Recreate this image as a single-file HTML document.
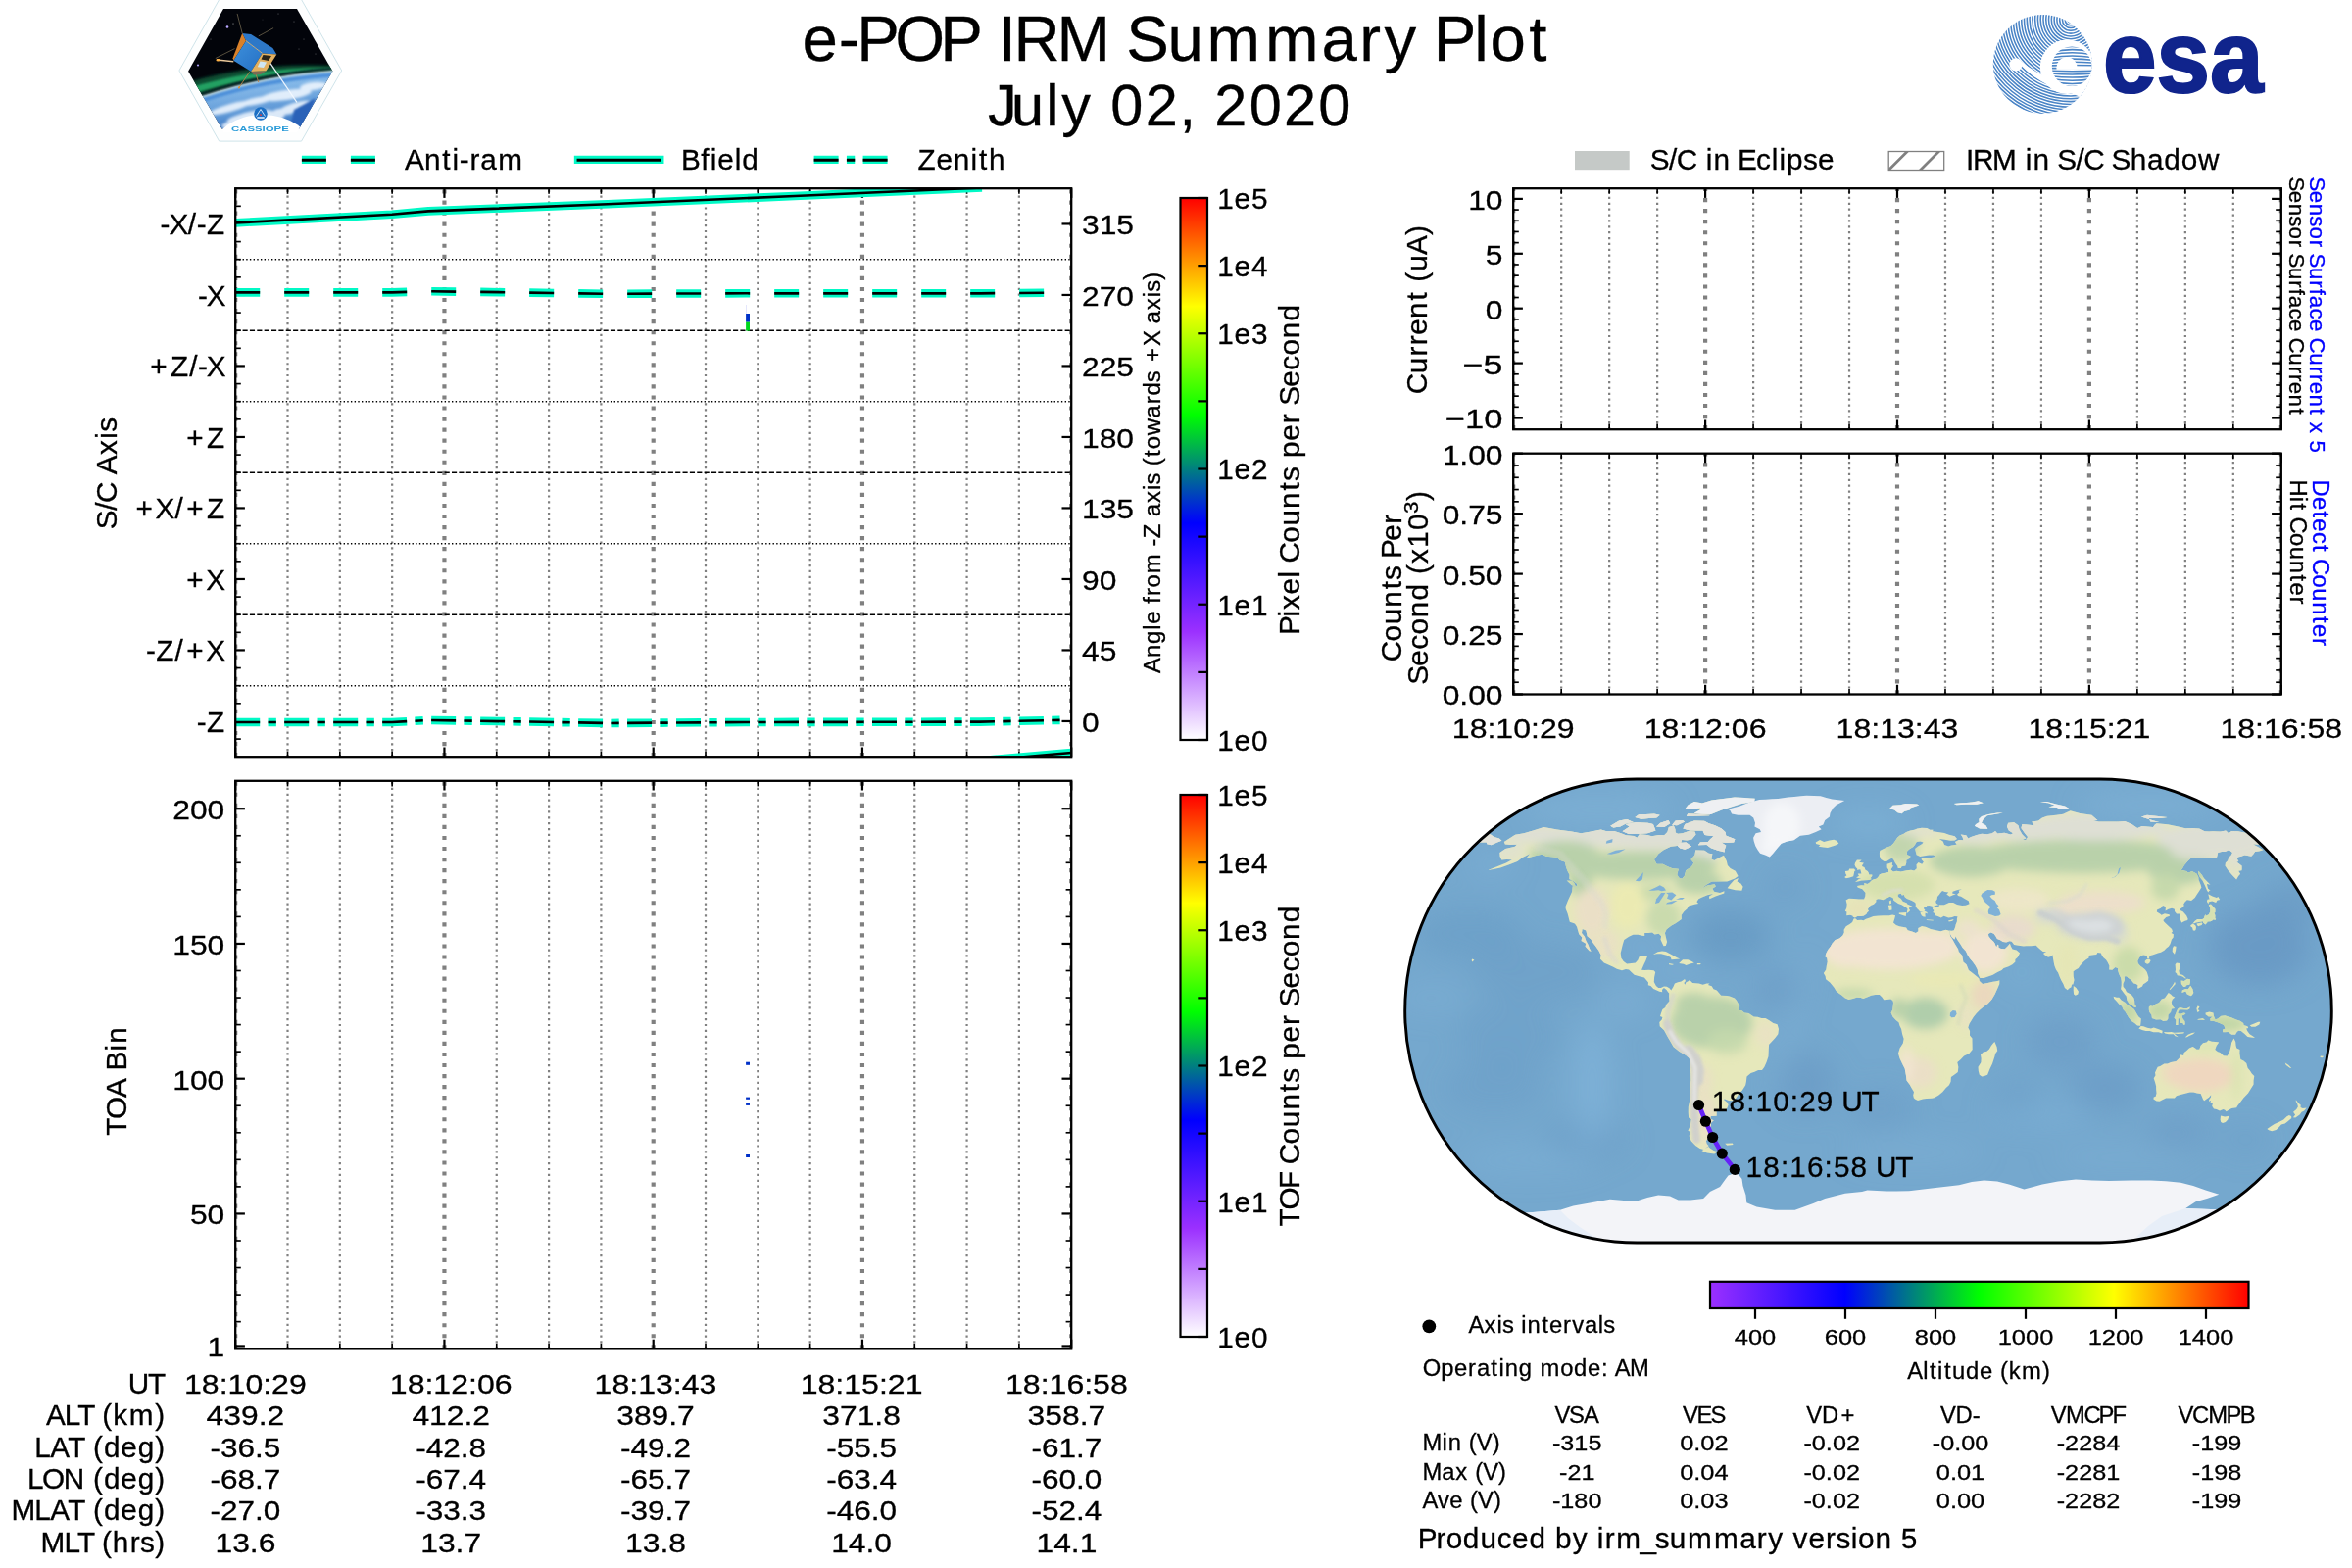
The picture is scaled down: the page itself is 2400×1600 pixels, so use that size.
<!DOCTYPE html><html><head><meta charset="utf-8"><title>e-POP IRM Summary Plot</title>
<style>html,body{margin:0;padding:0;background:#fff;}body{width:2400px;height:1600px;overflow:hidden;}svg{display:block;will-change:transform;}text{font-family:"Liberation Sans",sans-serif;white-space:pre;}</style></head><body>
<svg width="2400" height="1600" viewBox="0 0 2400 1600">
<rect width="2400" height="1600" fill="#fff"/>
<defs>
<linearGradient id="cmapV" x1="0" y1="1" x2="0" y2="0"><stop offset="0" stop-color="#ffffff"/><stop offset="0.2" stop-color="#9b30ff"/><stop offset="0.4" stop-color="#0000ff"/><stop offset="0.6" stop-color="#00ff00"/><stop offset="0.8" stop-color="#ffff00"/><stop offset="1" stop-color="#ff0000"/></linearGradient>
<linearGradient id="cmapH" x1="0" y1="0" x2="1" y2="0"><stop offset="0" stop-color="#9b30ff"/><stop offset="0.25" stop-color="#0000ff"/><stop offset="0.5" stop-color="#00ff00"/><stop offset="0.75" stop-color="#ffff00"/><stop offset="1" stop-color="#ff0000"/></linearGradient>
<clipPath id="clip1"><rect x="240.2" y="192.2" width="853.0" height="580.0"/></clipPath>
</defs>
<text transform="translate(1199.70,62.20) scale(1.0094,1)" x="-377.6 -340.8 -322.4 -283.9 -238.3 -197.8 -179.2 -163.7 -120.1 -66.4 -50.1 -8.2 31.6 90.5 147.5 185.8 210.7 245.4 260.7 301.8 317.9 357.3" y="0" font-size="64.78" fill="#000" stroke="#000" stroke-width="0.3">e-POP IRM Summary Plot</text>
<text transform="translate(1197.10,127.60) scale(1.0094,1)" x="-187.4 -163.5 -128.6 -112.8 -81.2 -63.2 -28.2 6.3 23.8 41.8 76.9 111.9 146.9" y="0" font-size="58.89" fill="#000" stroke="#000" stroke-width="0.3">July 02, 2020</text>
<g id="cassiope">
<defs>
<clipPath id="hexin"><polygon points="192.1,72.7 228,8.9 303,8.9 339.4,72.7 305,131.4 226.5,131.4"/></clipPath>
<linearGradient id="earthg" x1="0" y1="0" x2="0.25" y2="1"><stop offset="0" stop-color="#9fcdf2"/><stop offset="0.35" stop-color="#84b8e8"/><stop offset="0.7" stop-color="#5d97d6"/><stop offset="1" stop-color="#2f6bbd"/></linearGradient>
<linearGradient id="satb" x1="0" y1="0" x2="1" y2="1"><stop offset="0" stop-color="#3d90dc"/><stop offset="1" stop-color="#2570c4"/></linearGradient>
<filter id="blur2" x="-20%" y="-20%" width="140%" height="140%"><feGaussianBlur stdDeviation="1.6"/></filter>
<filter id="blur1" x="-20%" y="-20%" width="140%" height="140%"><feGaussianBlur stdDeviation="0.8"/></filter>
</defs>
<polygon points="182.9,72 223.7,-0.5 307.5,-0.5 348.7,72 307.5,144.1 223.7,144.1" fill="#fdfefe" stroke="#cfe4ea" stroke-width="1"/>
<g clip-path="url(#hexin)">
<rect x="185" y="5" width="160" height="130" fill="#02040a"/>
<path d="M185,105.5 Q262,76.5 345,71.5 L345,140 L185,140 Z" fill="url(#earthg)"/>
<path d="M185,86 Q262,62 345,67.5 L345,72 Q262,77 185,106 Z" fill="#0b4d33" filter="url(#blur2)"/>
<path d="M185,92 Q262,67.5 345,69 L345,71.2 Q262,73.5 185,99.5 Z" fill="#22a062" filter="url(#blur1)"/>
<path d="M185,103.8 Q262,74.8 345,69.8" fill="none" stroke="#06101f" stroke-width="2.6" filter="url(#blur1)" opacity="0.9"/>
<path d="M185,106.6 Q262,77.6 345,72.6" fill="none" stroke="#eaf5ff" stroke-width="2.0" filter="url(#blur1)" opacity="0.95"/>
<path d="M185,110 Q262,81 345,76" fill="none" stroke="#3f86d6" stroke-width="4" filter="url(#blur1)" opacity="0.8"/>
<g filter="url(#blur2)" opacity="0.85">
<ellipse cx="235" cy="110" rx="22" ry="4" transform="rotate(-16 235 110)" fill="#f4f9ff"/>
<ellipse cx="262" cy="103" rx="20" ry="3.5" transform="rotate(-12 262 103)" fill="#f4f9ff"/>
<ellipse cx="292" cy="97" rx="26" ry="5" transform="rotate(-8 292 97)" fill="#f4f9ff"/>
<ellipse cx="320" cy="88" rx="14" ry="4" transform="rotate(-6 320 88)" fill="#f4f9ff"/>
<ellipse cx="255" cy="119" rx="24" ry="5" transform="rotate(-12 255 119)" fill="#f4f9ff"/>
<ellipse cx="300" cy="110" rx="18" ry="5" transform="rotate(-18 300 110)" fill="#f4f9ff"/>
<ellipse cx="240" cy="127" rx="14" ry="4" transform="rotate(-8 240 127)" fill="#f4f9ff"/>
<ellipse cx="282" cy="118" rx="10" ry="6" transform="rotate(-30 282 118)" fill="#f4f9ff"/>
</g>
<path d="M300,112 L322,100 L312,131 L296,131 Z" fill="#2a62b8" filter="url(#blur1)"/>
<line x1="275.3" y1="63.7" x2="303" y2="104.5" stroke="#f4f9ff" stroke-width="1.3" opacity="0.95"/>
<g stroke="#7d7156" stroke-width="0.7">
<line x1="247.2" y1="34" x2="242.1" y2="13.9"/><line x1="263.8" y1="36.9" x2="279.1" y2="28.6"/><line x1="239.5" y1="49.6" x2="219.8" y2="59.5"/>
</g>
<g stroke="#b9824a" stroke-width="0.9"><line x1="254.8" y1="73.2" x2="244" y2="89.2"/><line x1="260.5" y1="74" x2="263.8" y2="84.1"/></g>
<circle cx="244" cy="89.4" r="1.1" fill="#e09a3e"/>
<line x1="221" y1="61.1" x2="238.3" y2="62.7" stroke="#e9c79a" stroke-width="1.5"/>
<ellipse cx="222.6" cy="61.2" rx="2.2" ry="1.2" fill="#ffb347"/>
<polygon points="247.2,34 256.1,35 278.4,49 282.3,55.4 267.6,54.4 251,41.7" fill="#2d78c8"/>
<polygon points="247.2,34 251,41.7 238.3,61.8 237.6,59.2" fill="#d9812a"/>
<polygon points="251,41.7 267.6,54.4 256.1,72.9 238.3,61.8" fill="url(#satb)"/>
<polygon points="267.6,54.4 282.3,55.4 271.4,72.6 256.1,72.9" fill="#e2b060"/>
<polygon points="268.5,56 277,57 274,62 266.5,60.5" fill="#2a2418"/>
<polygon points="265.5,62.5 272,63.5 269,69 262.8,68.3" fill="#cfe6f2"/>
<polygon points="256.1,72.9 271.4,72.6 266,76 259,76.5" fill="#7a6a55"/>
<path d="M251,41.7 L267.6,54.4" stroke="#f0c27a" stroke-width="0.8"/>
</g>
<clipPath id="hexin2"><polygon points="192.1,72.7 228,8.9 303,8.9 339.4,72.7 303,135 228.5,135"/></clipPath>
<ellipse cx="268" cy="152" rx="50" ry="35" fill="#ffffff" clip-path="url(#hexin2)"/>
<circle cx="266" cy="116" r="6.8" fill="#1c6fc4"/>
<path d="M261.5,118.5 L266,111.5 L270.5,118.5" fill="none" stroke="#dfeeff" stroke-width="0.9"/>
<circle cx="266" cy="117.2" r="0.9" fill="#e83a3a"/>
<rect x="262.3" y="119.2" width="7.4" height="1.6" fill="#dfeeff"/>
<text x="236" y="133.6" font-size="6.6" font-weight="bold" fill="#2a9bd8" textLength="58.8" lengthAdjust="spacingAndGlyphs">CASSIOPE</text>
<circle cx="232" cy="27.5" r="1.3" fill="#b9a8ff"/>
<circle cx="202" cy="66.5" r="1.1" fill="#a99cf2"/>
<circle cx="238" cy="24" r="0.5" fill="#ddd"/>
<circle cx="300" cy="22" r="0.4" fill="#ccc"/>
<circle cx="310" cy="40" r="0.4" fill="#bbb"/>
<circle cx="284" cy="14" r="0.4" fill="#ccc"/>
<circle cx="215" cy="40" r="0.4" fill="#bbb"/>
<circle cx="322" cy="55" r="0.4" fill="#bbb"/>
<circle cx="268" cy="20" r="0.35" fill="#aaa"/>
<circle cx="305" cy="50" r="0.4" fill="#bbb"/>
</g>
<g id="esa">
<defs>
<clipPath id="globe"><circle cx="2084.3" cy="65.4" r="50.5"/></clipPath>
<clipPath id="eball"><circle cx="2114.1" cy="67.7" r="20.3"/></clipPath>
</defs>
<g clip-path="url(#globe)">
<circle cx="2113.0" cy="20.0" r="3.00" fill="none" stroke="#4a84c6" stroke-width="1.55"/>
<circle cx="2113.0" cy="20.0" r="5.78" fill="none" stroke="#4a84c6" stroke-width="1.55"/>
<circle cx="2113.0" cy="20.0" r="8.56" fill="none" stroke="#4a84c6" stroke-width="1.55"/>
<circle cx="2113.0" cy="20.0" r="11.34" fill="none" stroke="#4a84c6" stroke-width="1.55"/>
<circle cx="2113.0" cy="20.0" r="14.12" fill="none" stroke="#4a84c6" stroke-width="1.55"/>
<circle cx="2113.0" cy="20.0" r="16.90" fill="none" stroke="#4a84c6" stroke-width="1.55"/>
<circle cx="2113.0" cy="20.0" r="19.68" fill="none" stroke="#4a84c6" stroke-width="1.55"/>
<circle cx="2113.0" cy="20.0" r="22.46" fill="none" stroke="#4a84c6" stroke-width="1.55"/>
<circle cx="2113.0" cy="20.0" r="25.24" fill="none" stroke="#4a84c6" stroke-width="1.55"/>
<circle cx="2113.0" cy="20.0" r="28.02" fill="none" stroke="#4a84c6" stroke-width="1.55"/>
<circle cx="2113.0" cy="20.0" r="30.80" fill="none" stroke="#4a84c6" stroke-width="1.55"/>
<circle cx="2113.0" cy="20.0" r="33.58" fill="none" stroke="#4a84c6" stroke-width="1.55"/>
<circle cx="2113.0" cy="20.0" r="36.36" fill="none" stroke="#4a84c6" stroke-width="1.55"/>
<circle cx="2113.0" cy="20.0" r="39.14" fill="none" stroke="#4a84c6" stroke-width="1.55"/>
<circle cx="2113.0" cy="20.0" r="41.92" fill="none" stroke="#4a84c6" stroke-width="1.55"/>
<circle cx="2113.0" cy="20.0" r="44.70" fill="none" stroke="#4a84c6" stroke-width="1.55"/>
<circle cx="2113.0" cy="20.0" r="47.48" fill="none" stroke="#4a84c6" stroke-width="1.55"/>
<circle cx="2113.0" cy="20.0" r="50.26" fill="none" stroke="#4a84c6" stroke-width="1.55"/>
<circle cx="2113.0" cy="20.0" r="53.04" fill="none" stroke="#4a84c6" stroke-width="1.55"/>
<circle cx="2113.0" cy="20.0" r="55.82" fill="none" stroke="#4a84c6" stroke-width="1.55"/>
<circle cx="2113.0" cy="20.0" r="58.60" fill="none" stroke="#4a84c6" stroke-width="1.55"/>
<circle cx="2113.0" cy="20.0" r="61.38" fill="none" stroke="#4a84c6" stroke-width="1.55"/>
<circle cx="2113.0" cy="20.0" r="64.16" fill="none" stroke="#4a84c6" stroke-width="1.55"/>
<circle cx="2113.0" cy="20.0" r="66.94" fill="none" stroke="#4a84c6" stroke-width="1.55"/>
<circle cx="2113.0" cy="20.0" r="69.72" fill="none" stroke="#4a84c6" stroke-width="1.55"/>
<circle cx="2113.0" cy="20.0" r="72.50" fill="none" stroke="#4a84c6" stroke-width="1.55"/>
<circle cx="2113.0" cy="20.0" r="75.28" fill="none" stroke="#4a84c6" stroke-width="1.55"/>
<circle cx="2113.0" cy="20.0" r="78.06" fill="none" stroke="#4a84c6" stroke-width="1.55"/>
<circle cx="2113.0" cy="20.0" r="80.84" fill="none" stroke="#4a84c6" stroke-width="1.55"/>
<circle cx="2113.0" cy="20.0" r="83.62" fill="none" stroke="#4a84c6" stroke-width="1.55"/>
<circle cx="2113.0" cy="20.0" r="86.40" fill="none" stroke="#4a84c6" stroke-width="1.55"/>
<circle cx="2113.0" cy="20.0" r="89.18" fill="none" stroke="#4a84c6" stroke-width="1.55"/>
<circle cx="2113.0" cy="20.0" r="91.96" fill="none" stroke="#4a84c6" stroke-width="1.55"/>
<circle cx="2113.0" cy="20.0" r="94.74" fill="none" stroke="#4a84c6" stroke-width="1.55"/>
<circle cx="2113.0" cy="20.0" r="97.52" fill="none" stroke="#4a84c6" stroke-width="1.55"/>
<circle cx="2113.0" cy="20.0" r="100.30" fill="none" stroke="#4a84c6" stroke-width="1.55"/>
<circle cx="2113.0" cy="20.0" r="103.08" fill="none" stroke="#4a84c6" stroke-width="1.55"/>
<circle cx="2113.0" cy="20.0" r="105.86" fill="none" stroke="#4a84c6" stroke-width="1.55"/>
<circle cx="2113.0" cy="20.0" r="108.64" fill="none" stroke="#4a84c6" stroke-width="1.55"/>
<circle cx="2113.0" cy="20.0" r="111.42" fill="none" stroke="#4a84c6" stroke-width="1.55"/>
<circle cx="2113.0" cy="20.0" r="114.20" fill="none" stroke="#4a84c6" stroke-width="1.55"/>
<circle cx="2113.0" cy="20.0" r="116.98" fill="none" stroke="#4a84c6" stroke-width="1.55"/>
<circle cx="2113.0" cy="20.0" r="119.76" fill="none" stroke="#4a84c6" stroke-width="1.55"/>
<circle cx="2113.0" cy="20.0" r="122.54" fill="none" stroke="#4a84c6" stroke-width="1.55"/>
<circle cx="2113.0" cy="20.0" r="125.32" fill="none" stroke="#4a84c6" stroke-width="1.55"/>
<circle cx="2113.0" cy="20.0" r="128.10" fill="none" stroke="#4a84c6" stroke-width="1.55"/>
<circle cx="2113.0" cy="20.0" r="130.88" fill="none" stroke="#4a84c6" stroke-width="1.55"/>
<circle cx="2113.0" cy="20.0" r="133.66" fill="none" stroke="#4a84c6" stroke-width="1.55"/>
<circle cx="2113.0" cy="20.0" r="136.44" fill="none" stroke="#4a84c6" stroke-width="1.55"/>
<circle cx="2113.0" cy="20.0" r="139.22" fill="none" stroke="#4a84c6" stroke-width="1.55"/>
<circle cx="2113.0" cy="20.0" r="142.00" fill="none" stroke="#4a84c6" stroke-width="1.55"/>
<circle cx="2113.0" cy="20.0" r="144.78" fill="none" stroke="#4a84c6" stroke-width="1.55"/>
<circle cx="2113.0" cy="20.0" r="147.56" fill="none" stroke="#4a84c6" stroke-width="1.55"/>
<circle cx="2109.6" cy="68.3" r="27.8" fill="#fff"/>
<path d="M2061,64.5 Q2072,78 2092,88 L2096,82 Q2076,74 2063,63 Z" fill="#fff"/>
<path d="M2090,86 L2123,99 L2142,92 L2142,68 L2118,92 Z" fill="#fff"/>
<circle cx="2057" cy="65.8" r="6.6" fill="#fff"/>
</g>
<g clip-path="url(#eball)">
<path d="M2092,45.57 Q2114.3,36.66 2137,45.57" fill="none" stroke="#4a84c6" stroke-width="1.55"/>
<path d="M2092,48.24 Q2114.3,40.32 2137,48.24" fill="none" stroke="#4a84c6" stroke-width="1.55"/>
<path d="M2092,50.91 Q2114.3,43.98 2137,50.91" fill="none" stroke="#4a84c6" stroke-width="1.55"/>
<path d="M2092,53.58 Q2114.3,47.64 2137,53.58" fill="none" stroke="#4a84c6" stroke-width="1.55"/>
<path d="M2092,56.25 Q2114.3,51.30 2137,56.25" fill="none" stroke="#4a84c6" stroke-width="1.55"/>
<path d="M2092,58.92 Q2114.3,54.96 2137,58.92" fill="none" stroke="#4a84c6" stroke-width="1.55"/>
<path d="M2092,61.59 Q2114.3,58.62 2137,61.59" fill="none" stroke="#4a84c6" stroke-width="1.55"/>
<path d="M2092,64.26 Q2114.3,62.28 2137,64.26" fill="none" stroke="#4a84c6" stroke-width="1.55"/>
<path d="M2092,66.93 Q2114.3,65.94 2137,66.93" fill="none" stroke="#4a84c6" stroke-width="1.55"/>
<path d="M2092,69.60 Q2114.3,69.60 2137,69.60" fill="none" stroke="#4a84c6" stroke-width="1.55"/>
<path d="M2092,72.27 Q2114.3,73.26 2137,72.27" fill="none" stroke="#4a84c6" stroke-width="1.55"/>
<path d="M2092,74.94 Q2114.3,76.92 2137,74.94" fill="none" stroke="#4a84c6" stroke-width="1.55"/>
<path d="M2092,77.61 Q2114.3,80.58 2137,77.61" fill="none" stroke="#4a84c6" stroke-width="1.55"/>
<path d="M2092,80.28 Q2114.3,84.24 2137,80.28" fill="none" stroke="#4a84c6" stroke-width="1.55"/>
<path d="M2092,82.95 Q2114.3,87.90 2137,82.95" fill="none" stroke="#4a84c6" stroke-width="1.55"/>
<path d="M2092,85.62 Q2114.3,91.56 2137,85.62" fill="none" stroke="#4a84c6" stroke-width="1.55"/>
<path d="M2092,88.29 Q2114.3,95.22 2137,88.29" fill="none" stroke="#4a84c6" stroke-width="1.55"/>
<path d="M2092,90.96 Q2114.3,98.88 2137,90.96" fill="none" stroke="#4a84c6" stroke-width="1.55"/>
<path d="M2092,93.63 Q2114.3,102.54 2137,93.63" fill="none" stroke="#4a84c6" stroke-width="1.55"/>
<path d="M2098.5,69.2 Q2098.8,58.8 2109,58.4 Q2119.2,58.6 2119.6,69.2 Z" fill="#fff"/>
<rect x="2098.5" y="67.9" width="41" height="3.0" fill="#fff"/>
</g>
<text x="2146" y="93.9" font-size="103.5" font-weight="bold" fill="#10248c" stroke="#10248c" stroke-width="2.2" textLength="163.5" lengthAdjust="spacingAndGlyphs">esa</text>
</g>
<clipPath id="gclip1"><rect x="240.2" y="192.2" width="853.0" height="580.0"/></clipPath>
<g clip-path="url(#gclip1)">
<line x1="240.20" y1="772.20" x2="240.20" y2="192.20" stroke="#808080" stroke-width="4.17" stroke-linecap="butt" stroke-dasharray="4.17 6.88"/>
<line x1="293.51" y1="772.20" x2="293.51" y2="192.20" stroke="#808080" stroke-width="2.22" stroke-linecap="butt" stroke-dasharray="2.22 3.66"/>
<line x1="346.82" y1="772.20" x2="346.82" y2="192.20" stroke="#808080" stroke-width="2.22" stroke-linecap="butt" stroke-dasharray="2.22 3.66"/>
<line x1="400.14" y1="772.20" x2="400.14" y2="192.20" stroke="#808080" stroke-width="2.22" stroke-linecap="butt" stroke-dasharray="2.22 3.66"/>
<line x1="453.45" y1="772.20" x2="453.45" y2="192.20" stroke="#808080" stroke-width="4.17" stroke-linecap="butt" stroke-dasharray="4.17 6.88"/>
<line x1="506.76" y1="772.20" x2="506.76" y2="192.20" stroke="#808080" stroke-width="2.22" stroke-linecap="butt" stroke-dasharray="2.22 3.66"/>
<line x1="560.08" y1="772.20" x2="560.08" y2="192.20" stroke="#808080" stroke-width="2.22" stroke-linecap="butt" stroke-dasharray="2.22 3.66"/>
<line x1="613.39" y1="772.20" x2="613.39" y2="192.20" stroke="#808080" stroke-width="2.22" stroke-linecap="butt" stroke-dasharray="2.22 3.66"/>
<line x1="666.70" y1="772.20" x2="666.70" y2="192.20" stroke="#808080" stroke-width="4.17" stroke-linecap="butt" stroke-dasharray="4.17 6.88"/>
<line x1="720.01" y1="772.20" x2="720.01" y2="192.20" stroke="#808080" stroke-width="2.22" stroke-linecap="butt" stroke-dasharray="2.22 3.66"/>
<line x1="773.33" y1="772.20" x2="773.33" y2="192.20" stroke="#808080" stroke-width="2.22" stroke-linecap="butt" stroke-dasharray="2.22 3.66"/>
<line x1="826.64" y1="772.20" x2="826.64" y2="192.20" stroke="#808080" stroke-width="2.22" stroke-linecap="butt" stroke-dasharray="2.22 3.66"/>
<line x1="879.95" y1="772.20" x2="879.95" y2="192.20" stroke="#808080" stroke-width="4.17" stroke-linecap="butt" stroke-dasharray="4.17 6.88"/>
<line x1="933.26" y1="772.20" x2="933.26" y2="192.20" stroke="#808080" stroke-width="2.22" stroke-linecap="butt" stroke-dasharray="2.22 3.66"/>
<line x1="986.58" y1="772.20" x2="986.58" y2="192.20" stroke="#808080" stroke-width="2.22" stroke-linecap="butt" stroke-dasharray="2.22 3.66"/>
<line x1="1039.89" y1="772.20" x2="1039.89" y2="192.20" stroke="#808080" stroke-width="2.22" stroke-linecap="butt" stroke-dasharray="2.22 3.66"/>
<line x1="1093.20" y1="772.20" x2="1093.20" y2="192.20" stroke="#808080" stroke-width="4.17" stroke-linecap="butt" stroke-dasharray="4.17 6.88"/>
</g>
<line x1="240.20" y1="264.70" x2="1093.20" y2="264.70" stroke="#000" stroke-width="1.39" stroke-linecap="butt" stroke-dasharray="1.39 2.29"/>
<line x1="240.20" y1="337.20" x2="1093.20" y2="337.20" stroke="#000" stroke-width="1.39" stroke-linecap="butt" stroke-dasharray="5.14 2.22"/>
<line x1="240.20" y1="409.70" x2="1093.20" y2="409.70" stroke="#000" stroke-width="1.39" stroke-linecap="butt" stroke-dasharray="1.39 2.29"/>
<line x1="240.20" y1="482.20" x2="1093.20" y2="482.20" stroke="#000" stroke-width="1.39" stroke-linecap="butt" stroke-dasharray="5.14 2.22"/>
<line x1="240.20" y1="554.70" x2="1093.20" y2="554.70" stroke="#000" stroke-width="1.39" stroke-linecap="butt" stroke-dasharray="1.39 2.29"/>
<line x1="240.20" y1="627.20" x2="1093.20" y2="627.20" stroke="#000" stroke-width="1.39" stroke-linecap="butt" stroke-dasharray="5.14 2.22"/>
<line x1="240.20" y1="699.70" x2="1093.20" y2="699.70" stroke="#000" stroke-width="1.39" stroke-linecap="butt" stroke-dasharray="1.39 2.29"/>
<line x1="240.20" y1="772.20" x2="240.20" y2="762.50" stroke="#000" stroke-width="2.22" stroke-linecap="butt"/>
<line x1="240.20" y1="192.20" x2="240.20" y2="201.90" stroke="#000" stroke-width="2.22" stroke-linecap="butt"/>
<line x1="293.51" y1="772.20" x2="293.51" y2="766.60" stroke="#000" stroke-width="1.67" stroke-linecap="butt"/>
<line x1="293.51" y1="192.20" x2="293.51" y2="197.80" stroke="#000" stroke-width="1.67" stroke-linecap="butt"/>
<line x1="346.82" y1="772.20" x2="346.82" y2="766.60" stroke="#000" stroke-width="1.67" stroke-linecap="butt"/>
<line x1="346.82" y1="192.20" x2="346.82" y2="197.80" stroke="#000" stroke-width="1.67" stroke-linecap="butt"/>
<line x1="400.14" y1="772.20" x2="400.14" y2="766.60" stroke="#000" stroke-width="1.67" stroke-linecap="butt"/>
<line x1="400.14" y1="192.20" x2="400.14" y2="197.80" stroke="#000" stroke-width="1.67" stroke-linecap="butt"/>
<line x1="453.45" y1="772.20" x2="453.45" y2="762.50" stroke="#000" stroke-width="2.22" stroke-linecap="butt"/>
<line x1="453.45" y1="192.20" x2="453.45" y2="201.90" stroke="#000" stroke-width="2.22" stroke-linecap="butt"/>
<line x1="506.76" y1="772.20" x2="506.76" y2="766.60" stroke="#000" stroke-width="1.67" stroke-linecap="butt"/>
<line x1="506.76" y1="192.20" x2="506.76" y2="197.80" stroke="#000" stroke-width="1.67" stroke-linecap="butt"/>
<line x1="560.08" y1="772.20" x2="560.08" y2="766.60" stroke="#000" stroke-width="1.67" stroke-linecap="butt"/>
<line x1="560.08" y1="192.20" x2="560.08" y2="197.80" stroke="#000" stroke-width="1.67" stroke-linecap="butt"/>
<line x1="613.39" y1="772.20" x2="613.39" y2="766.60" stroke="#000" stroke-width="1.67" stroke-linecap="butt"/>
<line x1="613.39" y1="192.20" x2="613.39" y2="197.80" stroke="#000" stroke-width="1.67" stroke-linecap="butt"/>
<line x1="666.70" y1="772.20" x2="666.70" y2="762.50" stroke="#000" stroke-width="2.22" stroke-linecap="butt"/>
<line x1="666.70" y1="192.20" x2="666.70" y2="201.90" stroke="#000" stroke-width="2.22" stroke-linecap="butt"/>
<line x1="720.01" y1="772.20" x2="720.01" y2="766.60" stroke="#000" stroke-width="1.67" stroke-linecap="butt"/>
<line x1="720.01" y1="192.20" x2="720.01" y2="197.80" stroke="#000" stroke-width="1.67" stroke-linecap="butt"/>
<line x1="773.33" y1="772.20" x2="773.33" y2="766.60" stroke="#000" stroke-width="1.67" stroke-linecap="butt"/>
<line x1="773.33" y1="192.20" x2="773.33" y2="197.80" stroke="#000" stroke-width="1.67" stroke-linecap="butt"/>
<line x1="826.64" y1="772.20" x2="826.64" y2="766.60" stroke="#000" stroke-width="1.67" stroke-linecap="butt"/>
<line x1="826.64" y1="192.20" x2="826.64" y2="197.80" stroke="#000" stroke-width="1.67" stroke-linecap="butt"/>
<line x1="879.95" y1="772.20" x2="879.95" y2="762.50" stroke="#000" stroke-width="2.22" stroke-linecap="butt"/>
<line x1="879.95" y1="192.20" x2="879.95" y2="201.90" stroke="#000" stroke-width="2.22" stroke-linecap="butt"/>
<line x1="933.26" y1="772.20" x2="933.26" y2="766.60" stroke="#000" stroke-width="1.67" stroke-linecap="butt"/>
<line x1="933.26" y1="192.20" x2="933.26" y2="197.80" stroke="#000" stroke-width="1.67" stroke-linecap="butt"/>
<line x1="986.58" y1="772.20" x2="986.58" y2="766.60" stroke="#000" stroke-width="1.67" stroke-linecap="butt"/>
<line x1="986.58" y1="192.20" x2="986.58" y2="197.80" stroke="#000" stroke-width="1.67" stroke-linecap="butt"/>
<line x1="1039.89" y1="772.20" x2="1039.89" y2="766.60" stroke="#000" stroke-width="1.67" stroke-linecap="butt"/>
<line x1="1039.89" y1="192.20" x2="1039.89" y2="197.80" stroke="#000" stroke-width="1.67" stroke-linecap="butt"/>
<line x1="1093.20" y1="772.20" x2="1093.20" y2="762.50" stroke="#000" stroke-width="2.22" stroke-linecap="butt"/>
<line x1="1093.20" y1="192.20" x2="1093.20" y2="201.90" stroke="#000" stroke-width="2.22" stroke-linecap="butt"/>
<line x1="240.20" y1="735.95" x2="249.90" y2="735.95" stroke="#000" stroke-width="2.22" stroke-linecap="butt"/>
<line x1="240.20" y1="663.45" x2="249.90" y2="663.45" stroke="#000" stroke-width="2.22" stroke-linecap="butt"/>
<line x1="240.20" y1="590.95" x2="249.90" y2="590.95" stroke="#000" stroke-width="2.22" stroke-linecap="butt"/>
<line x1="240.20" y1="518.45" x2="249.90" y2="518.45" stroke="#000" stroke-width="2.22" stroke-linecap="butt"/>
<line x1="240.20" y1="445.95" x2="249.90" y2="445.95" stroke="#000" stroke-width="2.22" stroke-linecap="butt"/>
<line x1="240.20" y1="373.45" x2="249.90" y2="373.45" stroke="#000" stroke-width="2.22" stroke-linecap="butt"/>
<line x1="240.20" y1="300.95" x2="249.90" y2="300.95" stroke="#000" stroke-width="2.22" stroke-linecap="butt"/>
<line x1="240.20" y1="228.45" x2="249.90" y2="228.45" stroke="#000" stroke-width="2.22" stroke-linecap="butt"/>
<line x1="240.20" y1="754.08" x2="245.80" y2="754.08" stroke="#000" stroke-width="1.67" stroke-linecap="butt"/>
<line x1="240.20" y1="717.83" x2="245.80" y2="717.83" stroke="#000" stroke-width="1.67" stroke-linecap="butt"/>
<line x1="240.20" y1="699.70" x2="245.80" y2="699.70" stroke="#000" stroke-width="1.67" stroke-linecap="butt"/>
<line x1="240.20" y1="681.58" x2="245.80" y2="681.58" stroke="#000" stroke-width="1.67" stroke-linecap="butt"/>
<line x1="240.20" y1="645.33" x2="245.80" y2="645.33" stroke="#000" stroke-width="1.67" stroke-linecap="butt"/>
<line x1="240.20" y1="627.20" x2="245.80" y2="627.20" stroke="#000" stroke-width="1.67" stroke-linecap="butt"/>
<line x1="240.20" y1="609.08" x2="245.80" y2="609.08" stroke="#000" stroke-width="1.67" stroke-linecap="butt"/>
<line x1="240.20" y1="572.83" x2="245.80" y2="572.83" stroke="#000" stroke-width="1.67" stroke-linecap="butt"/>
<line x1="240.20" y1="554.70" x2="245.80" y2="554.70" stroke="#000" stroke-width="1.67" stroke-linecap="butt"/>
<line x1="240.20" y1="536.58" x2="245.80" y2="536.58" stroke="#000" stroke-width="1.67" stroke-linecap="butt"/>
<line x1="240.20" y1="500.33" x2="245.80" y2="500.33" stroke="#000" stroke-width="1.67" stroke-linecap="butt"/>
<line x1="240.20" y1="482.20" x2="245.80" y2="482.20" stroke="#000" stroke-width="1.67" stroke-linecap="butt"/>
<line x1="240.20" y1="464.08" x2="245.80" y2="464.08" stroke="#000" stroke-width="1.67" stroke-linecap="butt"/>
<line x1="240.20" y1="427.83" x2="245.80" y2="427.83" stroke="#000" stroke-width="1.67" stroke-linecap="butt"/>
<line x1="240.20" y1="409.70" x2="245.80" y2="409.70" stroke="#000" stroke-width="1.67" stroke-linecap="butt"/>
<line x1="240.20" y1="391.58" x2="245.80" y2="391.58" stroke="#000" stroke-width="1.67" stroke-linecap="butt"/>
<line x1="240.20" y1="355.33" x2="245.80" y2="355.33" stroke="#000" stroke-width="1.67" stroke-linecap="butt"/>
<line x1="240.20" y1="337.20" x2="245.80" y2="337.20" stroke="#000" stroke-width="1.67" stroke-linecap="butt"/>
<line x1="240.20" y1="319.08" x2="245.80" y2="319.08" stroke="#000" stroke-width="1.67" stroke-linecap="butt"/>
<line x1="240.20" y1="282.83" x2="245.80" y2="282.83" stroke="#000" stroke-width="1.67" stroke-linecap="butt"/>
<line x1="240.20" y1="264.70" x2="245.80" y2="264.70" stroke="#000" stroke-width="1.67" stroke-linecap="butt"/>
<line x1="240.20" y1="246.58" x2="245.80" y2="246.58" stroke="#000" stroke-width="1.67" stroke-linecap="butt"/>
<line x1="240.20" y1="210.33" x2="245.80" y2="210.33" stroke="#000" stroke-width="1.67" stroke-linecap="butt"/>
<g clip-path="url(#clip1)">
<polyline points="240.2,227.4 400.0,218.8 437.0,215.4 620.0,208.3 811.0,200.0 1002.0,191.5" fill="none" stroke="#01f9c6" stroke-width="8.6" stroke-linecap="butt"/>
<polyline points="240.2,227.4 400.0,218.8 437.0,215.4 620.0,208.3 811.0,200.0 1002.0,191.5" fill="none" stroke="#000" stroke-width="2.65" stroke-linecap="butt"/>
<polyline points="1003.0,776.0 1093.2,768.0" fill="none" stroke="#01f9c6" stroke-width="8.6" stroke-linecap="butt"/>
<polyline points="1003.0,776.0 1093.2,768.0" fill="none" stroke="#000" stroke-width="2.65" stroke-linecap="butt"/>
<polyline points="240.2,298.4 400.0,298.4 437.0,297.2 540.0,298.6 620.0,299.8 760.0,299.3 1000.0,299.3 1085.0,298.6" fill="none" stroke="#01f9c6" stroke-width="8.6" stroke-linecap="butt" stroke-dasharray="25 25"/>
<polyline points="240.2,298.4 400.0,298.4 437.0,297.2 540.0,298.6 620.0,299.8 760.0,299.3 1000.0,299.3 1085.0,298.6" fill="none" stroke="#000" stroke-width="2.65" stroke-linecap="butt" stroke-dasharray="25 25"/>
<polyline points="240.2,737.0 400.0,737.0 437.0,735.0 540.0,736.5 620.0,738.0 760.0,737.0 1000.0,736.6 1085.0,734.8" fill="none" stroke="#01f9c6" stroke-width="8.6" stroke-linecap="butt" stroke-dasharray="25 8.33 8.33 8.33"/>
<polyline points="240.2,737.0 400.0,737.0 437.0,735.0 540.0,736.5 620.0,738.0 760.0,737.0 1000.0,736.6 1085.0,734.8" fill="none" stroke="#000" stroke-width="2.65" stroke-linecap="butt" stroke-dasharray="25 8.33 8.33 8.33"/>
</g>
<rect x="761.10" y="320.00" width="3.90" height="8.70" fill="#0032c8" stroke="none" stroke-width="0"/>
<rect x="761.10" y="328.70" width="3.90" height="8.90" fill="#00d71e" stroke="none" stroke-width="0"/>
<rect x="761.00" y="311.00" width="1.00" height="9.00" fill="#e4e6fb" stroke="none" stroke-width="0"/>
<line x1="1093.20" y1="735.95" x2="1083.50" y2="735.95" stroke="#000" stroke-width="2.22" stroke-linecap="butt"/>
<line x1="1093.20" y1="663.45" x2="1083.50" y2="663.45" stroke="#000" stroke-width="2.22" stroke-linecap="butt"/>
<line x1="1093.20" y1="590.95" x2="1083.50" y2="590.95" stroke="#000" stroke-width="2.22" stroke-linecap="butt"/>
<line x1="1093.20" y1="518.45" x2="1083.50" y2="518.45" stroke="#000" stroke-width="2.22" stroke-linecap="butt"/>
<line x1="1093.20" y1="445.95" x2="1083.50" y2="445.95" stroke="#000" stroke-width="2.22" stroke-linecap="butt"/>
<line x1="1093.20" y1="373.45" x2="1083.50" y2="373.45" stroke="#000" stroke-width="2.22" stroke-linecap="butt"/>
<line x1="1093.20" y1="300.95" x2="1083.50" y2="300.95" stroke="#000" stroke-width="2.22" stroke-linecap="butt"/>
<line x1="1093.20" y1="228.45" x2="1083.50" y2="228.45" stroke="#000" stroke-width="2.22" stroke-linecap="butt"/>
<rect x="240.20" y="192.20" width="853.00" height="580.00" fill="none" stroke="#000" stroke-width="2.3"/>
<text transform="translate(229.60,239.35) scale(1.0094,1)" x="-65.4 -56.6 -37.5 -28.7 -18.4" y="0" font-size="29.44" fill="#000" stroke="#000" stroke-width="0.3">-X/-Z</text>
<text x="1104.00" y="239.35" font-size="28.33" fill="#000" stroke="#000" stroke-width="0.3" textLength="53.02" lengthAdjust="spacingAndGlyphs">315</text>
<text transform="translate(229.60,311.85) scale(1.0094,1)" x="-27.4 -18.6" y="0" font-size="29.44" fill="#000" stroke="#000" stroke-width="0.3">-X</text>
<text x="1104.00" y="311.85" font-size="28.33" fill="#000" stroke="#000" stroke-width="0.3" textLength="53.02" lengthAdjust="spacingAndGlyphs">270</text>
<text transform="translate(229.60,384.35) scale(1.0094,1)" x="-75.7 -55.1 -36.1 -27.4 -18.6" y="0" font-size="29.44" fill="#000" stroke="#000" stroke-width="0.3">+Z/-X</text>
<text x="1104.00" y="384.35" font-size="28.33" fill="#000" stroke="#000" stroke-width="0.3" textLength="53.02" lengthAdjust="spacingAndGlyphs">225</text>
<text transform="translate(229.60,456.85) scale(1.0094,1)" x="-39.0 -18.4" y="0" font-size="29.44" fill="#000" stroke="#000" stroke-width="0.3">+Z</text>
<text x="1104.00" y="456.85" font-size="28.33" fill="#000" stroke="#000" stroke-width="0.3" textLength="53.02" lengthAdjust="spacingAndGlyphs">180</text>
<text transform="translate(229.60,529.35) scale(1.0094,1)" x="-90.2 -70.4 -50.6 -39.0 -18.4" y="0" font-size="29.44" fill="#000" stroke="#000" stroke-width="0.3">+X/+Z</text>
<text x="1104.00" y="529.35" font-size="28.33" fill="#000" stroke="#000" stroke-width="0.3" textLength="53.02" lengthAdjust="spacingAndGlyphs">135</text>
<text transform="translate(229.60,601.85) scale(1.0094,1)" x="-39.0 -19.2" y="0" font-size="29.44" fill="#000" stroke="#000" stroke-width="0.3">+X</text>
<text x="1104.00" y="601.85" font-size="28.33" fill="#000" stroke="#000" stroke-width="0.3" textLength="35.35" lengthAdjust="spacingAndGlyphs">90</text>
<text transform="translate(229.60,674.35) scale(1.0094,1)" x="-79.9 -69.6 -50.6 -39.0 -19.2" y="0" font-size="29.44" fill="#000" stroke="#000" stroke-width="0.3">-Z/+X</text>
<text x="1104.00" y="674.35" font-size="28.33" fill="#000" stroke="#000" stroke-width="0.3" textLength="35.35" lengthAdjust="spacingAndGlyphs">45</text>
<text transform="translate(229.60,746.85) scale(1.0094,1)" x="-28.7 -18.4" y="0" font-size="29.44" fill="#000" stroke="#000" stroke-width="0.3">-Z</text>
<text x="1104.00" y="746.85" font-size="28.33" fill="#000" stroke="#000" stroke-width="0.3" textLength="17.67" lengthAdjust="spacingAndGlyphs">0</text>
<text transform="translate(118.80,482.60) rotate(-90) scale(1.0094,1)" x="-57.0 -37.9 -30.2 -9.7 -1.6 18.4 34.5 41.4" y="0" font-size="29.44" fill="#000" stroke="#000" stroke-width="0.3">S/C Axis</text>
<text transform="translate(1183.50,482.00) rotate(-90) scale(1.0094,1)" x="-203.1 -187.3 -173.3 -159.3 -153.4 -139.9 -132.5 -124.8 -116.4 -102.4 -81.7 -74.8 -66.6 -51.6 -44.7 -30.7 -17.9 -12.4 -0.5 6.6 15.9 23.6 37.4 55.1 69.0 77.7 90.9 102.8 111.9 127.7 143.3 150.3 164.2 177.0 182.5 194.5" y="0" font-size="23.56" fill="#000" stroke="#000" stroke-width="0.3">Angle from -Z axis (towards +X axis)</text>
<line x1="307.9" y1="162.9" x2="391.2" y2="162.9" stroke="#01f9c6" stroke-width="8.33" stroke-linecap="butt" stroke-dasharray="25 25"/>
<line x1="307.9" y1="163.3" x2="391.2" y2="163.3" stroke="#000" stroke-width="2.9" stroke-linecap="butt" stroke-dasharray="25 25"/>
<line x1="590" y1="162.9" x2="673.3" y2="162.9" stroke="#01f9c6" stroke-width="8.33" stroke-linecap="square"/>
<line x1="590" y1="163.3" x2="673.3" y2="163.3" stroke="#000" stroke-width="2.9" stroke-linecap="square"/>
<line x1="830.6" y1="162.9" x2="913.9" y2="162.9" stroke="#01f9c6" stroke-width="8.33" stroke-linecap="butt" stroke-dasharray="25 8.33 8.33 8.33"/>
<line x1="830.6" y1="163.3" x2="913.9" y2="163.3" stroke="#000" stroke-width="2.9" stroke-linecap="butt" stroke-dasharray="25 8.33 8.33 8.33"/>
<text transform="translate(413.40,173.20) scale(1.0094,1)" x="-0.4 19.4 37.6 47.6 54.8 65.4 76.2 93.9" y="0" font-size="29.44" fill="#000" stroke="#000" stroke-width="0.3">Anti-ram</text>
<text transform="translate(695.50,173.20) scale(1.0094,1)" x="-0.4 19.6 29.1 36.5 53.7 61.3" y="0" font-size="29.44" fill="#000" stroke="#000" stroke-width="0.3">Bfield</text>
<text transform="translate(936.10,173.20) scale(1.0094,1)" x="0.4 19.1 36.3 53.8 62.2 72.2" y="0" font-size="29.44" fill="#000" stroke="#000" stroke-width="0.3">Zenith</text>
<rect x="1204.50" y="202.00" width="27.50" height="553.00" fill="url(#cmapV)" stroke="#000" stroke-width="2.22"/>
<line x1="1232.00" y1="202.00" x2="1222.30" y2="202.00" stroke="#000" stroke-width="2.22" stroke-linecap="butt"/>
<text transform="translate(1241.60,212.80) scale(1.0388,1)" x="0.6 17.3 34.0" y="0" font-size="28.61" fill="#000" stroke="#000" stroke-width="0.3">1e5</text>
<line x1="1232.00" y1="271.12" x2="1222.30" y2="271.12" stroke="#000" stroke-width="2.22" stroke-linecap="butt"/>
<text transform="translate(1241.60,281.93) scale(1.0388,1)" x="0.6 17.3 34.0" y="0" font-size="28.61" fill="#000" stroke="#000" stroke-width="0.3">1e4</text>
<line x1="1232.00" y1="340.25" x2="1222.30" y2="340.25" stroke="#000" stroke-width="2.22" stroke-linecap="butt"/>
<text transform="translate(1241.60,351.05) scale(1.0388,1)" x="0.6 17.3 34.0" y="0" font-size="28.61" fill="#000" stroke="#000" stroke-width="0.3">1e3</text>
<line x1="1232.00" y1="409.38" x2="1222.30" y2="409.38" stroke="#000" stroke-width="2.22" stroke-linecap="butt"/>
<line x1="1232.00" y1="478.50" x2="1222.30" y2="478.50" stroke="#000" stroke-width="2.22" stroke-linecap="butt"/>
<text transform="translate(1241.60,489.30) scale(1.0388,1)" x="0.6 17.3 34.0" y="0" font-size="28.61" fill="#000" stroke="#000" stroke-width="0.3">1e2</text>
<line x1="1232.00" y1="547.62" x2="1222.30" y2="547.62" stroke="#000" stroke-width="2.22" stroke-linecap="butt"/>
<line x1="1232.00" y1="616.75" x2="1222.30" y2="616.75" stroke="#000" stroke-width="2.22" stroke-linecap="butt"/>
<text transform="translate(1241.60,627.55) scale(1.0388,1)" x="0.6 17.3 34.0" y="0" font-size="28.61" fill="#000" stroke="#000" stroke-width="0.3">1e1</text>
<line x1="1232.00" y1="685.88" x2="1222.30" y2="685.88" stroke="#000" stroke-width="2.22" stroke-linecap="butt"/>
<line x1="1232.00" y1="755.00" x2="1222.30" y2="755.00" stroke="#000" stroke-width="2.22" stroke-linecap="butt"/>
<text transform="translate(1241.60,765.80) scale(1.0388,1)" x="0.6 17.3 34.0" y="0" font-size="28.61" fill="#000" stroke="#000" stroke-width="0.3">1e0</text>
<text transform="translate(1326.00,478.50) rotate(-90) scale(1.0094,1)" x="-168.0 -149.6 -142.1 -126.7 -109.9 -102.5 -95.1 -74.6 -57.5 -40.0 -21.8 -12.5 2.3 11.3 28.5 45.9 56.7 64.1 82.9 99.8 115.0 132.1 149.5" y="0" font-size="29.44" fill="#000" stroke="#000" stroke-width="0.3">Pixel Counts per Second</text>
<clipPath id="gclip2"><rect x="240.2" y="796.8" width="853.0" height="579.6000000000001"/></clipPath>
<g clip-path="url(#gclip2)">
<line x1="240.20" y1="1376.40" x2="240.20" y2="796.80" stroke="#808080" stroke-width="4.17" stroke-linecap="butt" stroke-dasharray="4.17 6.88"/>
<line x1="293.51" y1="1376.40" x2="293.51" y2="796.80" stroke="#808080" stroke-width="2.22" stroke-linecap="butt" stroke-dasharray="2.22 3.66"/>
<line x1="346.82" y1="1376.40" x2="346.82" y2="796.80" stroke="#808080" stroke-width="2.22" stroke-linecap="butt" stroke-dasharray="2.22 3.66"/>
<line x1="400.14" y1="1376.40" x2="400.14" y2="796.80" stroke="#808080" stroke-width="2.22" stroke-linecap="butt" stroke-dasharray="2.22 3.66"/>
<line x1="453.45" y1="1376.40" x2="453.45" y2="796.80" stroke="#808080" stroke-width="4.17" stroke-linecap="butt" stroke-dasharray="4.17 6.88"/>
<line x1="506.76" y1="1376.40" x2="506.76" y2="796.80" stroke="#808080" stroke-width="2.22" stroke-linecap="butt" stroke-dasharray="2.22 3.66"/>
<line x1="560.08" y1="1376.40" x2="560.08" y2="796.80" stroke="#808080" stroke-width="2.22" stroke-linecap="butt" stroke-dasharray="2.22 3.66"/>
<line x1="613.39" y1="1376.40" x2="613.39" y2="796.80" stroke="#808080" stroke-width="2.22" stroke-linecap="butt" stroke-dasharray="2.22 3.66"/>
<line x1="666.70" y1="1376.40" x2="666.70" y2="796.80" stroke="#808080" stroke-width="4.17" stroke-linecap="butt" stroke-dasharray="4.17 6.88"/>
<line x1="720.01" y1="1376.40" x2="720.01" y2="796.80" stroke="#808080" stroke-width="2.22" stroke-linecap="butt" stroke-dasharray="2.22 3.66"/>
<line x1="773.33" y1="1376.40" x2="773.33" y2="796.80" stroke="#808080" stroke-width="2.22" stroke-linecap="butt" stroke-dasharray="2.22 3.66"/>
<line x1="826.64" y1="1376.40" x2="826.64" y2="796.80" stroke="#808080" stroke-width="2.22" stroke-linecap="butt" stroke-dasharray="2.22 3.66"/>
<line x1="879.95" y1="1376.40" x2="879.95" y2="796.80" stroke="#808080" stroke-width="4.17" stroke-linecap="butt" stroke-dasharray="4.17 6.88"/>
<line x1="933.26" y1="1376.40" x2="933.26" y2="796.80" stroke="#808080" stroke-width="2.22" stroke-linecap="butt" stroke-dasharray="2.22 3.66"/>
<line x1="986.58" y1="1376.40" x2="986.58" y2="796.80" stroke="#808080" stroke-width="2.22" stroke-linecap="butt" stroke-dasharray="2.22 3.66"/>
<line x1="1039.89" y1="1376.40" x2="1039.89" y2="796.80" stroke="#808080" stroke-width="2.22" stroke-linecap="butt" stroke-dasharray="2.22 3.66"/>
<line x1="1093.20" y1="1376.40" x2="1093.20" y2="796.80" stroke="#808080" stroke-width="4.17" stroke-linecap="butt" stroke-dasharray="4.17 6.88"/>
</g>
<rect x="761.10" y="1083.70" width="3.90" height="3.10" fill="#0030c8" stroke="none" stroke-width="0"/>
<rect x="761.10" y="1119.60" width="3.90" height="2.20" fill="#0030c8" stroke="none" stroke-width="0"/>
<rect x="761.10" y="1125.00" width="3.90" height="2.90" fill="#0030c8" stroke="none" stroke-width="0"/>
<rect x="761.10" y="1178.00" width="3.90" height="3.00" fill="#0030c8" stroke="none" stroke-width="0"/>
<line x1="240.20" y1="1376.40" x2="240.20" y2="1366.70" stroke="#000" stroke-width="2.22" stroke-linecap="butt"/>
<line x1="240.20" y1="796.80" x2="240.20" y2="806.50" stroke="#000" stroke-width="2.22" stroke-linecap="butt"/>
<line x1="293.51" y1="1376.40" x2="293.51" y2="1370.80" stroke="#000" stroke-width="1.67" stroke-linecap="butt"/>
<line x1="293.51" y1="796.80" x2="293.51" y2="802.40" stroke="#000" stroke-width="1.67" stroke-linecap="butt"/>
<line x1="346.82" y1="1376.40" x2="346.82" y2="1370.80" stroke="#000" stroke-width="1.67" stroke-linecap="butt"/>
<line x1="346.82" y1="796.80" x2="346.82" y2="802.40" stroke="#000" stroke-width="1.67" stroke-linecap="butt"/>
<line x1="400.14" y1="1376.40" x2="400.14" y2="1370.80" stroke="#000" stroke-width="1.67" stroke-linecap="butt"/>
<line x1="400.14" y1="796.80" x2="400.14" y2="802.40" stroke="#000" stroke-width="1.67" stroke-linecap="butt"/>
<line x1="453.45" y1="1376.40" x2="453.45" y2="1366.70" stroke="#000" stroke-width="2.22" stroke-linecap="butt"/>
<line x1="453.45" y1="796.80" x2="453.45" y2="806.50" stroke="#000" stroke-width="2.22" stroke-linecap="butt"/>
<line x1="506.76" y1="1376.40" x2="506.76" y2="1370.80" stroke="#000" stroke-width="1.67" stroke-linecap="butt"/>
<line x1="506.76" y1="796.80" x2="506.76" y2="802.40" stroke="#000" stroke-width="1.67" stroke-linecap="butt"/>
<line x1="560.08" y1="1376.40" x2="560.08" y2="1370.80" stroke="#000" stroke-width="1.67" stroke-linecap="butt"/>
<line x1="560.08" y1="796.80" x2="560.08" y2="802.40" stroke="#000" stroke-width="1.67" stroke-linecap="butt"/>
<line x1="613.39" y1="1376.40" x2="613.39" y2="1370.80" stroke="#000" stroke-width="1.67" stroke-linecap="butt"/>
<line x1="613.39" y1="796.80" x2="613.39" y2="802.40" stroke="#000" stroke-width="1.67" stroke-linecap="butt"/>
<line x1="666.70" y1="1376.40" x2="666.70" y2="1366.70" stroke="#000" stroke-width="2.22" stroke-linecap="butt"/>
<line x1="666.70" y1="796.80" x2="666.70" y2="806.50" stroke="#000" stroke-width="2.22" stroke-linecap="butt"/>
<line x1="720.01" y1="1376.40" x2="720.01" y2="1370.80" stroke="#000" stroke-width="1.67" stroke-linecap="butt"/>
<line x1="720.01" y1="796.80" x2="720.01" y2="802.40" stroke="#000" stroke-width="1.67" stroke-linecap="butt"/>
<line x1="773.33" y1="1376.40" x2="773.33" y2="1370.80" stroke="#000" stroke-width="1.67" stroke-linecap="butt"/>
<line x1="773.33" y1="796.80" x2="773.33" y2="802.40" stroke="#000" stroke-width="1.67" stroke-linecap="butt"/>
<line x1="826.64" y1="1376.40" x2="826.64" y2="1370.80" stroke="#000" stroke-width="1.67" stroke-linecap="butt"/>
<line x1="826.64" y1="796.80" x2="826.64" y2="802.40" stroke="#000" stroke-width="1.67" stroke-linecap="butt"/>
<line x1="879.95" y1="1376.40" x2="879.95" y2="1366.70" stroke="#000" stroke-width="2.22" stroke-linecap="butt"/>
<line x1="879.95" y1="796.80" x2="879.95" y2="806.50" stroke="#000" stroke-width="2.22" stroke-linecap="butt"/>
<line x1="933.26" y1="1376.40" x2="933.26" y2="1370.80" stroke="#000" stroke-width="1.67" stroke-linecap="butt"/>
<line x1="933.26" y1="796.80" x2="933.26" y2="802.40" stroke="#000" stroke-width="1.67" stroke-linecap="butt"/>
<line x1="986.58" y1="1376.40" x2="986.58" y2="1370.80" stroke="#000" stroke-width="1.67" stroke-linecap="butt"/>
<line x1="986.58" y1="796.80" x2="986.58" y2="802.40" stroke="#000" stroke-width="1.67" stroke-linecap="butt"/>
<line x1="1039.89" y1="1376.40" x2="1039.89" y2="1370.80" stroke="#000" stroke-width="1.67" stroke-linecap="butt"/>
<line x1="1039.89" y1="796.80" x2="1039.89" y2="802.40" stroke="#000" stroke-width="1.67" stroke-linecap="butt"/>
<line x1="1093.20" y1="1376.40" x2="1093.20" y2="1366.70" stroke="#000" stroke-width="2.22" stroke-linecap="butt"/>
<line x1="1093.20" y1="796.80" x2="1093.20" y2="806.50" stroke="#000" stroke-width="2.22" stroke-linecap="butt"/>
<line x1="240.20" y1="825.20" x2="249.90" y2="825.20" stroke="#000" stroke-width="2.22" stroke-linecap="butt"/>
<line x1="1093.20" y1="825.20" x2="1083.50" y2="825.20" stroke="#000" stroke-width="2.22" stroke-linecap="butt"/>
<line x1="240.20" y1="962.95" x2="249.90" y2="962.95" stroke="#000" stroke-width="2.22" stroke-linecap="butt"/>
<line x1="1093.20" y1="962.95" x2="1083.50" y2="962.95" stroke="#000" stroke-width="2.22" stroke-linecap="butt"/>
<line x1="240.20" y1="1100.70" x2="249.90" y2="1100.70" stroke="#000" stroke-width="2.22" stroke-linecap="butt"/>
<line x1="1093.20" y1="1100.70" x2="1083.50" y2="1100.70" stroke="#000" stroke-width="2.22" stroke-linecap="butt"/>
<line x1="240.20" y1="1238.45" x2="249.90" y2="1238.45" stroke="#000" stroke-width="2.22" stroke-linecap="butt"/>
<line x1="1093.20" y1="1238.45" x2="1083.50" y2="1238.45" stroke="#000" stroke-width="2.22" stroke-linecap="butt"/>
<line x1="240.20" y1="1373.45" x2="249.90" y2="1373.45" stroke="#000" stroke-width="2.22" stroke-linecap="butt"/>
<line x1="1093.20" y1="1373.45" x2="1083.50" y2="1373.45" stroke="#000" stroke-width="2.22" stroke-linecap="butt"/>
<line x1="240.20" y1="1348.65" x2="245.80" y2="1348.65" stroke="#000" stroke-width="1.67" stroke-linecap="butt"/>
<line x1="1093.20" y1="1348.65" x2="1087.60" y2="1348.65" stroke="#000" stroke-width="1.67" stroke-linecap="butt"/>
<line x1="240.20" y1="1321.10" x2="245.80" y2="1321.10" stroke="#000" stroke-width="1.67" stroke-linecap="butt"/>
<line x1="1093.20" y1="1321.10" x2="1087.60" y2="1321.10" stroke="#000" stroke-width="1.67" stroke-linecap="butt"/>
<line x1="240.20" y1="1293.55" x2="245.80" y2="1293.55" stroke="#000" stroke-width="1.67" stroke-linecap="butt"/>
<line x1="1093.20" y1="1293.55" x2="1087.60" y2="1293.55" stroke="#000" stroke-width="1.67" stroke-linecap="butt"/>
<line x1="240.20" y1="1266.00" x2="245.80" y2="1266.00" stroke="#000" stroke-width="1.67" stroke-linecap="butt"/>
<line x1="1093.20" y1="1266.00" x2="1087.60" y2="1266.00" stroke="#000" stroke-width="1.67" stroke-linecap="butt"/>
<line x1="240.20" y1="1210.90" x2="245.80" y2="1210.90" stroke="#000" stroke-width="1.67" stroke-linecap="butt"/>
<line x1="1093.20" y1="1210.90" x2="1087.60" y2="1210.90" stroke="#000" stroke-width="1.67" stroke-linecap="butt"/>
<line x1="240.20" y1="1183.35" x2="245.80" y2="1183.35" stroke="#000" stroke-width="1.67" stroke-linecap="butt"/>
<line x1="1093.20" y1="1183.35" x2="1087.60" y2="1183.35" stroke="#000" stroke-width="1.67" stroke-linecap="butt"/>
<line x1="240.20" y1="1155.80" x2="245.80" y2="1155.80" stroke="#000" stroke-width="1.67" stroke-linecap="butt"/>
<line x1="1093.20" y1="1155.80" x2="1087.60" y2="1155.80" stroke="#000" stroke-width="1.67" stroke-linecap="butt"/>
<line x1="240.20" y1="1128.25" x2="245.80" y2="1128.25" stroke="#000" stroke-width="1.67" stroke-linecap="butt"/>
<line x1="1093.20" y1="1128.25" x2="1087.60" y2="1128.25" stroke="#000" stroke-width="1.67" stroke-linecap="butt"/>
<line x1="240.20" y1="1073.15" x2="245.80" y2="1073.15" stroke="#000" stroke-width="1.67" stroke-linecap="butt"/>
<line x1="1093.20" y1="1073.15" x2="1087.60" y2="1073.15" stroke="#000" stroke-width="1.67" stroke-linecap="butt"/>
<line x1="240.20" y1="1045.60" x2="245.80" y2="1045.60" stroke="#000" stroke-width="1.67" stroke-linecap="butt"/>
<line x1="1093.20" y1="1045.60" x2="1087.60" y2="1045.60" stroke="#000" stroke-width="1.67" stroke-linecap="butt"/>
<line x1="240.20" y1="1018.05" x2="245.80" y2="1018.05" stroke="#000" stroke-width="1.67" stroke-linecap="butt"/>
<line x1="1093.20" y1="1018.05" x2="1087.60" y2="1018.05" stroke="#000" stroke-width="1.67" stroke-linecap="butt"/>
<line x1="240.20" y1="990.50" x2="245.80" y2="990.50" stroke="#000" stroke-width="1.67" stroke-linecap="butt"/>
<line x1="1093.20" y1="990.50" x2="1087.60" y2="990.50" stroke="#000" stroke-width="1.67" stroke-linecap="butt"/>
<line x1="240.20" y1="935.40" x2="245.80" y2="935.40" stroke="#000" stroke-width="1.67" stroke-linecap="butt"/>
<line x1="1093.20" y1="935.40" x2="1087.60" y2="935.40" stroke="#000" stroke-width="1.67" stroke-linecap="butt"/>
<line x1="240.20" y1="907.85" x2="245.80" y2="907.85" stroke="#000" stroke-width="1.67" stroke-linecap="butt"/>
<line x1="1093.20" y1="907.85" x2="1087.60" y2="907.85" stroke="#000" stroke-width="1.67" stroke-linecap="butt"/>
<line x1="240.20" y1="880.30" x2="245.80" y2="880.30" stroke="#000" stroke-width="1.67" stroke-linecap="butt"/>
<line x1="1093.20" y1="880.30" x2="1087.60" y2="880.30" stroke="#000" stroke-width="1.67" stroke-linecap="butt"/>
<line x1="240.20" y1="852.75" x2="245.80" y2="852.75" stroke="#000" stroke-width="1.67" stroke-linecap="butt"/>
<line x1="1093.20" y1="852.75" x2="1087.60" y2="852.75" stroke="#000" stroke-width="1.67" stroke-linecap="butt"/>
<rect x="240.20" y="796.80" width="853.00" height="579.60" fill="none" stroke="#000" stroke-width="2.3"/>
<text x="176.28" y="836.10" font-size="28.33" fill="#000" stroke="#000" stroke-width="0.3" textLength="53.02" lengthAdjust="spacingAndGlyphs">200</text>
<text x="176.28" y="973.85" font-size="28.33" fill="#000" stroke="#000" stroke-width="0.3" textLength="53.02" lengthAdjust="spacingAndGlyphs">150</text>
<text x="176.28" y="1111.60" font-size="28.33" fill="#000" stroke="#000" stroke-width="0.3" textLength="53.02" lengthAdjust="spacingAndGlyphs">100</text>
<text x="193.95" y="1249.35" font-size="28.33" fill="#000" stroke="#000" stroke-width="0.3" textLength="35.35" lengthAdjust="spacingAndGlyphs">50</text>
<text x="211.63" y="1384.35" font-size="28.33" fill="#000" stroke="#000" stroke-width="0.3" textLength="17.67" lengthAdjust="spacingAndGlyphs">1</text>
<text transform="translate(129.00,1103.00) rotate(-90) scale(1.0094,1)" x="-55.3 -38.6 -16.9 2.3 10.4 30.2 37.9" y="0" font-size="29.44" fill="#000" stroke="#000" stroke-width="0.3">TOA Bin</text>
<rect x="1204.50" y="811.00" width="27.50" height="553.00" fill="url(#cmapV)" stroke="#000" stroke-width="2.22"/>
<line x1="1232.00" y1="811.00" x2="1222.30" y2="811.00" stroke="#000" stroke-width="2.22" stroke-linecap="butt"/>
<text transform="translate(1241.60,821.80) scale(1.0388,1)" x="0.6 17.3 34.0" y="0" font-size="28.61" fill="#000" stroke="#000" stroke-width="0.3">1e5</text>
<line x1="1232.00" y1="880.12" x2="1222.30" y2="880.12" stroke="#000" stroke-width="2.22" stroke-linecap="butt"/>
<text transform="translate(1241.60,890.92) scale(1.0388,1)" x="0.6 17.3 34.0" y="0" font-size="28.61" fill="#000" stroke="#000" stroke-width="0.3">1e4</text>
<line x1="1232.00" y1="949.25" x2="1222.30" y2="949.25" stroke="#000" stroke-width="2.22" stroke-linecap="butt"/>
<text transform="translate(1241.60,960.05) scale(1.0388,1)" x="0.6 17.3 34.0" y="0" font-size="28.61" fill="#000" stroke="#000" stroke-width="0.3">1e3</text>
<line x1="1232.00" y1="1018.38" x2="1222.30" y2="1018.38" stroke="#000" stroke-width="2.22" stroke-linecap="butt"/>
<line x1="1232.00" y1="1087.50" x2="1222.30" y2="1087.50" stroke="#000" stroke-width="2.22" stroke-linecap="butt"/>
<text transform="translate(1241.60,1098.30) scale(1.0388,1)" x="0.6 17.3 34.0" y="0" font-size="28.61" fill="#000" stroke="#000" stroke-width="0.3">1e2</text>
<line x1="1232.00" y1="1156.62" x2="1222.30" y2="1156.62" stroke="#000" stroke-width="2.22" stroke-linecap="butt"/>
<line x1="1232.00" y1="1225.75" x2="1222.30" y2="1225.75" stroke="#000" stroke-width="2.22" stroke-linecap="butt"/>
<text transform="translate(1241.60,1236.55) scale(1.0388,1)" x="0.6 17.3 34.0" y="0" font-size="28.61" fill="#000" stroke="#000" stroke-width="0.3">1e1</text>
<line x1="1232.00" y1="1294.88" x2="1222.30" y2="1294.88" stroke="#000" stroke-width="2.22" stroke-linecap="butt"/>
<line x1="1232.00" y1="1364.00" x2="1222.30" y2="1364.00" stroke="#000" stroke-width="2.22" stroke-linecap="butt"/>
<text transform="translate(1241.60,1374.80) scale(1.0388,1)" x="0.6 17.3 34.0" y="0" font-size="28.61" fill="#000" stroke="#000" stroke-width="0.3">1e0</text>
<text transform="translate(1326.00,1087.50) rotate(-90) scale(1.0094,1)" x="-162.4 -145.6 -124.4 -107.2 -99.8 -79.3 -62.2 -44.7 -26.5 -17.2 -2.4 6.6 23.8 41.2 52.1 59.4 78.3 95.1 110.3 127.4 144.9" y="0" font-size="29.44" fill="#000" stroke="#000" stroke-width="0.3">TOF Counts per Second</text>
<text transform="translate(168.60,1421.70) scale(1.0094,1)" x="-37.5 -17.4" y="0" font-size="29.44" fill="#000" stroke="#000" stroke-width="0.3">UT</text>
<text x="188.02" y="1421.70" font-size="28.33" fill="#000" stroke="#000" stroke-width="0.3" textLength="124.76" lengthAdjust="spacingAndGlyphs">18:10:29</text>
<text x="397.82" y="1421.70" font-size="28.33" fill="#000" stroke="#000" stroke-width="0.3" textLength="124.76" lengthAdjust="spacingAndGlyphs">18:12:06</text>
<text x="606.62" y="1421.70" font-size="28.33" fill="#000" stroke="#000" stroke-width="0.3" textLength="124.76" lengthAdjust="spacingAndGlyphs">18:13:43</text>
<text x="816.72" y="1421.70" font-size="28.33" fill="#000" stroke="#000" stroke-width="0.3" textLength="124.76" lengthAdjust="spacingAndGlyphs">18:15:21</text>
<text x="1026.02" y="1421.70" font-size="28.33" fill="#000" stroke="#000" stroke-width="0.3" textLength="124.76" lengthAdjust="spacingAndGlyphs">18:16:58</text>
<text transform="translate(168.60,1454.10) scale(1.0094,1)" x="-120.5 -101.8 -88.5 -72.7 -63.8 -52.9 -36.4 -10.3" y="0" font-size="29.44" fill="#000" stroke="#000" stroke-width="0.3">ALT (km)</text>
<text x="210.64" y="1454.10" font-size="28.33" fill="#000" stroke="#000" stroke-width="0.3" textLength="79.52" lengthAdjust="spacingAndGlyphs">439.2</text>
<text x="420.44" y="1454.10" font-size="28.33" fill="#000" stroke="#000" stroke-width="0.3" textLength="79.52" lengthAdjust="spacingAndGlyphs">412.2</text>
<text x="629.24" y="1454.10" font-size="28.33" fill="#000" stroke="#000" stroke-width="0.3" textLength="79.52" lengthAdjust="spacingAndGlyphs">389.7</text>
<text x="839.34" y="1454.10" font-size="28.33" fill="#000" stroke="#000" stroke-width="0.3" textLength="79.52" lengthAdjust="spacingAndGlyphs">371.8</text>
<text x="1048.64" y="1454.10" font-size="28.33" fill="#000" stroke="#000" stroke-width="0.3" textLength="79.52" lengthAdjust="spacingAndGlyphs">358.7</text>
<text transform="translate(168.60,1486.50) scale(1.0094,1)" x="-132.1 -116.3 -98.4 -81.8 -72.9 -62.1 -44.9 -27.7 -10.3" y="0" font-size="29.44" fill="#000" stroke="#000" stroke-width="0.3">LAT (deg)</text>
<text x="214.46" y="1486.50" font-size="28.33" fill="#000" stroke="#000" stroke-width="0.3" textLength="71.88" lengthAdjust="spacingAndGlyphs">-36.5</text>
<text x="424.26" y="1486.50" font-size="28.33" fill="#000" stroke="#000" stroke-width="0.3" textLength="71.88" lengthAdjust="spacingAndGlyphs">-42.8</text>
<text x="633.06" y="1486.50" font-size="28.33" fill="#000" stroke="#000" stroke-width="0.3" textLength="71.88" lengthAdjust="spacingAndGlyphs">-49.2</text>
<text x="843.16" y="1486.50" font-size="28.33" fill="#000" stroke="#000" stroke-width="0.3" textLength="71.88" lengthAdjust="spacingAndGlyphs">-55.5</text>
<text x="1052.46" y="1486.50" font-size="28.33" fill="#000" stroke="#000" stroke-width="0.3" textLength="71.88" lengthAdjust="spacingAndGlyphs">-61.7</text>
<text transform="translate(168.60,1518.90) scale(1.0094,1)" x="-139.2 -124.5 -103.0 -81.8 -72.9 -62.1 -44.9 -27.7 -10.3" y="0" font-size="29.44" fill="#000" stroke="#000" stroke-width="0.3">LON (deg)</text>
<text x="214.46" y="1518.90" font-size="28.33" fill="#000" stroke="#000" stroke-width="0.3" textLength="71.88" lengthAdjust="spacingAndGlyphs">-68.7</text>
<text x="424.26" y="1518.90" font-size="28.33" fill="#000" stroke="#000" stroke-width="0.3" textLength="71.88" lengthAdjust="spacingAndGlyphs">-67.4</text>
<text x="633.06" y="1518.90" font-size="28.33" fill="#000" stroke="#000" stroke-width="0.3" textLength="71.88" lengthAdjust="spacingAndGlyphs">-65.7</text>
<text x="843.16" y="1518.90" font-size="28.33" fill="#000" stroke="#000" stroke-width="0.3" textLength="71.88" lengthAdjust="spacingAndGlyphs">-63.4</text>
<text x="1052.46" y="1518.90" font-size="28.33" fill="#000" stroke="#000" stroke-width="0.3" textLength="71.88" lengthAdjust="spacingAndGlyphs">-60.0</text>
<text transform="translate(168.60,1551.30) scale(1.0094,1)" x="-155.7 -132.1 -116.3 -98.4 -81.8 -72.9 -62.1 -44.9 -27.7 -10.3" y="0" font-size="29.44" fill="#000" stroke="#000" stroke-width="0.3">MLAT (deg)</text>
<text x="214.46" y="1551.30" font-size="28.33" fill="#000" stroke="#000" stroke-width="0.3" textLength="71.88" lengthAdjust="spacingAndGlyphs">-27.0</text>
<text x="424.26" y="1551.30" font-size="28.33" fill="#000" stroke="#000" stroke-width="0.3" textLength="71.88" lengthAdjust="spacingAndGlyphs">-33.3</text>
<text x="633.06" y="1551.30" font-size="28.33" fill="#000" stroke="#000" stroke-width="0.3" textLength="71.88" lengthAdjust="spacingAndGlyphs">-39.7</text>
<text x="843.16" y="1551.30" font-size="28.33" fill="#000" stroke="#000" stroke-width="0.3" textLength="71.88" lengthAdjust="spacingAndGlyphs">-46.0</text>
<text x="1052.46" y="1551.30" font-size="28.33" fill="#000" stroke="#000" stroke-width="0.3" textLength="71.88" lengthAdjust="spacingAndGlyphs">-52.4</text>
<text transform="translate(168.60,1583.70) scale(1.0094,1)" x="-125.8 -102.2 -88.8 -73.0 -64.1 -53.3 -35.6 -25.3 -10.3" y="0" font-size="29.44" fill="#000" stroke="#000" stroke-width="0.3">MLT (hrs)</text>
<text x="219.47" y="1583.70" font-size="28.33" fill="#000" stroke="#000" stroke-width="0.3" textLength="61.85" lengthAdjust="spacingAndGlyphs">13.6</text>
<text x="429.27" y="1583.70" font-size="28.33" fill="#000" stroke="#000" stroke-width="0.3" textLength="61.85" lengthAdjust="spacingAndGlyphs">13.7</text>
<text x="638.07" y="1583.70" font-size="28.33" fill="#000" stroke="#000" stroke-width="0.3" textLength="61.85" lengthAdjust="spacingAndGlyphs">13.8</text>
<text x="848.17" y="1583.70" font-size="28.33" fill="#000" stroke="#000" stroke-width="0.3" textLength="61.85" lengthAdjust="spacingAndGlyphs">14.0</text>
<text x="1057.47" y="1583.70" font-size="28.33" fill="#000" stroke="#000" stroke-width="0.3" textLength="61.85" lengthAdjust="spacingAndGlyphs">14.1</text>
<clipPath id="gclip3"><rect x="1544.2" y="192.2" width="783.6000000000001" height="246.0"/></clipPath>
<g clip-path="url(#gclip3)">
<line x1="1544.20" y1="438.20" x2="1544.20" y2="192.20" stroke="#808080" stroke-width="4.17" stroke-linecap="butt" stroke-dasharray="4.17 6.88"/>
<line x1="1593.17" y1="438.20" x2="1593.17" y2="192.20" stroke="#808080" stroke-width="2.22" stroke-linecap="butt" stroke-dasharray="2.22 3.66"/>
<line x1="1642.15" y1="438.20" x2="1642.15" y2="192.20" stroke="#808080" stroke-width="2.22" stroke-linecap="butt" stroke-dasharray="2.22 3.66"/>
<line x1="1691.12" y1="438.20" x2="1691.12" y2="192.20" stroke="#808080" stroke-width="2.22" stroke-linecap="butt" stroke-dasharray="2.22 3.66"/>
<line x1="1740.10" y1="438.20" x2="1740.10" y2="192.20" stroke="#808080" stroke-width="4.17" stroke-linecap="butt" stroke-dasharray="4.17 6.88"/>
<line x1="1789.08" y1="438.20" x2="1789.08" y2="192.20" stroke="#808080" stroke-width="2.22" stroke-linecap="butt" stroke-dasharray="2.22 3.66"/>
<line x1="1838.05" y1="438.20" x2="1838.05" y2="192.20" stroke="#808080" stroke-width="2.22" stroke-linecap="butt" stroke-dasharray="2.22 3.66"/>
<line x1="1887.03" y1="438.20" x2="1887.03" y2="192.20" stroke="#808080" stroke-width="2.22" stroke-linecap="butt" stroke-dasharray="2.22 3.66"/>
<line x1="1936.00" y1="438.20" x2="1936.00" y2="192.20" stroke="#808080" stroke-width="4.17" stroke-linecap="butt" stroke-dasharray="4.17 6.88"/>
<line x1="1984.98" y1="438.20" x2="1984.98" y2="192.20" stroke="#808080" stroke-width="2.22" stroke-linecap="butt" stroke-dasharray="2.22 3.66"/>
<line x1="2033.95" y1="438.20" x2="2033.95" y2="192.20" stroke="#808080" stroke-width="2.22" stroke-linecap="butt" stroke-dasharray="2.22 3.66"/>
<line x1="2082.93" y1="438.20" x2="2082.93" y2="192.20" stroke="#808080" stroke-width="2.22" stroke-linecap="butt" stroke-dasharray="2.22 3.66"/>
<line x1="2131.90" y1="438.20" x2="2131.90" y2="192.20" stroke="#808080" stroke-width="4.17" stroke-linecap="butt" stroke-dasharray="4.17 6.88"/>
<line x1="2180.88" y1="438.20" x2="2180.88" y2="192.20" stroke="#808080" stroke-width="2.22" stroke-linecap="butt" stroke-dasharray="2.22 3.66"/>
<line x1="2229.85" y1="438.20" x2="2229.85" y2="192.20" stroke="#808080" stroke-width="2.22" stroke-linecap="butt" stroke-dasharray="2.22 3.66"/>
<line x1="2278.83" y1="438.20" x2="2278.83" y2="192.20" stroke="#808080" stroke-width="2.22" stroke-linecap="butt" stroke-dasharray="2.22 3.66"/>
<line x1="2327.80" y1="438.20" x2="2327.80" y2="192.20" stroke="#808080" stroke-width="4.17" stroke-linecap="butt" stroke-dasharray="4.17 6.88"/>
</g>
<line x1="1544.20" y1="438.20" x2="1544.20" y2="428.50" stroke="#000" stroke-width="2.22" stroke-linecap="butt"/>
<line x1="1544.20" y1="192.20" x2="1544.20" y2="201.90" stroke="#000" stroke-width="2.22" stroke-linecap="butt"/>
<line x1="1593.17" y1="438.20" x2="1593.17" y2="432.60" stroke="#000" stroke-width="1.67" stroke-linecap="butt"/>
<line x1="1593.17" y1="192.20" x2="1593.17" y2="197.80" stroke="#000" stroke-width="1.67" stroke-linecap="butt"/>
<line x1="1642.15" y1="438.20" x2="1642.15" y2="432.60" stroke="#000" stroke-width="1.67" stroke-linecap="butt"/>
<line x1="1642.15" y1="192.20" x2="1642.15" y2="197.80" stroke="#000" stroke-width="1.67" stroke-linecap="butt"/>
<line x1="1691.12" y1="438.20" x2="1691.12" y2="432.60" stroke="#000" stroke-width="1.67" stroke-linecap="butt"/>
<line x1="1691.12" y1="192.20" x2="1691.12" y2="197.80" stroke="#000" stroke-width="1.67" stroke-linecap="butt"/>
<line x1="1740.10" y1="438.20" x2="1740.10" y2="428.50" stroke="#000" stroke-width="2.22" stroke-linecap="butt"/>
<line x1="1740.10" y1="192.20" x2="1740.10" y2="201.90" stroke="#000" stroke-width="2.22" stroke-linecap="butt"/>
<line x1="1789.08" y1="438.20" x2="1789.08" y2="432.60" stroke="#000" stroke-width="1.67" stroke-linecap="butt"/>
<line x1="1789.08" y1="192.20" x2="1789.08" y2="197.80" stroke="#000" stroke-width="1.67" stroke-linecap="butt"/>
<line x1="1838.05" y1="438.20" x2="1838.05" y2="432.60" stroke="#000" stroke-width="1.67" stroke-linecap="butt"/>
<line x1="1838.05" y1="192.20" x2="1838.05" y2="197.80" stroke="#000" stroke-width="1.67" stroke-linecap="butt"/>
<line x1="1887.03" y1="438.20" x2="1887.03" y2="432.60" stroke="#000" stroke-width="1.67" stroke-linecap="butt"/>
<line x1="1887.03" y1="192.20" x2="1887.03" y2="197.80" stroke="#000" stroke-width="1.67" stroke-linecap="butt"/>
<line x1="1936.00" y1="438.20" x2="1936.00" y2="428.50" stroke="#000" stroke-width="2.22" stroke-linecap="butt"/>
<line x1="1936.00" y1="192.20" x2="1936.00" y2="201.90" stroke="#000" stroke-width="2.22" stroke-linecap="butt"/>
<line x1="1984.98" y1="438.20" x2="1984.98" y2="432.60" stroke="#000" stroke-width="1.67" stroke-linecap="butt"/>
<line x1="1984.98" y1="192.20" x2="1984.98" y2="197.80" stroke="#000" stroke-width="1.67" stroke-linecap="butt"/>
<line x1="2033.95" y1="438.20" x2="2033.95" y2="432.60" stroke="#000" stroke-width="1.67" stroke-linecap="butt"/>
<line x1="2033.95" y1="192.20" x2="2033.95" y2="197.80" stroke="#000" stroke-width="1.67" stroke-linecap="butt"/>
<line x1="2082.93" y1="438.20" x2="2082.93" y2="432.60" stroke="#000" stroke-width="1.67" stroke-linecap="butt"/>
<line x1="2082.93" y1="192.20" x2="2082.93" y2="197.80" stroke="#000" stroke-width="1.67" stroke-linecap="butt"/>
<line x1="2131.90" y1="438.20" x2="2131.90" y2="428.50" stroke="#000" stroke-width="2.22" stroke-linecap="butt"/>
<line x1="2131.90" y1="192.20" x2="2131.90" y2="201.90" stroke="#000" stroke-width="2.22" stroke-linecap="butt"/>
<line x1="2180.88" y1="438.20" x2="2180.88" y2="432.60" stroke="#000" stroke-width="1.67" stroke-linecap="butt"/>
<line x1="2180.88" y1="192.20" x2="2180.88" y2="197.80" stroke="#000" stroke-width="1.67" stroke-linecap="butt"/>
<line x1="2229.85" y1="438.20" x2="2229.85" y2="432.60" stroke="#000" stroke-width="1.67" stroke-linecap="butt"/>
<line x1="2229.85" y1="192.20" x2="2229.85" y2="197.80" stroke="#000" stroke-width="1.67" stroke-linecap="butt"/>
<line x1="2278.83" y1="438.20" x2="2278.83" y2="432.60" stroke="#000" stroke-width="1.67" stroke-linecap="butt"/>
<line x1="2278.83" y1="192.20" x2="2278.83" y2="197.80" stroke="#000" stroke-width="1.67" stroke-linecap="butt"/>
<line x1="2327.80" y1="438.20" x2="2327.80" y2="428.50" stroke="#000" stroke-width="2.22" stroke-linecap="butt"/>
<line x1="2327.80" y1="192.20" x2="2327.80" y2="201.90" stroke="#000" stroke-width="2.22" stroke-linecap="butt"/>
<line x1="1544.20" y1="426.50" x2="1553.90" y2="426.50" stroke="#000" stroke-width="2.22" stroke-linecap="butt"/>
<line x1="2327.80" y1="426.50" x2="2318.10" y2="426.50" stroke="#000" stroke-width="2.22" stroke-linecap="butt"/>
<line x1="1544.20" y1="370.60" x2="1553.90" y2="370.60" stroke="#000" stroke-width="2.22" stroke-linecap="butt"/>
<line x1="2327.80" y1="370.60" x2="2318.10" y2="370.60" stroke="#000" stroke-width="2.22" stroke-linecap="butt"/>
<line x1="1544.20" y1="314.70" x2="1553.90" y2="314.70" stroke="#000" stroke-width="2.22" stroke-linecap="butt"/>
<line x1="2327.80" y1="314.70" x2="2318.10" y2="314.70" stroke="#000" stroke-width="2.22" stroke-linecap="butt"/>
<line x1="1544.20" y1="258.80" x2="1553.90" y2="258.80" stroke="#000" stroke-width="2.22" stroke-linecap="butt"/>
<line x1="2327.80" y1="258.80" x2="2318.10" y2="258.80" stroke="#000" stroke-width="2.22" stroke-linecap="butt"/>
<line x1="1544.20" y1="202.90" x2="1553.90" y2="202.90" stroke="#000" stroke-width="2.22" stroke-linecap="butt"/>
<line x1="2327.80" y1="202.90" x2="2318.10" y2="202.90" stroke="#000" stroke-width="2.22" stroke-linecap="butt"/>
<line x1="1544.20" y1="415.32" x2="1549.80" y2="415.32" stroke="#000" stroke-width="1.67" stroke-linecap="butt"/>
<line x1="2327.80" y1="415.32" x2="2322.20" y2="415.32" stroke="#000" stroke-width="1.67" stroke-linecap="butt"/>
<line x1="1544.20" y1="404.14" x2="1549.80" y2="404.14" stroke="#000" stroke-width="1.67" stroke-linecap="butt"/>
<line x1="2327.80" y1="404.14" x2="2322.20" y2="404.14" stroke="#000" stroke-width="1.67" stroke-linecap="butt"/>
<line x1="1544.20" y1="392.96" x2="1549.80" y2="392.96" stroke="#000" stroke-width="1.67" stroke-linecap="butt"/>
<line x1="2327.80" y1="392.96" x2="2322.20" y2="392.96" stroke="#000" stroke-width="1.67" stroke-linecap="butt"/>
<line x1="1544.20" y1="381.78" x2="1549.80" y2="381.78" stroke="#000" stroke-width="1.67" stroke-linecap="butt"/>
<line x1="2327.80" y1="381.78" x2="2322.20" y2="381.78" stroke="#000" stroke-width="1.67" stroke-linecap="butt"/>
<line x1="1544.20" y1="359.42" x2="1549.80" y2="359.42" stroke="#000" stroke-width="1.67" stroke-linecap="butt"/>
<line x1="2327.80" y1="359.42" x2="2322.20" y2="359.42" stroke="#000" stroke-width="1.67" stroke-linecap="butt"/>
<line x1="1544.20" y1="348.24" x2="1549.80" y2="348.24" stroke="#000" stroke-width="1.67" stroke-linecap="butt"/>
<line x1="2327.80" y1="348.24" x2="2322.20" y2="348.24" stroke="#000" stroke-width="1.67" stroke-linecap="butt"/>
<line x1="1544.20" y1="337.06" x2="1549.80" y2="337.06" stroke="#000" stroke-width="1.67" stroke-linecap="butt"/>
<line x1="2327.80" y1="337.06" x2="2322.20" y2="337.06" stroke="#000" stroke-width="1.67" stroke-linecap="butt"/>
<line x1="1544.20" y1="325.88" x2="1549.80" y2="325.88" stroke="#000" stroke-width="1.67" stroke-linecap="butt"/>
<line x1="2327.80" y1="325.88" x2="2322.20" y2="325.88" stroke="#000" stroke-width="1.67" stroke-linecap="butt"/>
<line x1="1544.20" y1="303.52" x2="1549.80" y2="303.52" stroke="#000" stroke-width="1.67" stroke-linecap="butt"/>
<line x1="2327.80" y1="303.52" x2="2322.20" y2="303.52" stroke="#000" stroke-width="1.67" stroke-linecap="butt"/>
<line x1="1544.20" y1="292.34" x2="1549.80" y2="292.34" stroke="#000" stroke-width="1.67" stroke-linecap="butt"/>
<line x1="2327.80" y1="292.34" x2="2322.20" y2="292.34" stroke="#000" stroke-width="1.67" stroke-linecap="butt"/>
<line x1="1544.20" y1="281.16" x2="1549.80" y2="281.16" stroke="#000" stroke-width="1.67" stroke-linecap="butt"/>
<line x1="2327.80" y1="281.16" x2="2322.20" y2="281.16" stroke="#000" stroke-width="1.67" stroke-linecap="butt"/>
<line x1="1544.20" y1="269.98" x2="1549.80" y2="269.98" stroke="#000" stroke-width="1.67" stroke-linecap="butt"/>
<line x1="2327.80" y1="269.98" x2="2322.20" y2="269.98" stroke="#000" stroke-width="1.67" stroke-linecap="butt"/>
<line x1="1544.20" y1="247.62" x2="1549.80" y2="247.62" stroke="#000" stroke-width="1.67" stroke-linecap="butt"/>
<line x1="2327.80" y1="247.62" x2="2322.20" y2="247.62" stroke="#000" stroke-width="1.67" stroke-linecap="butt"/>
<line x1="1544.20" y1="236.44" x2="1549.80" y2="236.44" stroke="#000" stroke-width="1.67" stroke-linecap="butt"/>
<line x1="2327.80" y1="236.44" x2="2322.20" y2="236.44" stroke="#000" stroke-width="1.67" stroke-linecap="butt"/>
<line x1="1544.20" y1="225.26" x2="1549.80" y2="225.26" stroke="#000" stroke-width="1.67" stroke-linecap="butt"/>
<line x1="2327.80" y1="225.26" x2="2322.20" y2="225.26" stroke="#000" stroke-width="1.67" stroke-linecap="butt"/>
<line x1="1544.20" y1="214.08" x2="1549.80" y2="214.08" stroke="#000" stroke-width="1.67" stroke-linecap="butt"/>
<line x1="2327.80" y1="214.08" x2="2322.20" y2="214.08" stroke="#000" stroke-width="1.67" stroke-linecap="butt"/>
<rect x="1544.20" y="192.20" width="783.60" height="246.00" fill="none" stroke="#000" stroke-width="2.3"/>
<text x="1498.15" y="213.80" font-size="28.33" fill="#000" stroke="#000" stroke-width="0.3" textLength="35.35" lengthAdjust="spacingAndGlyphs">10</text>
<text x="1515.83" y="269.70" font-size="28.33" fill="#000" stroke="#000" stroke-width="0.3" textLength="17.67" lengthAdjust="spacingAndGlyphs">5</text>
<text x="1515.83" y="325.60" font-size="28.33" fill="#000" stroke="#000" stroke-width="0.3" textLength="17.67" lengthAdjust="spacingAndGlyphs">0</text>
<text x="1492.55" y="381.50" font-size="28.33" fill="#000" stroke="#000" stroke-width="0.3" textLength="40.95" lengthAdjust="spacingAndGlyphs">−5</text>
<text x="1474.88" y="437.40" font-size="28.33" fill="#000" stroke="#000" stroke-width="0.3" textLength="58.62" lengthAdjust="spacingAndGlyphs">−10</text>
<text transform="translate(1455.50,315.50) rotate(-90) scale(1.0094,1)" x="-85.9 -65.2 -47.5 -36.4 -26.1 -9.3 9.0 18.7 27.6 38.5 55.0 74.7" y="0" font-size="29.44" fill="#000" stroke="#000" stroke-width="0.3">Current (uA)</text>
<rect x="1607.00" y="154.00" width="55.70" height="19.20" fill="#c5c9c7" stroke="none" stroke-width="0"/>
<text transform="translate(1684.90,172.70) scale(1.0094,1)" x="-1.1 18.0 25.7 46.2 55.3 62.9 80.1 87.4 106.1 121.6 129.3 136.9 153.6 168.4" y="0" font-size="29.44" fill="#000" stroke="#000" stroke-width="0.3">S/C in Eclipse</text>
<rect x="1927.2" y="154.5" width="56.5" height="19" fill="#fff" stroke="#808080" stroke-width="1.3"/>
<clipPath id="hclip"><rect x="1927.2" y="154.5" width="56.5" height="19"/></clipPath>
<path d="M1925.2,175.5 L1948.2,152.5 M1957.5,175.5 L1980.5,152.5" stroke="#808080" stroke-width="2.78" fill="none" clip-path="url(#hclip)"/>
<text transform="translate(2005.90,172.70) scale(1.0094,1)" x="-0.0 7.0 26.8 51.3 60.3 67.9 85.1 92.5 111.6 119.3 139.8 147.2 166.3 183.4 200.6 217.7 235.0" y="0" font-size="29.44" fill="#000" stroke="#000" stroke-width="0.3">IRM in S/C Shadow</text>
<text transform="translate(2335.80,181.30) rotate(90) scale(1.0094,1)" x="-0.8 13.3 26.2 38.7 49.8 62.8 71.0 76.5 90.8 104.1 112.5 119.4 132.0 143.4 156.1 161.7 177.3 190.6 198.9 206.6 219.2 232.9" y="0" font-size="22.08" fill="#000" stroke="#000" stroke-width="0.3">Sensor Surface Current</text>
<text transform="translate(2356.70,181.30) rotate(90) scale(1.0094,1)" x="-0.8 13.3 26.2 38.7 49.8 62.8 71.0 76.5 90.8 104.1 112.5 119.4 132.0 143.4 156.1 161.7 177.3 190.6 198.9 206.6 219.2 232.9 240.2 247.2 259.0 265.8" y="0" font-size="22.08" fill="#0000ff" stroke="#0000ff" stroke-width="0.3">Sensor Surface Current x 5</text>
<clipPath id="gclip4"><rect x="1544.2" y="462.7" width="783.6000000000001" height="245.8"/></clipPath>
<g clip-path="url(#gclip4)">
<line x1="1544.20" y1="708.50" x2="1544.20" y2="462.70" stroke="#808080" stroke-width="4.17" stroke-linecap="butt" stroke-dasharray="4.17 6.88"/>
<line x1="1593.17" y1="708.50" x2="1593.17" y2="462.70" stroke="#808080" stroke-width="2.22" stroke-linecap="butt" stroke-dasharray="2.22 3.66"/>
<line x1="1642.15" y1="708.50" x2="1642.15" y2="462.70" stroke="#808080" stroke-width="2.22" stroke-linecap="butt" stroke-dasharray="2.22 3.66"/>
<line x1="1691.12" y1="708.50" x2="1691.12" y2="462.70" stroke="#808080" stroke-width="2.22" stroke-linecap="butt" stroke-dasharray="2.22 3.66"/>
<line x1="1740.10" y1="708.50" x2="1740.10" y2="462.70" stroke="#808080" stroke-width="4.17" stroke-linecap="butt" stroke-dasharray="4.17 6.88"/>
<line x1="1789.08" y1="708.50" x2="1789.08" y2="462.70" stroke="#808080" stroke-width="2.22" stroke-linecap="butt" stroke-dasharray="2.22 3.66"/>
<line x1="1838.05" y1="708.50" x2="1838.05" y2="462.70" stroke="#808080" stroke-width="2.22" stroke-linecap="butt" stroke-dasharray="2.22 3.66"/>
<line x1="1887.03" y1="708.50" x2="1887.03" y2="462.70" stroke="#808080" stroke-width="2.22" stroke-linecap="butt" stroke-dasharray="2.22 3.66"/>
<line x1="1936.00" y1="708.50" x2="1936.00" y2="462.70" stroke="#808080" stroke-width="4.17" stroke-linecap="butt" stroke-dasharray="4.17 6.88"/>
<line x1="1984.98" y1="708.50" x2="1984.98" y2="462.70" stroke="#808080" stroke-width="2.22" stroke-linecap="butt" stroke-dasharray="2.22 3.66"/>
<line x1="2033.95" y1="708.50" x2="2033.95" y2="462.70" stroke="#808080" stroke-width="2.22" stroke-linecap="butt" stroke-dasharray="2.22 3.66"/>
<line x1="2082.93" y1="708.50" x2="2082.93" y2="462.70" stroke="#808080" stroke-width="2.22" stroke-linecap="butt" stroke-dasharray="2.22 3.66"/>
<line x1="2131.90" y1="708.50" x2="2131.90" y2="462.70" stroke="#808080" stroke-width="4.17" stroke-linecap="butt" stroke-dasharray="4.17 6.88"/>
<line x1="2180.88" y1="708.50" x2="2180.88" y2="462.70" stroke="#808080" stroke-width="2.22" stroke-linecap="butt" stroke-dasharray="2.22 3.66"/>
<line x1="2229.85" y1="708.50" x2="2229.85" y2="462.70" stroke="#808080" stroke-width="2.22" stroke-linecap="butt" stroke-dasharray="2.22 3.66"/>
<line x1="2278.83" y1="708.50" x2="2278.83" y2="462.70" stroke="#808080" stroke-width="2.22" stroke-linecap="butt" stroke-dasharray="2.22 3.66"/>
<line x1="2327.80" y1="708.50" x2="2327.80" y2="462.70" stroke="#808080" stroke-width="4.17" stroke-linecap="butt" stroke-dasharray="4.17 6.88"/>
</g>
<line x1="1544.20" y1="708.50" x2="1544.20" y2="698.80" stroke="#000" stroke-width="2.22" stroke-linecap="butt"/>
<line x1="1544.20" y1="462.70" x2="1544.20" y2="472.40" stroke="#000" stroke-width="2.22" stroke-linecap="butt"/>
<line x1="1593.17" y1="708.50" x2="1593.17" y2="702.90" stroke="#000" stroke-width="1.67" stroke-linecap="butt"/>
<line x1="1593.17" y1="462.70" x2="1593.17" y2="468.30" stroke="#000" stroke-width="1.67" stroke-linecap="butt"/>
<line x1="1642.15" y1="708.50" x2="1642.15" y2="702.90" stroke="#000" stroke-width="1.67" stroke-linecap="butt"/>
<line x1="1642.15" y1="462.70" x2="1642.15" y2="468.30" stroke="#000" stroke-width="1.67" stroke-linecap="butt"/>
<line x1="1691.12" y1="708.50" x2="1691.12" y2="702.90" stroke="#000" stroke-width="1.67" stroke-linecap="butt"/>
<line x1="1691.12" y1="462.70" x2="1691.12" y2="468.30" stroke="#000" stroke-width="1.67" stroke-linecap="butt"/>
<line x1="1740.10" y1="708.50" x2="1740.10" y2="698.80" stroke="#000" stroke-width="2.22" stroke-linecap="butt"/>
<line x1="1740.10" y1="462.70" x2="1740.10" y2="472.40" stroke="#000" stroke-width="2.22" stroke-linecap="butt"/>
<line x1="1789.08" y1="708.50" x2="1789.08" y2="702.90" stroke="#000" stroke-width="1.67" stroke-linecap="butt"/>
<line x1="1789.08" y1="462.70" x2="1789.08" y2="468.30" stroke="#000" stroke-width="1.67" stroke-linecap="butt"/>
<line x1="1838.05" y1="708.50" x2="1838.05" y2="702.90" stroke="#000" stroke-width="1.67" stroke-linecap="butt"/>
<line x1="1838.05" y1="462.70" x2="1838.05" y2="468.30" stroke="#000" stroke-width="1.67" stroke-linecap="butt"/>
<line x1="1887.03" y1="708.50" x2="1887.03" y2="702.90" stroke="#000" stroke-width="1.67" stroke-linecap="butt"/>
<line x1="1887.03" y1="462.70" x2="1887.03" y2="468.30" stroke="#000" stroke-width="1.67" stroke-linecap="butt"/>
<line x1="1936.00" y1="708.50" x2="1936.00" y2="698.80" stroke="#000" stroke-width="2.22" stroke-linecap="butt"/>
<line x1="1936.00" y1="462.70" x2="1936.00" y2="472.40" stroke="#000" stroke-width="2.22" stroke-linecap="butt"/>
<line x1="1984.98" y1="708.50" x2="1984.98" y2="702.90" stroke="#000" stroke-width="1.67" stroke-linecap="butt"/>
<line x1="1984.98" y1="462.70" x2="1984.98" y2="468.30" stroke="#000" stroke-width="1.67" stroke-linecap="butt"/>
<line x1="2033.95" y1="708.50" x2="2033.95" y2="702.90" stroke="#000" stroke-width="1.67" stroke-linecap="butt"/>
<line x1="2033.95" y1="462.70" x2="2033.95" y2="468.30" stroke="#000" stroke-width="1.67" stroke-linecap="butt"/>
<line x1="2082.93" y1="708.50" x2="2082.93" y2="702.90" stroke="#000" stroke-width="1.67" stroke-linecap="butt"/>
<line x1="2082.93" y1="462.70" x2="2082.93" y2="468.30" stroke="#000" stroke-width="1.67" stroke-linecap="butt"/>
<line x1="2131.90" y1="708.50" x2="2131.90" y2="698.80" stroke="#000" stroke-width="2.22" stroke-linecap="butt"/>
<line x1="2131.90" y1="462.70" x2="2131.90" y2="472.40" stroke="#000" stroke-width="2.22" stroke-linecap="butt"/>
<line x1="2180.88" y1="708.50" x2="2180.88" y2="702.90" stroke="#000" stroke-width="1.67" stroke-linecap="butt"/>
<line x1="2180.88" y1="462.70" x2="2180.88" y2="468.30" stroke="#000" stroke-width="1.67" stroke-linecap="butt"/>
<line x1="2229.85" y1="708.50" x2="2229.85" y2="702.90" stroke="#000" stroke-width="1.67" stroke-linecap="butt"/>
<line x1="2229.85" y1="462.70" x2="2229.85" y2="468.30" stroke="#000" stroke-width="1.67" stroke-linecap="butt"/>
<line x1="2278.83" y1="708.50" x2="2278.83" y2="702.90" stroke="#000" stroke-width="1.67" stroke-linecap="butt"/>
<line x1="2278.83" y1="462.70" x2="2278.83" y2="468.30" stroke="#000" stroke-width="1.67" stroke-linecap="butt"/>
<line x1="2327.80" y1="708.50" x2="2327.80" y2="698.80" stroke="#000" stroke-width="2.22" stroke-linecap="butt"/>
<line x1="2327.80" y1="462.70" x2="2327.80" y2="472.40" stroke="#000" stroke-width="2.22" stroke-linecap="butt"/>
<line x1="1544.20" y1="708.50" x2="1553.90" y2="708.50" stroke="#000" stroke-width="2.22" stroke-linecap="butt"/>
<line x1="2327.80" y1="708.50" x2="2318.10" y2="708.50" stroke="#000" stroke-width="2.22" stroke-linecap="butt"/>
<line x1="1544.20" y1="647.05" x2="1553.90" y2="647.05" stroke="#000" stroke-width="2.22" stroke-linecap="butt"/>
<line x1="2327.80" y1="647.05" x2="2318.10" y2="647.05" stroke="#000" stroke-width="2.22" stroke-linecap="butt"/>
<line x1="1544.20" y1="585.60" x2="1553.90" y2="585.60" stroke="#000" stroke-width="2.22" stroke-linecap="butt"/>
<line x1="2327.80" y1="585.60" x2="2318.10" y2="585.60" stroke="#000" stroke-width="2.22" stroke-linecap="butt"/>
<line x1="1544.20" y1="524.15" x2="1553.90" y2="524.15" stroke="#000" stroke-width="2.22" stroke-linecap="butt"/>
<line x1="2327.80" y1="524.15" x2="2318.10" y2="524.15" stroke="#000" stroke-width="2.22" stroke-linecap="butt"/>
<line x1="1544.20" y1="462.70" x2="1553.90" y2="462.70" stroke="#000" stroke-width="2.22" stroke-linecap="butt"/>
<line x1="2327.80" y1="462.70" x2="2318.10" y2="462.70" stroke="#000" stroke-width="2.22" stroke-linecap="butt"/>
<line x1="1544.20" y1="696.21" x2="1549.80" y2="696.21" stroke="#000" stroke-width="1.67" stroke-linecap="butt"/>
<line x1="2327.80" y1="696.21" x2="2322.20" y2="696.21" stroke="#000" stroke-width="1.67" stroke-linecap="butt"/>
<line x1="1544.20" y1="683.92" x2="1549.80" y2="683.92" stroke="#000" stroke-width="1.67" stroke-linecap="butt"/>
<line x1="2327.80" y1="683.92" x2="2322.20" y2="683.92" stroke="#000" stroke-width="1.67" stroke-linecap="butt"/>
<line x1="1544.20" y1="671.63" x2="1549.80" y2="671.63" stroke="#000" stroke-width="1.67" stroke-linecap="butt"/>
<line x1="2327.80" y1="671.63" x2="2322.20" y2="671.63" stroke="#000" stroke-width="1.67" stroke-linecap="butt"/>
<line x1="1544.20" y1="659.34" x2="1549.80" y2="659.34" stroke="#000" stroke-width="1.67" stroke-linecap="butt"/>
<line x1="2327.80" y1="659.34" x2="2322.20" y2="659.34" stroke="#000" stroke-width="1.67" stroke-linecap="butt"/>
<line x1="1544.20" y1="634.76" x2="1549.80" y2="634.76" stroke="#000" stroke-width="1.67" stroke-linecap="butt"/>
<line x1="2327.80" y1="634.76" x2="2322.20" y2="634.76" stroke="#000" stroke-width="1.67" stroke-linecap="butt"/>
<line x1="1544.20" y1="622.47" x2="1549.80" y2="622.47" stroke="#000" stroke-width="1.67" stroke-linecap="butt"/>
<line x1="2327.80" y1="622.47" x2="2322.20" y2="622.47" stroke="#000" stroke-width="1.67" stroke-linecap="butt"/>
<line x1="1544.20" y1="610.18" x2="1549.80" y2="610.18" stroke="#000" stroke-width="1.67" stroke-linecap="butt"/>
<line x1="2327.80" y1="610.18" x2="2322.20" y2="610.18" stroke="#000" stroke-width="1.67" stroke-linecap="butt"/>
<line x1="1544.20" y1="597.89" x2="1549.80" y2="597.89" stroke="#000" stroke-width="1.67" stroke-linecap="butt"/>
<line x1="2327.80" y1="597.89" x2="2322.20" y2="597.89" stroke="#000" stroke-width="1.67" stroke-linecap="butt"/>
<line x1="1544.20" y1="573.31" x2="1549.80" y2="573.31" stroke="#000" stroke-width="1.67" stroke-linecap="butt"/>
<line x1="2327.80" y1="573.31" x2="2322.20" y2="573.31" stroke="#000" stroke-width="1.67" stroke-linecap="butt"/>
<line x1="1544.20" y1="561.02" x2="1549.80" y2="561.02" stroke="#000" stroke-width="1.67" stroke-linecap="butt"/>
<line x1="2327.80" y1="561.02" x2="2322.20" y2="561.02" stroke="#000" stroke-width="1.67" stroke-linecap="butt"/>
<line x1="1544.20" y1="548.73" x2="1549.80" y2="548.73" stroke="#000" stroke-width="1.67" stroke-linecap="butt"/>
<line x1="2327.80" y1="548.73" x2="2322.20" y2="548.73" stroke="#000" stroke-width="1.67" stroke-linecap="butt"/>
<line x1="1544.20" y1="536.44" x2="1549.80" y2="536.44" stroke="#000" stroke-width="1.67" stroke-linecap="butt"/>
<line x1="2327.80" y1="536.44" x2="2322.20" y2="536.44" stroke="#000" stroke-width="1.67" stroke-linecap="butt"/>
<line x1="1544.20" y1="511.86" x2="1549.80" y2="511.86" stroke="#000" stroke-width="1.67" stroke-linecap="butt"/>
<line x1="2327.80" y1="511.86" x2="2322.20" y2="511.86" stroke="#000" stroke-width="1.67" stroke-linecap="butt"/>
<line x1="1544.20" y1="499.57" x2="1549.80" y2="499.57" stroke="#000" stroke-width="1.67" stroke-linecap="butt"/>
<line x1="2327.80" y1="499.57" x2="2322.20" y2="499.57" stroke="#000" stroke-width="1.67" stroke-linecap="butt"/>
<line x1="1544.20" y1="487.28" x2="1549.80" y2="487.28" stroke="#000" stroke-width="1.67" stroke-linecap="butt"/>
<line x1="2327.80" y1="487.28" x2="2322.20" y2="487.28" stroke="#000" stroke-width="1.67" stroke-linecap="butt"/>
<line x1="1544.20" y1="474.99" x2="1549.80" y2="474.99" stroke="#000" stroke-width="1.67" stroke-linecap="butt"/>
<line x1="2327.80" y1="474.99" x2="2322.20" y2="474.99" stroke="#000" stroke-width="1.67" stroke-linecap="butt"/>
<rect x="1544.20" y="462.70" width="783.60" height="245.80" fill="none" stroke="#000" stroke-width="2.3"/>
<text x="1471.65" y="719.40" font-size="28.33" fill="#000" stroke="#000" stroke-width="0.3" textLength="61.85" lengthAdjust="spacingAndGlyphs">0.00</text>
<text x="1471.65" y="657.95" font-size="28.33" fill="#000" stroke="#000" stroke-width="0.3" textLength="61.85" lengthAdjust="spacingAndGlyphs">0.25</text>
<text x="1471.65" y="596.50" font-size="28.33" fill="#000" stroke="#000" stroke-width="0.3" textLength="61.85" lengthAdjust="spacingAndGlyphs">0.50</text>
<text x="1471.65" y="535.05" font-size="28.33" fill="#000" stroke="#000" stroke-width="0.3" textLength="61.85" lengthAdjust="spacingAndGlyphs">0.75</text>
<text x="1471.65" y="473.60" font-size="28.33" fill="#000" stroke="#000" stroke-width="0.3" textLength="61.85" lengthAdjust="spacingAndGlyphs">1.00</text>
<text x="1481.82" y="752.90" font-size="28.33" fill="#000" stroke="#000" stroke-width="0.3" textLength="124.76" lengthAdjust="spacingAndGlyphs">18:10:29</text>
<text x="1677.72" y="752.90" font-size="28.33" fill="#000" stroke="#000" stroke-width="0.3" textLength="124.76" lengthAdjust="spacingAndGlyphs">18:12:06</text>
<text x="1873.62" y="752.90" font-size="28.33" fill="#000" stroke="#000" stroke-width="0.3" textLength="124.76" lengthAdjust="spacingAndGlyphs">18:13:43</text>
<text x="2069.52" y="752.90" font-size="28.33" fill="#000" stroke="#000" stroke-width="0.3" textLength="124.76" lengthAdjust="spacingAndGlyphs">18:15:21</text>
<text x="2265.42" y="752.90" font-size="28.33" fill="#000" stroke="#000" stroke-width="0.3" textLength="124.76" lengthAdjust="spacingAndGlyphs">18:16:58</text>
<text transform="translate(1430.00,599.20) rotate(-90) scale(1.0094,1)" x="-75.4 -54.9 -37.8 -20.3 -2.1 7.2 22.0 29.0 46.9 63.8" y="0" font-size="29.44" fill="#000" stroke="#000" stroke-width="0.3">Counts Per</text>
<text transform="translate(1457.00,697.65) rotate(-90) scale(1.0094,1)" x="-1.1 17.7 34.6 49.8 66.9 84.4 101.6 110.5 121.5 137.6 155.1" y="0" font-size="29.44" fill="#000" stroke="#000" stroke-width="0.3">Second (x10</text>
<text transform="translate(1447.30,523.96) rotate(-90)" x="0.00" y="0" font-size="19.83" fill="#000" stroke="#000" stroke-width="0.3" textLength="12.37" lengthAdjust="spacingAndGlyphs">3</text>
<text transform="translate(1457.00,511.59) rotate(-90) scale(1.0094,1)" x="0.5" y="0" font-size="29.44" fill="#000" stroke="#000" stroke-width="0.3">)</text>
<text transform="translate(2337.00,489.60) rotate(90) scale(1.0094,1)" x="-0.2 17.0 23.7 31.5 37.5 53.9 67.6 81.5 96.1 103.9 117.8" y="0" font-size="23.56" fill="#000" stroke="#000" stroke-width="0.3">Hit Counter</text>
<text transform="translate(2360.00,489.60) rotate(90) scale(1.0094,1)" x="-0.0 17.2 31.5 39.3 52.8 65.8 73.6 79.6 96.0 109.7 123.6 138.2 146.0 159.9" y="0" font-size="23.56" fill="#0000ff" stroke="#0000ff" stroke-width="0.3">Detect Counter</text>
<g id="map">
<defs>
<clipPath id="stad"><path d="M1670.2,795.0 L2142.8,795.0 A236.5,236.5 0 0 1 2142.8,1268.0 L1670.2,1268.0 A236.5,236.5 0 0 1 1670.2,795.0Z"/></clipPath>
<clipPath id="landclip"><path d="M1534.8,859.1 L1546.1,851.8 L1555.0,850.2 L1565.2,847.2 L1575.3,844.1 L1583.6,845.5 L1589.0,846.4 L1594.5,847.3 L1603.9,848.6 L1613.2,850.2 L1620.8,848.9 L1633.7,846.5 L1638.7,848.1 L1647.3,848.1 L1654.2,850.2 L1659.1,852.3 L1667.2,853.1 L1670.5,854.7 L1672.8,851.2 L1681.0,852.0 L1685.5,853.3 L1692.9,852.0 L1698.2,852.3 L1701.4,848.9 L1702.8,844.1 L1707.9,842.3 L1709.5,846.2 L1709.7,849.4 L1712.1,850.7 L1716.7,850.2 L1723.3,848.1 L1729.5,848.6 L1730.5,851.5 L1726.4,856.5 L1721.4,857.5 L1716.2,857.0 L1714.5,862.5 L1709.7,863.3 L1704.9,863.8 L1697.6,867.3 L1692.3,871.2 L1688.0,877.0 L1690.5,881.7 L1696.8,881.7 L1701.6,884.3 L1706.8,886.2 L1712.9,886.7 L1711.3,892.2 L1713.1,895.4 L1716.3,896.7 L1719.0,893.5 L1720.2,888.3 L1726.2,884.3 L1728.3,880.4 L1725.4,877.0 L1729.4,872.5 L1730.2,867.5 L1739.2,867.8 L1743.7,870.7 L1747.4,871.2 L1746.3,876.5 L1749.2,878.0 L1755.5,874.4 L1759.0,872.8 L1761.8,878.6 L1762.9,883.0 L1765.6,885.9 L1770.8,888.8 L1773.6,894.1 L1770.2,896.4 L1762.3,899.6 L1755.1,899.6 L1746.7,899.6 L1741.1,902.7 L1736.5,906.7 L1742.1,903.5 L1749.7,902.2 L1750.8,904.6 L1747.4,906.7 L1749.1,909.8 L1755.0,910.9 L1759.5,909.3 L1759.3,911.4 L1750.6,914.6 L1744.4,917.2 L1743.9,914.8 L1748.0,911.9 L1742.3,913.2 L1736.9,915.6 L1733.3,917.2 L1731.4,920.3 L1733.1,921.9 L1729.2,922.7 L1723.1,924.5 L1721.5,927.4 L1718.5,930.1 L1715.8,933.7 L1715.8,938.0 L1712.6,940.3 L1709.2,942.4 L1705.5,944.5 L1700.6,948.2 L1698.9,952.1 L1700.3,957.9 L1701.1,961.1 L1699.8,965.0 L1697.5,965.3 L1696.3,962.7 L1694.5,958.7 L1695.1,955.3 L1692.7,952.7 L1688.5,953.5 L1686.0,951.6 L1682.1,951.9 L1678.2,952.1 L1678.2,955.0 L1675.2,954.8 L1671.6,953.7 L1666.5,953.7 L1662.2,955.8 L1657.3,959.0 L1655.8,963.7 L1653.7,972.4 L1654.3,977.4 L1656.7,981.0 L1660.1,983.4 L1664.8,982.9 L1668.8,982.4 L1671.4,979.5 L1672.6,976.3 L1677.4,975.0 L1681.3,975.0 L1679.4,980.3 L1677.8,983.4 L1676.7,986.0 L1675.1,989.7 L1678.5,990.0 L1682.4,989.7 L1687.6,990.2 L1689.2,992.1 L1688.1,997.3 L1687.8,1002.1 L1689.9,1006.0 L1692.2,1007.9 L1694.8,1008.1 L1698.0,1006.5 L1700.9,1006.8 L1703.7,1008.6 L1702.2,1012.6 L1700.5,1010.0 L1697.9,1008.1 L1696.0,1010.0 L1696.2,1012.3 L1693.3,1011.8 L1689.5,1010.0 L1687.2,1008.9 L1684.4,1006.0 L1681.8,1005.2 L1682.0,1002.6 L1677.9,997.6 L1672.7,996.3 L1667.6,994.7 L1662.1,989.5 L1659.0,988.9 L1655.0,990.2 L1649.9,988.7 L1646.2,986.8 L1641.3,984.5 L1636.8,982.6 L1632.9,978.4 L1633.7,974.7 L1631.5,970.3 L1628.4,965.8 L1625.5,961.9 L1623.4,958.4 L1619.6,955.3 L1618.4,949.5 L1614.7,947.9 L1614.0,951.9 L1617.0,955.8 L1618.4,960.0 L1620.5,963.7 L1622.1,967.9 L1623.7,970.8 L1621.7,970.3 L1617.6,965.8 L1618.2,962.7 L1613.5,960.0 L1614.3,956.6 L1611.2,953.2 L1609.9,948.7 L1609.1,945.8 L1607.0,942.4 L1601.8,940.8 L1600.4,935.3 L1599.6,932.2 L1597.8,927.7 L1597.4,925.3 L1600.1,918.5 L1604.1,910.1 L1604.7,904.3 L1608.7,904.6 L1609.3,902.0 L1606.1,899.6 L1601.3,897.0 L1601.5,892.8 L1599.2,888.3 L1597.9,884.3 L1596.8,879.6 L1591.5,877.8 L1589.3,875.1 L1585.2,874.4 L1577.6,873.8 L1573.4,871.7 L1566.5,873.3 L1557.2,875.9 L1561.2,871.2 L1553.6,875.1 L1548.4,879.1 L1538.8,882.8 L1531.1,885.4 L1524.2,887.0 L1518.0,888.0 L1527.0,884.6 L1537.0,880.4 L1542.9,877.2 L1537.3,877.0 L1532.3,877.5 L1530.6,873.8 L1530.4,869.9 L1536.2,866.0 L1545.9,863.8 L1547.8,861.7 L1540.9,862.0 L1535.8,861.5 L1534.8,859.1Z M1607.8,904.3 L1603.9,903.3 L1598.7,898.5 L1604.0,898.8 L1606.1,900.6Z M1762.6,906.2 L1770.7,908.3 L1777.4,908.8 L1778.6,904.8 L1776.4,901.4 L1772.6,899.6 L1773.9,895.9 L1769.4,898.0 L1765.2,902.7Z M1759.7,869.4 L1752.7,867.8 L1745.8,865.2 L1741.5,862.0 L1732.9,862.3 L1734.9,859.4 L1742.8,859.1 L1745.2,856.2 L1748.7,853.3 L1739.5,852.0 L1737.5,847.6 L1731.1,847.6 L1724.7,847.6 L1717.5,845.5 L1719.3,841.0 L1728.9,837.6 L1739.1,837.8 L1743.8,840.2 L1750.0,842.3 L1756.7,845.5 L1760.5,848.9 L1761.3,852.8 L1770.4,856.2 L1769.2,859.4 L1762.4,859.9 L1756.4,859.4 L1761.3,862.8 L1760.0,866.5Z M1655.6,848.3 L1662.7,843.6 L1658.7,841.0 L1669.7,839.1 L1675.7,839.4 L1681.7,839.7 L1686.9,841.0 L1689.4,847.6 L1681.1,850.2 L1673.2,850.7 L1662.2,851.0Z M1643.3,842.8 L1652.1,837.6 L1660.2,836.0 L1666.8,838.9 L1659.4,840.2 L1653.2,843.6 L1646.2,844.4Z M1735.9,830.7 L1728.7,829.7 L1735.9,825.7 L1732.8,820.8 L1746.5,816.5 L1754.3,815.5 L1762.2,814.4 L1769.9,813.4 L1775.1,813.7 L1780.2,814.1 L1785.5,814.4 L1790.7,814.7 L1790.1,817.9 L1783.7,818.9 L1777.3,820.0 L1764.7,823.9 L1756.9,826.5 L1745.7,831.0Z M1743.8,832.3 L1736.5,832.6 L1728.7,832.8 L1720.9,833.1 L1722.2,830.2 L1728.9,830.6 L1735.7,831.0 L1745.2,831.8Z M1668.4,833.9 L1674.8,835.7 L1682.6,835.1 L1690.3,834.4 L1693.7,831.8 L1687.9,830.5 L1679.4,831.0 L1672.4,831.0Z M1719.0,826.0 L1726.8,826.0 L1738.0,823.4 L1736.2,819.2 L1728.9,818.1 L1722.7,821.3Z M1706.2,841.8 L1711.1,842.3 L1719.1,838.4 L1716.9,837.0 L1709.7,837.6Z M1690.1,843.6 L1698.2,844.1 L1704.2,840.2 L1702.5,837.0 L1694.2,839.7Z M1713.6,859.9 L1720.5,859.4 L1726.2,863.8 L1719.3,866.7 L1714.3,865.4 L1711.9,863.3Z M1852.7,859.4 L1857.0,857.0 L1861.1,859.1 L1866.8,857.5 L1871.3,856.8 L1874.5,858.1 L1876.3,860.7 L1873.0,862.5 L1865.0,864.9 L1860.5,864.4 L1855.7,863.8 L1857.4,862.3 L1853.1,861.0Z M1686.8,974.0 L1691.6,971.3 L1696.0,970.5 L1699.9,971.1 L1706.0,974.2 L1710.4,976.8 L1714.1,978.4 L1705.5,979.2 L1704.9,977.1 L1700.7,974.7 L1695.0,973.2 L1690.6,973.2Z M1713.2,982.9 L1717.1,979.2 L1722.3,979.2 L1725.3,980.5 L1728.8,982.6 L1724.6,983.4 L1720.5,985.0 L1718.0,983.7Z M1703.0,983.1 L1708.1,983.9 L1706.2,984.7 L1703.2,984.2Z M1731.9,982.9 L1735.8,983.1 L1734.9,984.3 L1731.8,984.2Z M1703.7,1008.6 L1705.2,1010.5 L1707.4,1007.1 L1708.9,1003.4 L1712.1,1002.3 L1715.5,1001.5 L1719.1,998.9 L1720.0,1001.0 L1718.3,1002.9 L1719.6,1004.7 L1720.2,1002.6 L1723.4,1000.8 L1724.0,999.7 L1727.2,1003.1 L1733.7,1003.6 L1737.6,1004.7 L1741.6,1003.4 L1744.5,1003.4 L1742.9,1005.0 L1746.7,1006.3 L1748.5,1009.2 L1751.8,1010.5 L1756.2,1015.7 L1762.2,1016.0 L1764.8,1016.5 L1770.0,1018.6 L1772.1,1021.0 L1775.2,1026.8 L1774.4,1030.7 L1777.8,1031.5 L1779.9,1033.6 L1784.4,1034.1 L1789.6,1037.5 L1793.6,1037.8 L1797.5,1039.1 L1801.5,1038.9 L1805.4,1041.2 L1809.4,1044.1 L1813.6,1045.2 L1815.0,1049.9 L1814.3,1055.2 L1811.0,1059.4 L1807.7,1063.0 L1805.1,1065.7 L1804.8,1070.9 L1804.5,1078.0 L1802.7,1083.5 L1800.4,1088.8 L1798.0,1091.9 L1794.1,1091.9 L1790.4,1093.8 L1786.6,1095.1 L1782.5,1098.5 L1781.9,1103.8 L1781.2,1107.2 L1777.9,1112.4 L1774.4,1116.1 L1771.2,1120.8 L1767.7,1123.2 L1763.9,1122.9 L1759.9,1121.4 L1758.9,1121.9 L1762.3,1124.8 L1763.7,1127.2 L1762.1,1131.6 L1756.6,1133.5 L1751.7,1134.0 L1751.7,1138.7 L1745.6,1139.0 L1745.6,1141.9 L1748.8,1143.2 L1745.9,1145.8 L1746.0,1149.8 L1742.0,1151.9 L1741.9,1153.7 L1746.4,1156.3 L1743.5,1160.3 L1740.9,1164.2 L1741.6,1167.1 L1743.6,1169.2 L1738.5,1172.9 L1734.7,1172.1 L1730.2,1168.9 L1725.7,1164.2 L1723.6,1158.9 L1725.2,1155.0 L1722.4,1153.7 L1724.8,1148.4 L1725.8,1141.9 L1723.1,1140.6 L1722.7,1135.3 L1722.8,1129.3 L1723.8,1124.8 L1725.0,1118.2 L1724.1,1110.3 L1725.3,1102.5 L1725.2,1097.2 L1724.7,1086.7 L1723.8,1079.9 L1720.4,1077.0 L1713.6,1073.0 L1707.6,1068.3 L1704.6,1063.0 L1701.5,1057.8 L1698.0,1051.2 L1693.7,1047.3 L1693.3,1043.1 L1695.7,1040.4 L1696.4,1038.1 L1694.0,1037.0 L1695.1,1033.6 L1696.4,1029.9 L1699.3,1028.1 L1700.3,1024.9 L1703.5,1021.5 L1703.1,1017.0 L1703.2,1013.6 L1702.2,1012.6Z M1743.4,1170.0 L1739.5,1172.3 L1736.5,1174.2 L1742.0,1176.6 L1749.3,1177.6 L1752.9,1175.2 L1748.7,1173.9 L1744.8,1171.6Z M1760.2,1166.8 L1767.8,1166.6 L1768.6,1168.1 L1762.3,1168.7Z M1891.6,937.4 L1893.2,937.2 L1895.2,939.0 L1899.2,938.7 L1901.5,939.3 L1904.0,937.7 L1907.8,936.4 L1911.5,935.1 L1916.5,934.5 L1921.6,934.3 L1927.8,934.3 L1931.1,933.5 L1934.1,934.3 L1933.2,937.7 L1932.0,941.4 L1934.9,944.0 L1938.2,945.3 L1945.1,946.4 L1946.7,949.3 L1951.1,950.6 L1954.9,951.9 L1957.4,950.3 L1957.3,946.9 L1961.0,945.0 L1964.9,945.8 L1970.0,947.9 L1976.5,949.5 L1980.4,950.3 L1985.4,948.7 L1988.7,949.5 L1989.7,952.7 L1990.1,955.3 L1992.3,958.4 L1994.6,962.7 L1998.1,968.4 L1998.7,971.1 L2002.3,975.0 L2003.4,981.6 L2006.6,984.2 L2008.9,990.0 L2013.5,993.4 L2017.5,996.8 L2019.4,998.4 L2019.8,1001.0 L2023.0,1003.9 L2028.2,1003.1 L2033.4,1001.8 L2038.1,1001.0 L2040.4,1000.2 L2040.3,1003.9 L2038.6,1007.9 L2035.6,1014.4 L2032.5,1019.7 L2028.6,1024.1 L2024.7,1026.8 L2020.2,1030.4 L2016.8,1034.1 L2013.6,1038.1 L2011.5,1041.5 L2009.6,1044.6 L2008.3,1048.6 L2010.1,1052.0 L2010.0,1056.5 L2012.5,1059.4 L2012.6,1065.1 L2012.7,1070.9 L2009.4,1075.1 L2004.1,1077.5 L2000.8,1080.9 L1997.3,1084.1 L1998.4,1088.8 L1997.8,1094.0 L1994.1,1096.7 L1990.9,1099.0 L1990.6,1103.8 L1988.9,1107.2 L1985.6,1110.3 L1982.3,1114.3 L1978.0,1117.7 L1973.6,1120.3 L1971.3,1120.8 L1965.9,1121.1 L1962.1,1121.4 L1957.0,1122.9 L1954.0,1121.6 L1952.8,1120.3 L1952.2,1117.4 L1953.0,1114.3 L1950.6,1110.3 L1948.7,1106.7 L1945.5,1102.5 L1944.9,1097.2 L1943.7,1090.6 L1941.5,1086.2 L1938.5,1080.1 L1937.0,1074.9 L1938.6,1069.6 L1941.8,1064.6 L1942.6,1059.9 L1941.1,1055.2 L1940.1,1049.9 L1938.5,1046.7 L1937.5,1043.3 L1934.9,1041.2 L1931.4,1037.5 L1929.6,1033.6 L1931.2,1030.2 L1931.7,1026.2 L1932.0,1023.1 L1931.4,1021.0 L1929.3,1019.4 L1925.7,1019.9 L1922.3,1020.2 L1920.4,1017.6 L1917.8,1014.9 L1913.8,1014.9 L1909.6,1015.7 L1905.2,1017.6 L1901.3,1018.9 L1898.6,1018.1 L1894.7,1017.8 L1890.8,1018.9 L1886.5,1019.9 L1882.9,1018.4 L1879.0,1015.2 L1876.3,1013.4 L1873.5,1011.0 L1871.7,1007.9 L1868.5,1003.9 L1867.2,1002.6 L1863.1,999.2 L1862.6,996.0 L1860.8,992.9 L1863.2,989.5 L1863.8,985.5 L1864.7,981.6 L1864.2,977.6 L1862.5,976.3 L1863.1,973.2 L1865.2,969.2 L1867.9,965.8 L1869.5,962.7 L1872.7,959.0 L1877.1,957.4 L1880.4,954.5 L1881.8,951.4 L1881.6,948.7 L1883.7,945.3 L1887.5,942.9 L1890.1,941.1 L1891.6,937.4Z M2035.4,1063.0 L2037.6,1068.3 L2038.2,1072.2 L2036.2,1074.9 L2035.2,1078.8 L2033.0,1085.4 L2030.6,1090.6 L2028.1,1096.7 L2024.9,1098.0 L2022.3,1098.5 L2019.8,1096.7 L2018.8,1092.7 L2018.5,1088.8 L2021.4,1084.1 L2021.6,1080.1 L2021.0,1076.2 L2023.8,1073.5 L2027.4,1072.8 L2029.9,1070.4 L2031.9,1067.0 L2034.1,1064.3Z M1882.8,929.8 L1884.3,926.4 L1884.7,922.4 L1883.6,918.5 L1886.8,916.7 L1891.7,916.9 L1896.6,917.5 L1902.1,917.5 L1903.3,914.6 L1903.6,911.1 L1900.4,907.2 L1895.6,905.6 L1895.1,904.1 L1899.2,903.3 L1902.6,903.5 L1902.2,900.9 L1905.3,902.0 L1907.0,901.2 L1910.3,898.0 L1912.5,897.2 L1915.1,896.4 L1917.2,894.1 L1917.9,892.2 L1920.7,891.2 L1923.6,890.7 L1927.1,889.9 L1927.0,887.2 L1925.7,885.4 L1925.6,881.7 L1929.3,880.4 L1931.1,879.9 L1930.8,883.0 L1932.0,883.6 L1930.0,886.4 L1929.6,887.5 L1932.0,889.6 L1935.3,888.8 L1939.6,889.6 L1945.4,888.3 L1950.1,887.8 L1953.2,888.5 L1955.8,886.2 L1955.5,882.2 L1957.6,880.1 L1961.2,881.7 L1962.9,879.6 L1960.8,877.2 L1960.6,875.7 L1965.1,874.9 L1970.8,874.9 L1975.3,874.1 L1972.8,872.5 L1968.2,872.5 L1963.7,873.3 L1959.3,874.1 L1955.6,872.3 L1954.8,869.1 L1954.2,866.0 L1956.9,863.8 L1961.4,861.0 L1962.5,859.4 L1959.5,858.6 L1955.8,858.9 L1954.0,862.0 L1952.4,864.1 L1948.2,866.5 L1946.1,868.6 L1945.8,872.0 L1949.6,873.8 L1948.4,875.9 L1945.3,877.8 L1945.3,880.4 L1944.4,883.6 L1940.5,884.3 L1939.8,885.9 L1936.8,885.9 L1936.2,883.8 L1933.9,880.4 L1932.4,877.5 L1930.9,875.4 L1928.4,876.7 L1925.5,878.8 L1922.7,879.1 L1919.4,877.0 L1918.0,873.8 L1917.9,869.9 L1918.3,868.1 L1921.2,866.5 L1925.6,864.4 L1929.3,863.3 L1932.0,860.7 L1934.3,857.5 L1936.0,854.7 L1938.6,852.5 L1942.2,851.0 L1945.2,848.9 L1949.3,847.6 L1953.4,846.8 L1956.4,845.5 L1960.9,844.7 L1966.3,844.9 L1969.4,846.8 L1972.6,846.8 L1971.9,848.3 L1977.4,849.1 L1984.1,849.9 L1988.8,851.8 L1994.7,853.3 L1996.9,856.0 L1994.6,857.5 L1990.3,857.8 L1984.5,856.8 L1978.9,856.0 L1982.7,858.6 L1984.1,862.0 L1988.2,863.6 L1991.3,862.5 L1996.7,861.7 L1994.9,858.9 L1998.9,857.0 L2003.4,857.3 L2002.5,854.1 L2000.7,851.5 L2006.3,852.3 L2008.3,855.4 L2011.2,853.9 L2017.1,852.0 L2022.1,850.7 L2027.7,851.2 L2032.7,850.2 L2036.1,848.1 L2038.2,850.4 L2045.4,849.7 L2051.6,851.5 L2054.2,850.2 L2049.8,847.6 L2047.9,843.6 L2049.1,839.7 L2055.0,839.1 L2059.5,842.3 L2060.5,846.2 L2063.5,851.5 L2067.5,855.4 L2063.7,856.8 L2067.2,857.3 L2069.1,854.1 L2066.1,850.2 L2062.4,844.9 L2063.4,841.0 L2068.9,841.5 L2075.7,842.3 L2073.2,838.4 L2080.0,837.6 L2083.9,834.4 L2088.8,832.8 L2098.1,831.8 L2105.2,830.7 L2112.6,827.3 L2117.0,828.4 L2122.5,829.9 L2134.4,831.8 L2140.4,837.0 L2135.7,837.6 L2141.8,838.6 L2150.9,838.4 L2161.3,838.4 L2168.3,838.1 L2175.3,841.0 L2181.1,844.9 L2185.7,843.1 L2191.2,843.4 L2197.0,843.9 L2198.8,841.5 L2200.6,840.2 L2212.1,841.2 L2222.9,843.4 L2230.1,845.2 L2237.3,844.9 L2244.2,845.5 L2249.6,848.3 L2254.1,848.6 L2258.1,848.3 L2266.0,848.6 L2271.2,847.6 L2274.2,850.2 L2277.1,848.1 L2283.9,848.3 L2295.0,850.4 L2306.4,860.7 L2304.2,861.7 L2301.7,861.5 L2299.0,861.5 L2304.8,864.6 L2309.6,867.3 L2305.2,868.6 L2301.1,869.1 L2299.6,871.2 L2297.3,873.8 L2290.5,872.5 L2287.0,873.8 L2284.0,874.4 L2282.9,876.5 L2284.3,879.1 L2282.3,879.6 L2287.6,883.6 L2287.7,887.0 L2287.4,888.3 L2284.2,888.8 L2286.1,891.7 L2284.1,894.1 L2282.1,897.5 L2278.3,893.5 L2273.7,888.3 L2270.5,883.6 L2270.9,880.4 L2273.2,878.3 L2274.3,875.1 L2276.8,872.5 L2278.0,869.9 L2274.6,867.3 L2270.5,869.1 L2267.1,869.1 L2263.2,869.9 L2262.2,874.4 L2260.9,875.7 L2255.3,875.9 L2249.0,875.1 L2241.1,875.4 L2235.6,875.7 L2232.1,879.1 L2228.8,883.0 L2226.5,887.0 L2225.3,887.8 L2231.2,889.1 L2232.9,890.7 L2236.7,889.1 L2241.4,891.4 L2243.3,894.9 L2243.5,897.5 L2245.6,902.7 L2246.4,905.4 L2244.1,909.3 L2241.9,912.5 L2239.7,915.9 L2236.1,919.0 L2231.8,918.2 L2229.7,920.3 L2228.2,922.4 L2228.7,924.3 L2226.4,926.4 L2224.4,927.7 L2224.9,929.0 L2227.6,930.3 L2231.1,934.3 L2232.6,937.4 L2232.3,939.0 L2229.6,939.8 L2226.2,941.4 L2224.8,938.2 L2224.3,934.8 L2224.2,932.4 L2221.0,932.4 L2219.0,930.1 L2218.9,927.7 L2216.1,926.7 L2212.7,927.7 L2209.6,929.5 L2209.9,925.3 L2207.0,924.0 L2204.9,926.7 L2201.0,928.5 L2200.9,930.6 L2204.2,932.4 L2205.6,933.7 L2208.9,932.2 L2213.7,933.2 L2214.0,934.8 L2210.3,936.1 L2207.4,939.0 L2208.4,940.8 L2211.8,944.0 L2216.1,947.9 L2217.0,950.6 L2215.6,951.9 L2217.9,953.2 L2217.7,956.6 L2216.0,958.4 L2214.5,963.2 L2212.9,965.8 L2210.6,967.4 L2208.5,969.7 L2205.0,971.8 L2202.0,972.6 L2200.0,973.2 L2196.3,974.5 L2193.4,975.3 L2193.0,978.2 L2191.2,978.2 L2190.8,975.3 L2187.3,974.5 L2185.6,975.0 L2183.2,976.8 L2181.2,980.8 L2181.7,982.9 L2183.8,985.5 L2187.3,988.1 L2189.0,989.5 L2190.8,992.1 L2192.4,997.3 L2192.1,1000.8 L2189.2,1003.1 L2187.1,1004.2 L2186.0,1006.5 L2182.4,1008.4 L2181.1,1008.6 L2181.4,1005.2 L2179.5,1003.9 L2177.4,1003.6 L2176.0,1001.8 L2174.5,999.7 L2171.8,998.1 L2170.1,996.3 L2167.7,996.3 L2168.0,1000.0 L2166.4,1003.9 L2166.6,1007.1 L2168.6,1009.2 L2170.0,1012.3 L2173.3,1013.9 L2175.4,1015.5 L2177.6,1018.4 L2178.2,1021.5 L2178.3,1024.4 L2180.2,1027.6 L2178.3,1028.1 L2175.7,1026.0 L2172.5,1023.9 L2170.3,1020.5 L2169.7,1016.5 L2168.0,1014.4 L2165.3,1010.7 L2164.1,1009.2 L2164.7,1005.2 L2164.7,1001.3 L2164.2,997.9 L2162.3,993.9 L2161.2,990.5 L2161.0,988.1 L2158.5,987.1 L2155.4,989.7 L2152.2,989.5 L2152.4,985.5 L2150.7,982.1 L2149.1,979.5 L2146.2,977.1 L2144.6,974.5 L2143.8,972.6 L2140.4,972.1 L2139.3,974.0 L2136.8,974.2 L2131.7,975.0 L2131.5,977.6 L2128.3,979.5 L2126.0,981.6 L2122.4,985.5 L2120.8,987.9 L2117.6,989.7 L2115.6,991.3 L2115.7,996.0 L2116.5,1000.0 L2115.4,1004.4 L2114.1,1004.4 L2113.5,1007.3 L2111.4,1008.4 L2109.7,1010.2 L2106.9,1007.9 L2105.4,1003.9 L2103.4,1000.5 L2101.9,997.3 L2100.1,992.6 L2098.0,989.5 L2096.4,985.5 L2095.6,981.6 L2094.9,977.4 L2094.4,974.2 L2093.5,975.8 L2090.0,976.8 L2085.5,973.7 L2085.4,972.4 L2088.1,971.3 L2084.7,971.1 L2082.8,969.5 L2079.9,967.1 L2077.6,964.8 L2072.5,965.3 L2067.4,965.3 L2064.8,965.5 L2059.6,964.8 L2055.2,964.0 L2052.8,960.8 L2050.7,960.3 L2047.2,961.6 L2043.8,961.1 L2041.1,959.2 L2037.9,957.9 L2036.4,955.3 L2034.6,952.7 L2031.4,951.6 L2029.0,952.9 L2029.2,955.3 L2031.2,957.9 L2034.0,960.5 L2035.5,962.4 L2036.5,965.3 L2037.4,966.3 L2038.2,963.7 L2039.2,964.2 L2039.5,967.1 L2041.9,967.9 L2045.8,968.2 L2048.8,965.3 L2050.9,962.7 L2052.0,965.8 L2053.5,968.4 L2057.7,969.5 L2061.1,972.4 L2058.9,976.8 L2056.4,978.9 L2056.4,981.6 L2053.4,984.2 L2049.6,986.3 L2044.5,988.1 L2042.5,990.0 L2038.2,992.1 L2033.6,994.7 L2029.3,996.3 L2024.1,997.9 L2020.4,997.9 L2018.2,993.4 L2017.8,989.5 L2015.8,985.5 L2013.0,981.6 L2010.2,978.2 L2008.0,975.0 L2005.9,970.5 L2002.6,967.1 L2000.3,963.2 L1997.0,958.4 L1995.5,955.3 L1995.9,954.0 L1995.1,957.1 L1994.4,958.4 L1991.7,956.3 L1990.0,953.2 L1989.0,949.5 L1991.8,949.8 L1993.8,949.3 L1995.1,946.1 L1995.6,943.5 L1996.9,940.3 L1996.9,937.4 L1997.5,935.3 L1994.4,935.1 L1992.0,936.1 L1988.3,936.6 L1983.6,934.8 L1980.7,936.4 L1977.4,935.1 L1975.0,934.3 L1974.6,932.2 L1972.3,930.9 L1973.4,929.0 L1972.1,927.7 L1971.7,926.4 L1974.9,925.3 L1978.6,925.1 L1978.7,923.2 L1983.9,923.2 L1988.9,921.1 L1993.1,921.1 L1997.0,923.0 L2002.1,924.0 L2005.8,923.8 L2009.6,922.2 L2008.7,919.3 L2005.0,917.2 L2001.0,914.8 L1998.0,914.0 L1997.1,912.5 L1999.3,910.6 L1998.6,908.8 L2001.8,907.5 L1998.9,907.7 L1996.1,908.5 L1992.6,909.8 L1992.1,911.4 L1995.9,912.5 L1993.0,913.2 L1989.5,914.8 L1986.3,912.5 L1988.3,910.6 L1984.6,910.1 L1982.0,909.0 L1979.8,911.4 L1979.0,912.7 L1977.0,915.1 L1976.7,917.5 L1975.2,919.8 L1975.8,921.7 L1978.2,923.2 L1976.0,923.8 L1974.3,924.3 L1972.7,925.3 L1971.4,924.8 L1968.6,924.0 L1966.1,924.3 L1965.7,925.9 L1963.4,925.1 L1963.1,927.2 L1964.4,928.8 L1963.5,929.5 L1966.6,931.1 L1966.6,932.4 L1964.8,931.6 L1964.4,933.0 L1964.8,935.6 L1962.8,935.6 L1961.0,934.5 L1959.9,932.4 L1959.5,930.9 L1962.8,930.9 L1959.0,930.3 L1958.2,929.0 L1956.3,927.2 L1954.7,925.1 L1954.8,922.4 L1954.3,921.1 L1952.2,919.8 L1949.7,918.5 L1945.9,916.9 L1943.9,915.4 L1942.8,913.0 L1940.8,913.5 L1939.8,911.7 L1936.6,912.5 L1936.7,915.1 L1939.7,916.9 L1941.6,919.8 L1945.9,921.4 L1946.2,922.4 L1951.2,924.8 L1952.5,926.1 L1950.8,925.6 L1948.8,925.1 L1947.9,927.2 L1949.2,929.0 L1947.8,930.6 L1945.8,931.9 L1946.0,929.8 L1946.6,927.7 L1945.1,926.1 L1942.5,924.5 L1940.5,923.2 L1937.0,921.9 L1934.2,920.1 L1932.4,918.8 L1931.6,916.1 L1928.4,914.8 L1926.2,916.1 L1924.5,916.7 L1921.3,918.2 L1918.8,917.5 L1916.4,917.2 L1914.4,918.0 L1914.4,920.3 L1912.0,922.7 L1908.7,924.0 L1906.5,926.9 L1905.8,928.0 L1907.0,929.5 L1905.0,931.6 L1904.5,932.7 L1901.5,934.8 L1899.0,935.1 L1895.4,935.1 L1892.9,936.6 L1890.9,935.8 L1890.4,934.5 L1887.9,933.7 L1884.2,934.3 L1884.5,930.6Z M1518.0,850.4 L1521.1,851.5 L1524.6,854.1 L1529.8,855.4 L1532.4,857.8 L1527.9,859.4 L1521.7,862.3 L1517.2,861.2 L1516.8,859.4 L1511.3,859.4 L1507.7,860.7 L1506.6,860.7Z M1892.8,900.1 L1896.9,899.3 L1899.3,898.5 L1902.9,898.3 L1907.2,898.0 L1909.9,897.0 L1908.4,896.2 L1910.3,894.1 L1910.3,892.5 L1907.2,892.5 L1907.0,890.9 L1905.8,889.1 L1903.4,887.5 L1902.5,885.1 L1900.6,884.3 L1900.0,883.3 L1901.9,880.4 L1898.4,879.9 L1897.2,880.1 L1899.6,877.5 L1894.9,877.5 L1893.0,880.4 L1892.5,882.5 L1893.6,884.9 L1895.2,886.4 L1895.0,887.8 L1898.3,887.2 L1898.9,889.6 L1899.4,891.4 L1895.8,891.4 L1896.3,892.8 L1897.0,893.8 L1894.1,895.4 L1898.1,896.4 L1899.3,896.7 L1896.4,897.2 L1894.0,899.3Z M1891.8,891.4 L1892.3,889.1 L1893.5,888.3 L1891.9,886.4 L1887.2,886.4 L1886.4,888.5 L1882.9,889.1 L1883.3,891.4 L1884.4,893.3 L1882.2,894.9 L1883.8,896.2 L1887.4,895.4 L1891.2,894.3Z M1928.0,825.2 L1931.5,821.8 L1939.1,821.3 L1944.5,820.0 L1950.3,820.2 L1956.1,820.5 L1958.3,821.5 L1949.4,824.4 L1948.8,826.5 L1943.2,828.1 L1940.5,830.2 L1936.4,829.2 L1933.1,826.5Z M2014.9,842.8 L2020.1,845.5 L2028.3,845.7 L2026.3,842.3 L2022.0,839.7 L2023.6,836.3 L2027.8,832.3 L2035.1,831.0 L2043.8,829.4 L2038.2,829.4 L2029.1,831.0 L2022.1,833.1 L2019.3,835.7 L2019.6,838.9 L2016.3,841.0Z M2090.5,823.4 L2096.6,821.8 L2090.0,819.2 L2081.9,818.6 L2088.8,818.1 L2098.0,820.4 L2107.1,822.6 L2112.1,825.5 L2102.8,826.0 L2098.8,823.9Z M1993.9,820.0 L2001.1,819.2 L2006.6,818.9 L2012.1,818.6 L2018.7,817.3 L2023.8,819.2 L2017.2,820.8 L2011.5,820.8 L2005.8,820.8 L1996.5,821.3Z M2185.0,833.6 L2190.9,831.8 L2200.3,832.8 L2211.7,833.9 L2204.9,834.9 L2198.7,834.9 L2192.6,834.9 L2194.4,838.4 L2203.3,838.9 L2197.7,837.6Z M1937.8,931.6 L1945.3,931.1 L1944.7,935.1 L1937.8,932.7Z M1926.9,923.8 L1930.3,923.5 L1930.5,928.5 L1927.7,929.0Z M1927.8,919.8 L1929.7,918.5 L1930.0,921.7 L1928.3,922.4Z M1965.7,938.2 L1972.8,938.7 L1972.6,939.5 L1966.0,939.0Z M1988.0,939.5 L1993.7,938.0 L1992.3,939.8 L1988.8,940.6Z M2237.6,942.2 L2239.7,939.8 L2242.1,938.0 L2247.4,938.0 L2248.8,936.9 L2249.9,934.0 L2250.7,933.0 L2250.6,934.8 L2253.8,933.2 L2255.3,930.3 L2255.1,926.4 L2253.8,923.2 L2256.0,922.4 L2258.3,925.1 L2260.6,927.7 L2260.5,930.9 L2259.5,931.6 L2260.5,934.3 L2260.4,936.9 L2261.2,937.7 L2260.3,939.0 L2258.8,938.2 L2257.2,939.5 L2255.7,940.3 L2252.5,940.6 L2252.3,941.4 L2250.4,943.5 L2248.1,941.6 L2247.9,940.3 L2243.8,941.1 L2241.0,941.6 L2239.1,942.2Z M2235.2,944.3 L2237.7,942.4 L2240.2,944.3 L2241.0,946.1 L2240.5,949.0 L2239.2,949.8 L2237.8,949.3 L2237.1,946.6 L2235.5,945.6Z M2241.5,942.4 L2244.1,941.9 L2246.8,941.6 L2247.4,942.7 L2246.5,944.0 L2244.2,944.8 L2243.1,945.3 L2241.9,943.7Z M2253.5,922.4 L2251.9,919.8 L2252.5,917.7 L2254.6,917.5 L2253.3,912.2 L2257.5,914.6 L2261.9,916.1 L2263.4,915.1 L2265.2,918.0 L2262.4,918.8 L2261.2,921.1 L2257.3,919.6 L2255.0,920.1 L2253.8,920.6Z M2253.3,910.6 L2254.4,908.8 L2255.6,908.8 L2253.1,906.7 L2251.9,902.0 L2255.5,902.7 L2249.0,896.2 L2246.9,892.8 L2243.4,888.8 L2243.0,890.9 L2244.7,894.9 L2247.6,898.8 L2250.1,904.1 L2252.0,908.5Z M2218.0,965.3 L2220.6,965.8 L2220.1,969.7 L2219.0,973.7 L2216.7,971.1 L2216.9,967.6Z M2188.7,980.8 L2190.5,978.9 L2193.3,978.7 L2194.6,980.0 L2193.1,982.9 L2191.1,983.7 L2188.9,982.6Z M2115.8,1006.0 L2118.5,1007.9 L2121.0,1011.8 L2120.3,1014.4 L2117.7,1015.7 L2116.1,1014.4 L2115.7,1010.5Z M2220.0,989.5 L2219.6,984.2 L2220.9,982.6 L2224.1,983.1 L2224.8,986.8 L2223.3,990.8 L2224.1,993.9 L2227.6,995.0 L2230.6,997.9 L2230.1,998.4 L2227.3,996.6 L2225.1,995.8 L2221.7,995.2 L2221.2,993.4 L2219.5,992.1Z M2226.5,1013.1 L2226.8,1010.5 L2230.2,1008.9 L2232.8,1009.2 L2235.2,1005.7 L2237.5,1009.2 L2238.3,1013.1 L2237.1,1014.9 L2235.8,1016.3 L2234.5,1015.7 L2231.8,1014.4 L2230.3,1011.5Z M2225.9,1003.9 L2225.6,1000.5 L2228.8,1001.0 L2231.9,998.7 L2234.9,999.2 L2234.9,1002.6 L2234.3,1004.7 L2231.2,1005.2 L2230.0,1007.1 L2228.2,1007.1Z M2213.7,1009.4 L2216.8,1005.7 L2219.1,1001.8 L2219.8,1003.9 L2216.9,1007.3 L2214.5,1010.0Z M2194.3,1026.2 L2196.7,1026.8 L2198.8,1024.9 L2203.2,1023.1 L2205.7,1019.4 L2208.9,1018.4 L2211.6,1014.4 L2212.8,1013.1 L2215.3,1014.7 L2216.9,1016.5 L2219.3,1017.6 L2216.8,1019.7 L2215.8,1022.3 L2216.4,1025.7 L2219.1,1028.9 L2215.9,1029.4 L2215.1,1032.8 L2212.5,1035.4 L2212.4,1039.4 L2211.1,1041.5 L2207.4,1042.0 L2204.5,1040.2 L2200.1,1040.4 L2195.9,1038.9 L2195.4,1035.4 L2193.3,1032.8 L2192.8,1030.2 L2192.8,1027.6Z M2156.6,1016.8 L2159.8,1017.8 L2162.4,1017.8 L2164.6,1020.5 L2168.6,1023.1 L2171.2,1025.7 L2174.4,1027.6 L2177.8,1029.9 L2179.1,1032.3 L2181.0,1035.4 L2182.3,1037.5 L2184.8,1039.4 L2184.5,1043.3 L2184.1,1046.7 L2181.0,1046.5 L2178.2,1044.1 L2175.1,1042.0 L2172.3,1038.6 L2170.5,1035.4 L2168.6,1032.3 L2166.5,1029.9 L2165.2,1026.8 L2162.6,1024.9 L2159.9,1021.8 L2157.2,1018.9Z M2182.4,1049.4 L2184.6,1047.0 L2187.2,1047.3 L2191.1,1048.8 L2195.0,1049.4 L2197.7,1048.6 L2202.1,1049.9 L2206.7,1051.7 L2206.3,1054.4 L2202.7,1053.3 L2197.4,1053.3 L2193.6,1052.0 L2189.6,1052.0 L2185.8,1050.9Z M2207.9,1053.0 L2211.9,1053.3 L2215.8,1053.0 L2218.4,1053.8 L2223.6,1053.6 L2228.9,1053.3 L2228.3,1054.6 L2222.2,1054.9 L2218.3,1054.6 L2220.3,1056.2 L2222.8,1058.3 L2219.5,1057.3 L2217.8,1055.2 L2213.0,1055.2 L2209.2,1054.6Z M2229.8,1058.6 L2232.7,1055.7 L2236.7,1054.1 L2239.9,1053.6 L2237.9,1055.2 L2233.9,1057.0 L2231.7,1058.3Z M2220.1,1046.0 L2220.3,1040.7 L2218.5,1038.6 L2219.8,1034.9 L2221.2,1031.5 L2222.2,1029.4 L2224.3,1028.1 L2228.3,1028.9 L2231.7,1029.1 L2234.8,1027.3 L2234.3,1029.4 L2232.2,1030.4 L2227.0,1030.2 L2223.8,1030.2 L2222.2,1033.6 L2224.3,1034.9 L2228.3,1033.6 L2230.4,1033.9 L2229.0,1035.4 L2226.4,1036.5 L2227.4,1039.4 L2229.4,1042.0 L2229.8,1045.4 L2228.0,1045.7 L2227.5,1043.9 L2225.4,1043.9 L2224.2,1041.5 L2224.2,1038.9 L2222.7,1039.4 L2222.6,1043.3 L2222.5,1046.0Z M2241.4,1028.9 L2242.7,1026.2 L2244.5,1027.6 L2242.7,1030.2 L2244.6,1031.0 L2242.7,1033.3 L2241.9,1031.5Z M2242.6,1039.9 L2247.9,1039.1 L2249.9,1041.0 L2246.5,1040.7 L2242.6,1040.7Z M2250.6,1033.6 L2254.5,1032.6 L2258.5,1033.6 L2259.0,1036.8 L2260.5,1040.2 L2263.1,1039.4 L2266.3,1036.8 L2270.3,1036.2 L2274.2,1037.5 L2276.8,1038.3 L2282.0,1040.4 L2285.9,1041.7 L2289.2,1044.1 L2289.6,1046.0 L2293.5,1047.3 L2294.2,1049.1 L2292.1,1049.4 L2293.2,1052.0 L2295.6,1055.2 L2298.8,1057.3 L2301.0,1059.1 L2296.6,1058.6 L2293.5,1058.0 L2290.4,1054.9 L2286.7,1052.0 L2284.0,1051.7 L2282.1,1053.8 L2281.1,1055.7 L2277.2,1055.7 L2273.5,1053.0 L2270.3,1053.3 L2268.2,1053.3 L2267.9,1050.7 L2270.6,1049.4 L2269.2,1046.0 L2266.1,1044.4 L2262.2,1043.1 L2258.3,1041.7 L2255.7,1042.0 L2255.2,1039.4 L2257.6,1037.5 L2253.7,1037.5 L2250.6,1035.2Z M2295.7,1046.2 L2300.2,1044.6 L2304.2,1042.8 L2306.3,1042.8 L2305.4,1045.4 L2301.3,1047.8 L2297.4,1047.8Z M2201.7,1088.8 L2204.2,1088.0 L2208.4,1085.6 L2211.8,1085.6 L2215.2,1084.1 L2220.5,1083.0 L2224.2,1079.3 L2224.8,1076.2 L2228.1,1077.0 L2228.5,1074.3 L2231.1,1072.2 L2234.0,1069.6 L2237.6,1068.0 L2240.0,1069.6 L2241.4,1070.7 L2244.3,1070.7 L2245.5,1067.0 L2248.1,1064.3 L2251.6,1063.6 L2253.4,1061.5 L2256.9,1062.8 L2260.8,1063.0 L2264.2,1063.6 L2261.7,1067.0 L2260.2,1070.9 L2263.0,1073.3 L2265.5,1074.1 L2268.9,1077.2 L2272.8,1077.5 L2275.4,1072.2 L2276.6,1067.0 L2277.2,1063.8 L2279.5,1059.6 L2281.2,1063.0 L2281.6,1067.0 L2282.3,1069.6 L2285.5,1070.9 L2285.4,1074.9 L2286.3,1080.9 L2289.4,1082.5 L2292.3,1085.1 L2293.6,1089.8 L2295.9,1092.5 L2297.8,1095.4 L2300.3,1098.0 L2299.6,1102.5 L2299.6,1106.4 L2296.5,1111.6 L2294.0,1115.6 L2289.4,1120.3 L2286.6,1124.0 L2283.3,1128.2 L2282.2,1130.3 L2277.2,1131.1 L2274.1,1132.7 L2271.7,1134.2 L2270.3,1132.7 L2268.6,1131.9 L2265.0,1133.5 L2261.8,1132.1 L2259.0,1131.4 L2257.2,1128.7 L2257.9,1126.1 L2255.5,1125.0 L2256.2,1122.7 L2254.3,1124.0 L2254.1,1122.2 L2256.0,1119.5 L2256.2,1117.2 L2254.1,1119.8 L2251.5,1121.6 L2249.2,1123.2 L2248.1,1121.9 L2246.8,1118.7 L2245.6,1116.1 L2241.9,1115.6 L2238.4,1114.5 L2234.6,1114.5 L2229.0,1116.1 L2225.0,1116.9 L2220.9,1118.2 L2218.9,1120.6 L2215.2,1120.6 L2210.1,1120.6 L2206.6,1122.2 L2203.7,1123.7 L2200.5,1123.5 L2197.4,1121.6 L2197.7,1119.5 L2199.7,1118.7 L2200.5,1115.6 L2200.1,1111.6 L2200.1,1108.5 L2199.1,1104.6 L2197.7,1100.3 L2199.5,1097.2 L2199.0,1094.6 L2200.6,1090.9Z M2266.0,1138.5 L2270.1,1139.5 L2274.6,1138.7 L2273.3,1142.4 L2270.9,1145.0 L2268.0,1146.1 L2266.2,1145.0 L2265.6,1142.4Z M2342.8,1122.2 L2344.1,1124.0 L2345.7,1126.1 L2347.7,1127.4 L2347.5,1130.0 L2349.8,1131.1 L2353.6,1130.6 L2351.2,1133.5 L2348.6,1134.8 L2346.6,1137.4 L2342.3,1140.6 L2339.9,1140.3 L2342.1,1137.4 L2340.4,1135.3 L2340.2,1134.5 L2343.3,1132.1 L2344.9,1129.3 L2344.2,1126.6 L2342.8,1124.0Z M2335.9,1137.9 L2338.1,1139.0 L2338.3,1141.1 L2334.8,1144.0 L2331.7,1146.6 L2327.9,1147.6 L2324.8,1151.1 L2322.6,1152.9 L2318.2,1154.2 L2315.1,1153.2 L2313.4,1151.9 L2317.3,1149.2 L2320.8,1147.1 L2325.8,1144.8 L2330.2,1142.4 L2333.5,1139.2Z M2331.8,1084.6 L2335.2,1086.7 L2338.3,1090.1 L2336.6,1089.8 L2332.6,1086.7Z M2367.8,1077.5 L2371.1,1077.7 L2370.0,1079.3 L2367.5,1079.1Z M1502.0,978.4 L1504.4,979.5 L1502.4,981.6 L1501.7,980.0Z"/></clipPath>
<filter id="mb8" x="-30%" y="-30%" width="160%" height="160%"><feGaussianBlur stdDeviation="8"/></filter>
<filter id="mb5" x="-30%" y="-30%" width="160%" height="160%"><feGaussianBlur stdDeviation="5"/></filter>
<filter id="mb2" x="-30%" y="-30%" width="160%" height="160%"><feGaussianBlur stdDeviation="1.8"/></filter>
<filter id="mb3" x="-30%" y="-30%" width="160%" height="160%"><feGaussianBlur stdDeviation="3"/></filter>
<filter id="mb14" x="-30%" y="-30%" width="160%" height="160%"><feGaussianBlur stdDeviation="14"/></filter>
</defs>
<g clip-path="url(#stad)">
<rect x="1428.7" y="790.0" width="955.6" height="483.0" fill="#75a8ce"/>
<g filter="url(#mb14)">
<ellipse cx="1765.9" cy="955.3" rx="40.9" ry="26.3" fill="#6798c3" opacity="0.8"/>
<ellipse cx="1814.7" cy="1010.5" rx="26.2" ry="21.0" fill="#6798c3" opacity="0.5"/>
<ellipse cx="1842.5" cy="1105.1" rx="30.7" ry="31.5" fill="#6798c3" opacity="0.55"/>
<ellipse cx="1919.0" cy="1131.4" rx="35.1" ry="21.0" fill="#6798c3" opacity="0.4"/>
<ellipse cx="1821.6" cy="905.4" rx="19.4" ry="15.8" fill="#6798c3" opacity="0.4"/>
<ellipse cx="2305.6" cy="965.8" rx="51.5" ry="39.4" fill="#6798c3" opacity="0.85"/>
<ellipse cx="2339.6" cy="921.1" rx="34.6" ry="21.0" fill="#6798c3" opacity="0.6"/>
<ellipse cx="1498.3" cy="952.7" rx="56.1" ry="26.3" fill="#6798c3" opacity="0.45"/>
<ellipse cx="1539.9" cy="1057.8" rx="52.4" ry="36.8" fill="#6798c3" opacity="0.3"/>
<ellipse cx="1617.9" cy="1162.9" rx="43.3" ry="21.0" fill="#6798c3" opacity="0.4"/>
<ellipse cx="2102.6" cy="1063.0" rx="36.6" ry="26.3" fill="#6798c3" opacity="0.5"/>
<ellipse cx="2148.9" cy="1110.3" rx="35.7" ry="23.6" fill="#6798c3" opacity="0.55"/>
<ellipse cx="2057.9" cy="1123.5" rx="25.2" ry="21.0" fill="#6798c3" opacity="0.4"/>
<ellipse cx="2222.8" cy="1155.0" rx="34.1" ry="15.8" fill="#6798c3" opacity="0.5"/>
<ellipse cx="2291.4" cy="1162.9" rx="24.1" ry="15.8" fill="#6798c3" opacity="0.3"/>
<ellipse cx="1624.7" cy="1105.1" rx="20.5" ry="63.1" fill="#84b7dc" opacity="0.55"/>
<ellipse cx="1657.0" cy="1023.6" rx="26.3" ry="13.1" fill="#84b7dc" opacity="0.4"/>
<ellipse cx="1827.8" cy="1044.6" rx="7.9" ry="78.8" fill="#84b7dc" opacity="0.3" transform="rotate(15 1827.8 1044.6)"/>
<ellipse cx="2080.8" cy="1136.6" rx="54.8" ry="13.1" fill="#84b7dc" opacity="0.35"/>
<ellipse cx="1558.9" cy="1183.9" rx="69.5" ry="13.1" fill="#84b7dc" opacity="0.35"/>
<ellipse cx="1953.6" cy="1176.0" rx="70.6" ry="13.1" fill="#84b7dc" opacity="0.3"/>
<ellipse cx="2162.8" cy="1181.3" rx="69.9" ry="10.5" fill="#84b7dc" opacity="0.3"/>
<ellipse cx="1460.3" cy="1018.4" rx="36.7" ry="15.8" fill="#84b7dc" opacity="0.25"/>
<ellipse cx="1906.5" cy="839.7" rx="41.6" ry="13.1" fill="#84b7dc" opacity="0.5"/>
<ellipse cx="1630.9" cy="826.5" rx="78.7" ry="15.8" fill="#84b7dc" opacity="0.45"/>
<ellipse cx="2193.8" cy="821.3" rx="76.6" ry="13.1" fill="#84b7dc" opacity="0.45"/>
<ellipse cx="1522.1" cy="881.7" rx="23.3" ry="10.5" fill="#84b7dc" opacity="0.4"/>
<ellipse cx="2207.2" cy="1000.0" rx="13.1" ry="15.8" fill="#84b7dc" opacity="0.3"/>
<ellipse cx="1951.8" cy="936.9" rx="40.3" ry="9.2" fill="#84b7dc" opacity="0.5"/>
<ellipse cx="1674.8" cy="965.8" rx="15.4" ry="10.5" fill="#84b7dc" opacity="0.35"/>
<ellipse cx="1710.9" cy="992.1" rx="26.1" ry="10.5" fill="#84b7dc" opacity="0.3"/>
<ellipse cx="2063.0" cy="992.1" rx="20.9" ry="18.4" fill="#84b7dc" opacity="0.2"/>
<ellipse cx="1567.4" cy="992.1" rx="65.2" ry="31.5" fill="#6798c3" opacity="0.35"/>
<ellipse cx="1523.8" cy="1110.3" rx="51.0" ry="26.3" fill="#6798c3" opacity="0.3"/>
</g>
<path d="M1534.8,859.1 L1546.1,851.8 L1555.0,850.2 L1565.2,847.2 L1575.3,844.1 L1583.6,845.5 L1589.0,846.4 L1594.5,847.3 L1603.9,848.6 L1613.2,850.2 L1620.8,848.9 L1633.7,846.5 L1638.7,848.1 L1647.3,848.1 L1654.2,850.2 L1659.1,852.3 L1667.2,853.1 L1670.5,854.7 L1672.8,851.2 L1681.0,852.0 L1685.5,853.3 L1692.9,852.0 L1698.2,852.3 L1701.4,848.9 L1702.8,844.1 L1707.9,842.3 L1709.5,846.2 L1709.7,849.4 L1712.1,850.7 L1716.7,850.2 L1723.3,848.1 L1729.5,848.6 L1730.5,851.5 L1726.4,856.5 L1721.4,857.5 L1716.2,857.0 L1714.5,862.5 L1709.7,863.3 L1704.9,863.8 L1697.6,867.3 L1692.3,871.2 L1688.0,877.0 L1690.5,881.7 L1696.8,881.7 L1701.6,884.3 L1706.8,886.2 L1712.9,886.7 L1711.3,892.2 L1713.1,895.4 L1716.3,896.7 L1719.0,893.5 L1720.2,888.3 L1726.2,884.3 L1728.3,880.4 L1725.4,877.0 L1729.4,872.5 L1730.2,867.5 L1739.2,867.8 L1743.7,870.7 L1747.4,871.2 L1746.3,876.5 L1749.2,878.0 L1755.5,874.4 L1759.0,872.8 L1761.8,878.6 L1762.9,883.0 L1765.6,885.9 L1770.8,888.8 L1773.6,894.1 L1770.2,896.4 L1762.3,899.6 L1755.1,899.6 L1746.7,899.6 L1741.1,902.7 L1736.5,906.7 L1742.1,903.5 L1749.7,902.2 L1750.8,904.6 L1747.4,906.7 L1749.1,909.8 L1755.0,910.9 L1759.5,909.3 L1759.3,911.4 L1750.6,914.6 L1744.4,917.2 L1743.9,914.8 L1748.0,911.9 L1742.3,913.2 L1736.9,915.6 L1733.3,917.2 L1731.4,920.3 L1733.1,921.9 L1729.2,922.7 L1723.1,924.5 L1721.5,927.4 L1718.5,930.1 L1715.8,933.7 L1715.8,938.0 L1712.6,940.3 L1709.2,942.4 L1705.5,944.5 L1700.6,948.2 L1698.9,952.1 L1700.3,957.9 L1701.1,961.1 L1699.8,965.0 L1697.5,965.3 L1696.3,962.7 L1694.5,958.7 L1695.1,955.3 L1692.7,952.7 L1688.5,953.5 L1686.0,951.6 L1682.1,951.9 L1678.2,952.1 L1678.2,955.0 L1675.2,954.8 L1671.6,953.7 L1666.5,953.7 L1662.2,955.8 L1657.3,959.0 L1655.8,963.7 L1653.7,972.4 L1654.3,977.4 L1656.7,981.0 L1660.1,983.4 L1664.8,982.9 L1668.8,982.4 L1671.4,979.5 L1672.6,976.3 L1677.4,975.0 L1681.3,975.0 L1679.4,980.3 L1677.8,983.4 L1676.7,986.0 L1675.1,989.7 L1678.5,990.0 L1682.4,989.7 L1687.6,990.2 L1689.2,992.1 L1688.1,997.3 L1687.8,1002.1 L1689.9,1006.0 L1692.2,1007.9 L1694.8,1008.1 L1698.0,1006.5 L1700.9,1006.8 L1703.7,1008.6 L1702.2,1012.6 L1700.5,1010.0 L1697.9,1008.1 L1696.0,1010.0 L1696.2,1012.3 L1693.3,1011.8 L1689.5,1010.0 L1687.2,1008.9 L1684.4,1006.0 L1681.8,1005.2 L1682.0,1002.6 L1677.9,997.6 L1672.7,996.3 L1667.6,994.7 L1662.1,989.5 L1659.0,988.9 L1655.0,990.2 L1649.9,988.7 L1646.2,986.8 L1641.3,984.5 L1636.8,982.6 L1632.9,978.4 L1633.7,974.7 L1631.5,970.3 L1628.4,965.8 L1625.5,961.9 L1623.4,958.4 L1619.6,955.3 L1618.4,949.5 L1614.7,947.9 L1614.0,951.9 L1617.0,955.8 L1618.4,960.0 L1620.5,963.7 L1622.1,967.9 L1623.7,970.8 L1621.7,970.3 L1617.6,965.8 L1618.2,962.7 L1613.5,960.0 L1614.3,956.6 L1611.2,953.2 L1609.9,948.7 L1609.1,945.8 L1607.0,942.4 L1601.8,940.8 L1600.4,935.3 L1599.6,932.2 L1597.8,927.7 L1597.4,925.3 L1600.1,918.5 L1604.1,910.1 L1604.7,904.3 L1608.7,904.6 L1609.3,902.0 L1606.1,899.6 L1601.3,897.0 L1601.5,892.8 L1599.2,888.3 L1597.9,884.3 L1596.8,879.6 L1591.5,877.8 L1589.3,875.1 L1585.2,874.4 L1577.6,873.8 L1573.4,871.7 L1566.5,873.3 L1557.2,875.9 L1561.2,871.2 L1553.6,875.1 L1548.4,879.1 L1538.8,882.8 L1531.1,885.4 L1524.2,887.0 L1518.0,888.0 L1527.0,884.6 L1537.0,880.4 L1542.9,877.2 L1537.3,877.0 L1532.3,877.5 L1530.6,873.8 L1530.4,869.9 L1536.2,866.0 L1545.9,863.8 L1547.8,861.7 L1540.9,862.0 L1535.8,861.5 L1534.8,859.1Z M1607.8,904.3 L1603.9,903.3 L1598.7,898.5 L1604.0,898.8 L1606.1,900.6Z M1762.6,906.2 L1770.7,908.3 L1777.4,908.8 L1778.6,904.8 L1776.4,901.4 L1772.6,899.6 L1773.9,895.9 L1769.4,898.0 L1765.2,902.7Z M1759.7,869.4 L1752.7,867.8 L1745.8,865.2 L1741.5,862.0 L1732.9,862.3 L1734.9,859.4 L1742.8,859.1 L1745.2,856.2 L1748.7,853.3 L1739.5,852.0 L1737.5,847.6 L1731.1,847.6 L1724.7,847.6 L1717.5,845.5 L1719.3,841.0 L1728.9,837.6 L1739.1,837.8 L1743.8,840.2 L1750.0,842.3 L1756.7,845.5 L1760.5,848.9 L1761.3,852.8 L1770.4,856.2 L1769.2,859.4 L1762.4,859.9 L1756.4,859.4 L1761.3,862.8 L1760.0,866.5Z M1655.6,848.3 L1662.7,843.6 L1658.7,841.0 L1669.7,839.1 L1675.7,839.4 L1681.7,839.7 L1686.9,841.0 L1689.4,847.6 L1681.1,850.2 L1673.2,850.7 L1662.2,851.0Z M1643.3,842.8 L1652.1,837.6 L1660.2,836.0 L1666.8,838.9 L1659.4,840.2 L1653.2,843.6 L1646.2,844.4Z M1735.9,830.7 L1728.7,829.7 L1735.9,825.7 L1732.8,820.8 L1746.5,816.5 L1754.3,815.5 L1762.2,814.4 L1769.9,813.4 L1775.1,813.7 L1780.2,814.1 L1785.5,814.4 L1790.7,814.7 L1790.1,817.9 L1783.7,818.9 L1777.3,820.0 L1764.7,823.9 L1756.9,826.5 L1745.7,831.0Z M1743.8,832.3 L1736.5,832.6 L1728.7,832.8 L1720.9,833.1 L1722.2,830.2 L1728.9,830.6 L1735.7,831.0 L1745.2,831.8Z M1668.4,833.9 L1674.8,835.7 L1682.6,835.1 L1690.3,834.4 L1693.7,831.8 L1687.9,830.5 L1679.4,831.0 L1672.4,831.0Z M1719.0,826.0 L1726.8,826.0 L1738.0,823.4 L1736.2,819.2 L1728.9,818.1 L1722.7,821.3Z M1706.2,841.8 L1711.1,842.3 L1719.1,838.4 L1716.9,837.0 L1709.7,837.6Z M1690.1,843.6 L1698.2,844.1 L1704.2,840.2 L1702.5,837.0 L1694.2,839.7Z M1713.6,859.9 L1720.5,859.4 L1726.2,863.8 L1719.3,866.7 L1714.3,865.4 L1711.9,863.3Z M1852.7,859.4 L1857.0,857.0 L1861.1,859.1 L1866.8,857.5 L1871.3,856.8 L1874.5,858.1 L1876.3,860.7 L1873.0,862.5 L1865.0,864.9 L1860.5,864.4 L1855.7,863.8 L1857.4,862.3 L1853.1,861.0Z M1686.8,974.0 L1691.6,971.3 L1696.0,970.5 L1699.9,971.1 L1706.0,974.2 L1710.4,976.8 L1714.1,978.4 L1705.5,979.2 L1704.9,977.1 L1700.7,974.7 L1695.0,973.2 L1690.6,973.2Z M1713.2,982.9 L1717.1,979.2 L1722.3,979.2 L1725.3,980.5 L1728.8,982.6 L1724.6,983.4 L1720.5,985.0 L1718.0,983.7Z M1703.0,983.1 L1708.1,983.9 L1706.2,984.7 L1703.2,984.2Z M1731.9,982.9 L1735.8,983.1 L1734.9,984.3 L1731.8,984.2Z M1703.7,1008.6 L1705.2,1010.5 L1707.4,1007.1 L1708.9,1003.4 L1712.1,1002.3 L1715.5,1001.5 L1719.1,998.9 L1720.0,1001.0 L1718.3,1002.9 L1719.6,1004.7 L1720.2,1002.6 L1723.4,1000.8 L1724.0,999.7 L1727.2,1003.1 L1733.7,1003.6 L1737.6,1004.7 L1741.6,1003.4 L1744.5,1003.4 L1742.9,1005.0 L1746.7,1006.3 L1748.5,1009.2 L1751.8,1010.5 L1756.2,1015.7 L1762.2,1016.0 L1764.8,1016.5 L1770.0,1018.6 L1772.1,1021.0 L1775.2,1026.8 L1774.4,1030.7 L1777.8,1031.5 L1779.9,1033.6 L1784.4,1034.1 L1789.6,1037.5 L1793.6,1037.8 L1797.5,1039.1 L1801.5,1038.9 L1805.4,1041.2 L1809.4,1044.1 L1813.6,1045.2 L1815.0,1049.9 L1814.3,1055.2 L1811.0,1059.4 L1807.7,1063.0 L1805.1,1065.7 L1804.8,1070.9 L1804.5,1078.0 L1802.7,1083.5 L1800.4,1088.8 L1798.0,1091.9 L1794.1,1091.9 L1790.4,1093.8 L1786.6,1095.1 L1782.5,1098.5 L1781.9,1103.8 L1781.2,1107.2 L1777.9,1112.4 L1774.4,1116.1 L1771.2,1120.8 L1767.7,1123.2 L1763.9,1122.9 L1759.9,1121.4 L1758.9,1121.9 L1762.3,1124.8 L1763.7,1127.2 L1762.1,1131.6 L1756.6,1133.5 L1751.7,1134.0 L1751.7,1138.7 L1745.6,1139.0 L1745.6,1141.9 L1748.8,1143.2 L1745.9,1145.8 L1746.0,1149.8 L1742.0,1151.9 L1741.9,1153.7 L1746.4,1156.3 L1743.5,1160.3 L1740.9,1164.2 L1741.6,1167.1 L1743.6,1169.2 L1738.5,1172.9 L1734.7,1172.1 L1730.2,1168.9 L1725.7,1164.2 L1723.6,1158.9 L1725.2,1155.0 L1722.4,1153.7 L1724.8,1148.4 L1725.8,1141.9 L1723.1,1140.6 L1722.7,1135.3 L1722.8,1129.3 L1723.8,1124.8 L1725.0,1118.2 L1724.1,1110.3 L1725.3,1102.5 L1725.2,1097.2 L1724.7,1086.7 L1723.8,1079.9 L1720.4,1077.0 L1713.6,1073.0 L1707.6,1068.3 L1704.6,1063.0 L1701.5,1057.8 L1698.0,1051.2 L1693.7,1047.3 L1693.3,1043.1 L1695.7,1040.4 L1696.4,1038.1 L1694.0,1037.0 L1695.1,1033.6 L1696.4,1029.9 L1699.3,1028.1 L1700.3,1024.9 L1703.5,1021.5 L1703.1,1017.0 L1703.2,1013.6 L1702.2,1012.6Z M1743.4,1170.0 L1739.5,1172.3 L1736.5,1174.2 L1742.0,1176.6 L1749.3,1177.6 L1752.9,1175.2 L1748.7,1173.9 L1744.8,1171.6Z M1760.2,1166.8 L1767.8,1166.6 L1768.6,1168.1 L1762.3,1168.7Z M1891.6,937.4 L1893.2,937.2 L1895.2,939.0 L1899.2,938.7 L1901.5,939.3 L1904.0,937.7 L1907.8,936.4 L1911.5,935.1 L1916.5,934.5 L1921.6,934.3 L1927.8,934.3 L1931.1,933.5 L1934.1,934.3 L1933.2,937.7 L1932.0,941.4 L1934.9,944.0 L1938.2,945.3 L1945.1,946.4 L1946.7,949.3 L1951.1,950.6 L1954.9,951.9 L1957.4,950.3 L1957.3,946.9 L1961.0,945.0 L1964.9,945.8 L1970.0,947.9 L1976.5,949.5 L1980.4,950.3 L1985.4,948.7 L1988.7,949.5 L1989.7,952.7 L1990.1,955.3 L1992.3,958.4 L1994.6,962.7 L1998.1,968.4 L1998.7,971.1 L2002.3,975.0 L2003.4,981.6 L2006.6,984.2 L2008.9,990.0 L2013.5,993.4 L2017.5,996.8 L2019.4,998.4 L2019.8,1001.0 L2023.0,1003.9 L2028.2,1003.1 L2033.4,1001.8 L2038.1,1001.0 L2040.4,1000.2 L2040.3,1003.9 L2038.6,1007.9 L2035.6,1014.4 L2032.5,1019.7 L2028.6,1024.1 L2024.7,1026.8 L2020.2,1030.4 L2016.8,1034.1 L2013.6,1038.1 L2011.5,1041.5 L2009.6,1044.6 L2008.3,1048.6 L2010.1,1052.0 L2010.0,1056.5 L2012.5,1059.4 L2012.6,1065.1 L2012.7,1070.9 L2009.4,1075.1 L2004.1,1077.5 L2000.8,1080.9 L1997.3,1084.1 L1998.4,1088.8 L1997.8,1094.0 L1994.1,1096.7 L1990.9,1099.0 L1990.6,1103.8 L1988.9,1107.2 L1985.6,1110.3 L1982.3,1114.3 L1978.0,1117.7 L1973.6,1120.3 L1971.3,1120.8 L1965.9,1121.1 L1962.1,1121.4 L1957.0,1122.9 L1954.0,1121.6 L1952.8,1120.3 L1952.2,1117.4 L1953.0,1114.3 L1950.6,1110.3 L1948.7,1106.7 L1945.5,1102.5 L1944.9,1097.2 L1943.7,1090.6 L1941.5,1086.2 L1938.5,1080.1 L1937.0,1074.9 L1938.6,1069.6 L1941.8,1064.6 L1942.6,1059.9 L1941.1,1055.2 L1940.1,1049.9 L1938.5,1046.7 L1937.5,1043.3 L1934.9,1041.2 L1931.4,1037.5 L1929.6,1033.6 L1931.2,1030.2 L1931.7,1026.2 L1932.0,1023.1 L1931.4,1021.0 L1929.3,1019.4 L1925.7,1019.9 L1922.3,1020.2 L1920.4,1017.6 L1917.8,1014.9 L1913.8,1014.9 L1909.6,1015.7 L1905.2,1017.6 L1901.3,1018.9 L1898.6,1018.1 L1894.7,1017.8 L1890.8,1018.9 L1886.5,1019.9 L1882.9,1018.4 L1879.0,1015.2 L1876.3,1013.4 L1873.5,1011.0 L1871.7,1007.9 L1868.5,1003.9 L1867.2,1002.6 L1863.1,999.2 L1862.6,996.0 L1860.8,992.9 L1863.2,989.5 L1863.8,985.5 L1864.7,981.6 L1864.2,977.6 L1862.5,976.3 L1863.1,973.2 L1865.2,969.2 L1867.9,965.8 L1869.5,962.7 L1872.7,959.0 L1877.1,957.4 L1880.4,954.5 L1881.8,951.4 L1881.6,948.7 L1883.7,945.3 L1887.5,942.9 L1890.1,941.1 L1891.6,937.4Z M2035.4,1063.0 L2037.6,1068.3 L2038.2,1072.2 L2036.2,1074.9 L2035.2,1078.8 L2033.0,1085.4 L2030.6,1090.6 L2028.1,1096.7 L2024.9,1098.0 L2022.3,1098.5 L2019.8,1096.7 L2018.8,1092.7 L2018.5,1088.8 L2021.4,1084.1 L2021.6,1080.1 L2021.0,1076.2 L2023.8,1073.5 L2027.4,1072.8 L2029.9,1070.4 L2031.9,1067.0 L2034.1,1064.3Z M1882.8,929.8 L1884.3,926.4 L1884.7,922.4 L1883.6,918.5 L1886.8,916.7 L1891.7,916.9 L1896.6,917.5 L1902.1,917.5 L1903.3,914.6 L1903.6,911.1 L1900.4,907.2 L1895.6,905.6 L1895.1,904.1 L1899.2,903.3 L1902.6,903.5 L1902.2,900.9 L1905.3,902.0 L1907.0,901.2 L1910.3,898.0 L1912.5,897.2 L1915.1,896.4 L1917.2,894.1 L1917.9,892.2 L1920.7,891.2 L1923.6,890.7 L1927.1,889.9 L1927.0,887.2 L1925.7,885.4 L1925.6,881.7 L1929.3,880.4 L1931.1,879.9 L1930.8,883.0 L1932.0,883.6 L1930.0,886.4 L1929.6,887.5 L1932.0,889.6 L1935.3,888.8 L1939.6,889.6 L1945.4,888.3 L1950.1,887.8 L1953.2,888.5 L1955.8,886.2 L1955.5,882.2 L1957.6,880.1 L1961.2,881.7 L1962.9,879.6 L1960.8,877.2 L1960.6,875.7 L1965.1,874.9 L1970.8,874.9 L1975.3,874.1 L1972.8,872.5 L1968.2,872.5 L1963.7,873.3 L1959.3,874.1 L1955.6,872.3 L1954.8,869.1 L1954.2,866.0 L1956.9,863.8 L1961.4,861.0 L1962.5,859.4 L1959.5,858.6 L1955.8,858.9 L1954.0,862.0 L1952.4,864.1 L1948.2,866.5 L1946.1,868.6 L1945.8,872.0 L1949.6,873.8 L1948.4,875.9 L1945.3,877.8 L1945.3,880.4 L1944.4,883.6 L1940.5,884.3 L1939.8,885.9 L1936.8,885.9 L1936.2,883.8 L1933.9,880.4 L1932.4,877.5 L1930.9,875.4 L1928.4,876.7 L1925.5,878.8 L1922.7,879.1 L1919.4,877.0 L1918.0,873.8 L1917.9,869.9 L1918.3,868.1 L1921.2,866.5 L1925.6,864.4 L1929.3,863.3 L1932.0,860.7 L1934.3,857.5 L1936.0,854.7 L1938.6,852.5 L1942.2,851.0 L1945.2,848.9 L1949.3,847.6 L1953.4,846.8 L1956.4,845.5 L1960.9,844.7 L1966.3,844.9 L1969.4,846.8 L1972.6,846.8 L1971.9,848.3 L1977.4,849.1 L1984.1,849.9 L1988.8,851.8 L1994.7,853.3 L1996.9,856.0 L1994.6,857.5 L1990.3,857.8 L1984.5,856.8 L1978.9,856.0 L1982.7,858.6 L1984.1,862.0 L1988.2,863.6 L1991.3,862.5 L1996.7,861.7 L1994.9,858.9 L1998.9,857.0 L2003.4,857.3 L2002.5,854.1 L2000.7,851.5 L2006.3,852.3 L2008.3,855.4 L2011.2,853.9 L2017.1,852.0 L2022.1,850.7 L2027.7,851.2 L2032.7,850.2 L2036.1,848.1 L2038.2,850.4 L2045.4,849.7 L2051.6,851.5 L2054.2,850.2 L2049.8,847.6 L2047.9,843.6 L2049.1,839.7 L2055.0,839.1 L2059.5,842.3 L2060.5,846.2 L2063.5,851.5 L2067.5,855.4 L2063.7,856.8 L2067.2,857.3 L2069.1,854.1 L2066.1,850.2 L2062.4,844.9 L2063.4,841.0 L2068.9,841.5 L2075.7,842.3 L2073.2,838.4 L2080.0,837.6 L2083.9,834.4 L2088.8,832.8 L2098.1,831.8 L2105.2,830.7 L2112.6,827.3 L2117.0,828.4 L2122.5,829.9 L2134.4,831.8 L2140.4,837.0 L2135.7,837.6 L2141.8,838.6 L2150.9,838.4 L2161.3,838.4 L2168.3,838.1 L2175.3,841.0 L2181.1,844.9 L2185.7,843.1 L2191.2,843.4 L2197.0,843.9 L2198.8,841.5 L2200.6,840.2 L2212.1,841.2 L2222.9,843.4 L2230.1,845.2 L2237.3,844.9 L2244.2,845.5 L2249.6,848.3 L2254.1,848.6 L2258.1,848.3 L2266.0,848.6 L2271.2,847.6 L2274.2,850.2 L2277.1,848.1 L2283.9,848.3 L2295.0,850.4 L2306.4,860.7 L2304.2,861.7 L2301.7,861.5 L2299.0,861.5 L2304.8,864.6 L2309.6,867.3 L2305.2,868.6 L2301.1,869.1 L2299.6,871.2 L2297.3,873.8 L2290.5,872.5 L2287.0,873.8 L2284.0,874.4 L2282.9,876.5 L2284.3,879.1 L2282.3,879.6 L2287.6,883.6 L2287.7,887.0 L2287.4,888.3 L2284.2,888.8 L2286.1,891.7 L2284.1,894.1 L2282.1,897.5 L2278.3,893.5 L2273.7,888.3 L2270.5,883.6 L2270.9,880.4 L2273.2,878.3 L2274.3,875.1 L2276.8,872.5 L2278.0,869.9 L2274.6,867.3 L2270.5,869.1 L2267.1,869.1 L2263.2,869.9 L2262.2,874.4 L2260.9,875.7 L2255.3,875.9 L2249.0,875.1 L2241.1,875.4 L2235.6,875.7 L2232.1,879.1 L2228.8,883.0 L2226.5,887.0 L2225.3,887.8 L2231.2,889.1 L2232.9,890.7 L2236.7,889.1 L2241.4,891.4 L2243.3,894.9 L2243.5,897.5 L2245.6,902.7 L2246.4,905.4 L2244.1,909.3 L2241.9,912.5 L2239.7,915.9 L2236.1,919.0 L2231.8,918.2 L2229.7,920.3 L2228.2,922.4 L2228.7,924.3 L2226.4,926.4 L2224.4,927.7 L2224.9,929.0 L2227.6,930.3 L2231.1,934.3 L2232.6,937.4 L2232.3,939.0 L2229.6,939.8 L2226.2,941.4 L2224.8,938.2 L2224.3,934.8 L2224.2,932.4 L2221.0,932.4 L2219.0,930.1 L2218.9,927.7 L2216.1,926.7 L2212.7,927.7 L2209.6,929.5 L2209.9,925.3 L2207.0,924.0 L2204.9,926.7 L2201.0,928.5 L2200.9,930.6 L2204.2,932.4 L2205.6,933.7 L2208.9,932.2 L2213.7,933.2 L2214.0,934.8 L2210.3,936.1 L2207.4,939.0 L2208.4,940.8 L2211.8,944.0 L2216.1,947.9 L2217.0,950.6 L2215.6,951.9 L2217.9,953.2 L2217.7,956.6 L2216.0,958.4 L2214.5,963.2 L2212.9,965.8 L2210.6,967.4 L2208.5,969.7 L2205.0,971.8 L2202.0,972.6 L2200.0,973.2 L2196.3,974.5 L2193.4,975.3 L2193.0,978.2 L2191.2,978.2 L2190.8,975.3 L2187.3,974.5 L2185.6,975.0 L2183.2,976.8 L2181.2,980.8 L2181.7,982.9 L2183.8,985.5 L2187.3,988.1 L2189.0,989.5 L2190.8,992.1 L2192.4,997.3 L2192.1,1000.8 L2189.2,1003.1 L2187.1,1004.2 L2186.0,1006.5 L2182.4,1008.4 L2181.1,1008.6 L2181.4,1005.2 L2179.5,1003.9 L2177.4,1003.6 L2176.0,1001.8 L2174.5,999.7 L2171.8,998.1 L2170.1,996.3 L2167.7,996.3 L2168.0,1000.0 L2166.4,1003.9 L2166.6,1007.1 L2168.6,1009.2 L2170.0,1012.3 L2173.3,1013.9 L2175.4,1015.5 L2177.6,1018.4 L2178.2,1021.5 L2178.3,1024.4 L2180.2,1027.6 L2178.3,1028.1 L2175.7,1026.0 L2172.5,1023.9 L2170.3,1020.5 L2169.7,1016.5 L2168.0,1014.4 L2165.3,1010.7 L2164.1,1009.2 L2164.7,1005.2 L2164.7,1001.3 L2164.2,997.9 L2162.3,993.9 L2161.2,990.5 L2161.0,988.1 L2158.5,987.1 L2155.4,989.7 L2152.2,989.5 L2152.4,985.5 L2150.7,982.1 L2149.1,979.5 L2146.2,977.1 L2144.6,974.5 L2143.8,972.6 L2140.4,972.1 L2139.3,974.0 L2136.8,974.2 L2131.7,975.0 L2131.5,977.6 L2128.3,979.5 L2126.0,981.6 L2122.4,985.5 L2120.8,987.9 L2117.6,989.7 L2115.6,991.3 L2115.7,996.0 L2116.5,1000.0 L2115.4,1004.4 L2114.1,1004.4 L2113.5,1007.3 L2111.4,1008.4 L2109.7,1010.2 L2106.9,1007.9 L2105.4,1003.9 L2103.4,1000.5 L2101.9,997.3 L2100.1,992.6 L2098.0,989.5 L2096.4,985.5 L2095.6,981.6 L2094.9,977.4 L2094.4,974.2 L2093.5,975.8 L2090.0,976.8 L2085.5,973.7 L2085.4,972.4 L2088.1,971.3 L2084.7,971.1 L2082.8,969.5 L2079.9,967.1 L2077.6,964.8 L2072.5,965.3 L2067.4,965.3 L2064.8,965.5 L2059.6,964.8 L2055.2,964.0 L2052.8,960.8 L2050.7,960.3 L2047.2,961.6 L2043.8,961.1 L2041.1,959.2 L2037.9,957.9 L2036.4,955.3 L2034.6,952.7 L2031.4,951.6 L2029.0,952.9 L2029.2,955.3 L2031.2,957.9 L2034.0,960.5 L2035.5,962.4 L2036.5,965.3 L2037.4,966.3 L2038.2,963.7 L2039.2,964.2 L2039.5,967.1 L2041.9,967.9 L2045.8,968.2 L2048.8,965.3 L2050.9,962.7 L2052.0,965.8 L2053.5,968.4 L2057.7,969.5 L2061.1,972.4 L2058.9,976.8 L2056.4,978.9 L2056.4,981.6 L2053.4,984.2 L2049.6,986.3 L2044.5,988.1 L2042.5,990.0 L2038.2,992.1 L2033.6,994.7 L2029.3,996.3 L2024.1,997.9 L2020.4,997.9 L2018.2,993.4 L2017.8,989.5 L2015.8,985.5 L2013.0,981.6 L2010.2,978.2 L2008.0,975.0 L2005.9,970.5 L2002.6,967.1 L2000.3,963.2 L1997.0,958.4 L1995.5,955.3 L1995.9,954.0 L1995.1,957.1 L1994.4,958.4 L1991.7,956.3 L1990.0,953.2 L1989.0,949.5 L1991.8,949.8 L1993.8,949.3 L1995.1,946.1 L1995.6,943.5 L1996.9,940.3 L1996.9,937.4 L1997.5,935.3 L1994.4,935.1 L1992.0,936.1 L1988.3,936.6 L1983.6,934.8 L1980.7,936.4 L1977.4,935.1 L1975.0,934.3 L1974.6,932.2 L1972.3,930.9 L1973.4,929.0 L1972.1,927.7 L1971.7,926.4 L1974.9,925.3 L1978.6,925.1 L1978.7,923.2 L1983.9,923.2 L1988.9,921.1 L1993.1,921.1 L1997.0,923.0 L2002.1,924.0 L2005.8,923.8 L2009.6,922.2 L2008.7,919.3 L2005.0,917.2 L2001.0,914.8 L1998.0,914.0 L1997.1,912.5 L1999.3,910.6 L1998.6,908.8 L2001.8,907.5 L1998.9,907.7 L1996.1,908.5 L1992.6,909.8 L1992.1,911.4 L1995.9,912.5 L1993.0,913.2 L1989.5,914.8 L1986.3,912.5 L1988.3,910.6 L1984.6,910.1 L1982.0,909.0 L1979.8,911.4 L1979.0,912.7 L1977.0,915.1 L1976.7,917.5 L1975.2,919.8 L1975.8,921.7 L1978.2,923.2 L1976.0,923.8 L1974.3,924.3 L1972.7,925.3 L1971.4,924.8 L1968.6,924.0 L1966.1,924.3 L1965.7,925.9 L1963.4,925.1 L1963.1,927.2 L1964.4,928.8 L1963.5,929.5 L1966.6,931.1 L1966.6,932.4 L1964.8,931.6 L1964.4,933.0 L1964.8,935.6 L1962.8,935.6 L1961.0,934.5 L1959.9,932.4 L1959.5,930.9 L1962.8,930.9 L1959.0,930.3 L1958.2,929.0 L1956.3,927.2 L1954.7,925.1 L1954.8,922.4 L1954.3,921.1 L1952.2,919.8 L1949.7,918.5 L1945.9,916.9 L1943.9,915.4 L1942.8,913.0 L1940.8,913.5 L1939.8,911.7 L1936.6,912.5 L1936.7,915.1 L1939.7,916.9 L1941.6,919.8 L1945.9,921.4 L1946.2,922.4 L1951.2,924.8 L1952.5,926.1 L1950.8,925.6 L1948.8,925.1 L1947.9,927.2 L1949.2,929.0 L1947.8,930.6 L1945.8,931.9 L1946.0,929.8 L1946.6,927.7 L1945.1,926.1 L1942.5,924.5 L1940.5,923.2 L1937.0,921.9 L1934.2,920.1 L1932.4,918.8 L1931.6,916.1 L1928.4,914.8 L1926.2,916.1 L1924.5,916.7 L1921.3,918.2 L1918.8,917.5 L1916.4,917.2 L1914.4,918.0 L1914.4,920.3 L1912.0,922.7 L1908.7,924.0 L1906.5,926.9 L1905.8,928.0 L1907.0,929.5 L1905.0,931.6 L1904.5,932.7 L1901.5,934.8 L1899.0,935.1 L1895.4,935.1 L1892.9,936.6 L1890.9,935.8 L1890.4,934.5 L1887.9,933.7 L1884.2,934.3 L1884.5,930.6Z M1518.0,850.4 L1521.1,851.5 L1524.6,854.1 L1529.8,855.4 L1532.4,857.8 L1527.9,859.4 L1521.7,862.3 L1517.2,861.2 L1516.8,859.4 L1511.3,859.4 L1507.7,860.7 L1506.6,860.7Z M1892.8,900.1 L1896.9,899.3 L1899.3,898.5 L1902.9,898.3 L1907.2,898.0 L1909.9,897.0 L1908.4,896.2 L1910.3,894.1 L1910.3,892.5 L1907.2,892.5 L1907.0,890.9 L1905.8,889.1 L1903.4,887.5 L1902.5,885.1 L1900.6,884.3 L1900.0,883.3 L1901.9,880.4 L1898.4,879.9 L1897.2,880.1 L1899.6,877.5 L1894.9,877.5 L1893.0,880.4 L1892.5,882.5 L1893.6,884.9 L1895.2,886.4 L1895.0,887.8 L1898.3,887.2 L1898.9,889.6 L1899.4,891.4 L1895.8,891.4 L1896.3,892.8 L1897.0,893.8 L1894.1,895.4 L1898.1,896.4 L1899.3,896.7 L1896.4,897.2 L1894.0,899.3Z M1891.8,891.4 L1892.3,889.1 L1893.5,888.3 L1891.9,886.4 L1887.2,886.4 L1886.4,888.5 L1882.9,889.1 L1883.3,891.4 L1884.4,893.3 L1882.2,894.9 L1883.8,896.2 L1887.4,895.4 L1891.2,894.3Z M1928.0,825.2 L1931.5,821.8 L1939.1,821.3 L1944.5,820.0 L1950.3,820.2 L1956.1,820.5 L1958.3,821.5 L1949.4,824.4 L1948.8,826.5 L1943.2,828.1 L1940.5,830.2 L1936.4,829.2 L1933.1,826.5Z M2014.9,842.8 L2020.1,845.5 L2028.3,845.7 L2026.3,842.3 L2022.0,839.7 L2023.6,836.3 L2027.8,832.3 L2035.1,831.0 L2043.8,829.4 L2038.2,829.4 L2029.1,831.0 L2022.1,833.1 L2019.3,835.7 L2019.6,838.9 L2016.3,841.0Z M2090.5,823.4 L2096.6,821.8 L2090.0,819.2 L2081.9,818.6 L2088.8,818.1 L2098.0,820.4 L2107.1,822.6 L2112.1,825.5 L2102.8,826.0 L2098.8,823.9Z M1993.9,820.0 L2001.1,819.2 L2006.6,818.9 L2012.1,818.6 L2018.7,817.3 L2023.8,819.2 L2017.2,820.8 L2011.5,820.8 L2005.8,820.8 L1996.5,821.3Z M2185.0,833.6 L2190.9,831.8 L2200.3,832.8 L2211.7,833.9 L2204.9,834.9 L2198.7,834.9 L2192.6,834.9 L2194.4,838.4 L2203.3,838.9 L2197.7,837.6Z M1937.8,931.6 L1945.3,931.1 L1944.7,935.1 L1937.8,932.7Z M1926.9,923.8 L1930.3,923.5 L1930.5,928.5 L1927.7,929.0Z M1927.8,919.8 L1929.7,918.5 L1930.0,921.7 L1928.3,922.4Z M1965.7,938.2 L1972.8,938.7 L1972.6,939.5 L1966.0,939.0Z M1988.0,939.5 L1993.7,938.0 L1992.3,939.8 L1988.8,940.6Z M2237.6,942.2 L2239.7,939.8 L2242.1,938.0 L2247.4,938.0 L2248.8,936.9 L2249.9,934.0 L2250.7,933.0 L2250.6,934.8 L2253.8,933.2 L2255.3,930.3 L2255.1,926.4 L2253.8,923.2 L2256.0,922.4 L2258.3,925.1 L2260.6,927.7 L2260.5,930.9 L2259.5,931.6 L2260.5,934.3 L2260.4,936.9 L2261.2,937.7 L2260.3,939.0 L2258.8,938.2 L2257.2,939.5 L2255.7,940.3 L2252.5,940.6 L2252.3,941.4 L2250.4,943.5 L2248.1,941.6 L2247.9,940.3 L2243.8,941.1 L2241.0,941.6 L2239.1,942.2Z M2235.2,944.3 L2237.7,942.4 L2240.2,944.3 L2241.0,946.1 L2240.5,949.0 L2239.2,949.8 L2237.8,949.3 L2237.1,946.6 L2235.5,945.6Z M2241.5,942.4 L2244.1,941.9 L2246.8,941.6 L2247.4,942.7 L2246.5,944.0 L2244.2,944.8 L2243.1,945.3 L2241.9,943.7Z M2253.5,922.4 L2251.9,919.8 L2252.5,917.7 L2254.6,917.5 L2253.3,912.2 L2257.5,914.6 L2261.9,916.1 L2263.4,915.1 L2265.2,918.0 L2262.4,918.8 L2261.2,921.1 L2257.3,919.6 L2255.0,920.1 L2253.8,920.6Z M2253.3,910.6 L2254.4,908.8 L2255.6,908.8 L2253.1,906.7 L2251.9,902.0 L2255.5,902.7 L2249.0,896.2 L2246.9,892.8 L2243.4,888.8 L2243.0,890.9 L2244.7,894.9 L2247.6,898.8 L2250.1,904.1 L2252.0,908.5Z M2218.0,965.3 L2220.6,965.8 L2220.1,969.7 L2219.0,973.7 L2216.7,971.1 L2216.9,967.6Z M2188.7,980.8 L2190.5,978.9 L2193.3,978.7 L2194.6,980.0 L2193.1,982.9 L2191.1,983.7 L2188.9,982.6Z M2115.8,1006.0 L2118.5,1007.9 L2121.0,1011.8 L2120.3,1014.4 L2117.7,1015.7 L2116.1,1014.4 L2115.7,1010.5Z M2220.0,989.5 L2219.6,984.2 L2220.9,982.6 L2224.1,983.1 L2224.8,986.8 L2223.3,990.8 L2224.1,993.9 L2227.6,995.0 L2230.6,997.9 L2230.1,998.4 L2227.3,996.6 L2225.1,995.8 L2221.7,995.2 L2221.2,993.4 L2219.5,992.1Z M2226.5,1013.1 L2226.8,1010.5 L2230.2,1008.9 L2232.8,1009.2 L2235.2,1005.7 L2237.5,1009.2 L2238.3,1013.1 L2237.1,1014.9 L2235.8,1016.3 L2234.5,1015.7 L2231.8,1014.4 L2230.3,1011.5Z M2225.9,1003.9 L2225.6,1000.5 L2228.8,1001.0 L2231.9,998.7 L2234.9,999.2 L2234.9,1002.6 L2234.3,1004.7 L2231.2,1005.2 L2230.0,1007.1 L2228.2,1007.1Z M2213.7,1009.4 L2216.8,1005.7 L2219.1,1001.8 L2219.8,1003.9 L2216.9,1007.3 L2214.5,1010.0Z M2194.3,1026.2 L2196.7,1026.8 L2198.8,1024.9 L2203.2,1023.1 L2205.7,1019.4 L2208.9,1018.4 L2211.6,1014.4 L2212.8,1013.1 L2215.3,1014.7 L2216.9,1016.5 L2219.3,1017.6 L2216.8,1019.7 L2215.8,1022.3 L2216.4,1025.7 L2219.1,1028.9 L2215.9,1029.4 L2215.1,1032.8 L2212.5,1035.4 L2212.4,1039.4 L2211.1,1041.5 L2207.4,1042.0 L2204.5,1040.2 L2200.1,1040.4 L2195.9,1038.9 L2195.4,1035.4 L2193.3,1032.8 L2192.8,1030.2 L2192.8,1027.6Z M2156.6,1016.8 L2159.8,1017.8 L2162.4,1017.8 L2164.6,1020.5 L2168.6,1023.1 L2171.2,1025.7 L2174.4,1027.6 L2177.8,1029.9 L2179.1,1032.3 L2181.0,1035.4 L2182.3,1037.5 L2184.8,1039.4 L2184.5,1043.3 L2184.1,1046.7 L2181.0,1046.5 L2178.2,1044.1 L2175.1,1042.0 L2172.3,1038.6 L2170.5,1035.4 L2168.6,1032.3 L2166.5,1029.9 L2165.2,1026.8 L2162.6,1024.9 L2159.9,1021.8 L2157.2,1018.9Z M2182.4,1049.4 L2184.6,1047.0 L2187.2,1047.3 L2191.1,1048.8 L2195.0,1049.4 L2197.7,1048.6 L2202.1,1049.9 L2206.7,1051.7 L2206.3,1054.4 L2202.7,1053.3 L2197.4,1053.3 L2193.6,1052.0 L2189.6,1052.0 L2185.8,1050.9Z M2207.9,1053.0 L2211.9,1053.3 L2215.8,1053.0 L2218.4,1053.8 L2223.6,1053.6 L2228.9,1053.3 L2228.3,1054.6 L2222.2,1054.9 L2218.3,1054.6 L2220.3,1056.2 L2222.8,1058.3 L2219.5,1057.3 L2217.8,1055.2 L2213.0,1055.2 L2209.2,1054.6Z M2229.8,1058.6 L2232.7,1055.7 L2236.7,1054.1 L2239.9,1053.6 L2237.9,1055.2 L2233.9,1057.0 L2231.7,1058.3Z M2220.1,1046.0 L2220.3,1040.7 L2218.5,1038.6 L2219.8,1034.9 L2221.2,1031.5 L2222.2,1029.4 L2224.3,1028.1 L2228.3,1028.9 L2231.7,1029.1 L2234.8,1027.3 L2234.3,1029.4 L2232.2,1030.4 L2227.0,1030.2 L2223.8,1030.2 L2222.2,1033.6 L2224.3,1034.9 L2228.3,1033.6 L2230.4,1033.9 L2229.0,1035.4 L2226.4,1036.5 L2227.4,1039.4 L2229.4,1042.0 L2229.8,1045.4 L2228.0,1045.7 L2227.5,1043.9 L2225.4,1043.9 L2224.2,1041.5 L2224.2,1038.9 L2222.7,1039.4 L2222.6,1043.3 L2222.5,1046.0Z M2241.4,1028.9 L2242.7,1026.2 L2244.5,1027.6 L2242.7,1030.2 L2244.6,1031.0 L2242.7,1033.3 L2241.9,1031.5Z M2242.6,1039.9 L2247.9,1039.1 L2249.9,1041.0 L2246.5,1040.7 L2242.6,1040.7Z M2250.6,1033.6 L2254.5,1032.6 L2258.5,1033.6 L2259.0,1036.8 L2260.5,1040.2 L2263.1,1039.4 L2266.3,1036.8 L2270.3,1036.2 L2274.2,1037.5 L2276.8,1038.3 L2282.0,1040.4 L2285.9,1041.7 L2289.2,1044.1 L2289.6,1046.0 L2293.5,1047.3 L2294.2,1049.1 L2292.1,1049.4 L2293.2,1052.0 L2295.6,1055.2 L2298.8,1057.3 L2301.0,1059.1 L2296.6,1058.6 L2293.5,1058.0 L2290.4,1054.9 L2286.7,1052.0 L2284.0,1051.7 L2282.1,1053.8 L2281.1,1055.7 L2277.2,1055.7 L2273.5,1053.0 L2270.3,1053.3 L2268.2,1053.3 L2267.9,1050.7 L2270.6,1049.4 L2269.2,1046.0 L2266.1,1044.4 L2262.2,1043.1 L2258.3,1041.7 L2255.7,1042.0 L2255.2,1039.4 L2257.6,1037.5 L2253.7,1037.5 L2250.6,1035.2Z M2295.7,1046.2 L2300.2,1044.6 L2304.2,1042.8 L2306.3,1042.8 L2305.4,1045.4 L2301.3,1047.8 L2297.4,1047.8Z M2201.7,1088.8 L2204.2,1088.0 L2208.4,1085.6 L2211.8,1085.6 L2215.2,1084.1 L2220.5,1083.0 L2224.2,1079.3 L2224.8,1076.2 L2228.1,1077.0 L2228.5,1074.3 L2231.1,1072.2 L2234.0,1069.6 L2237.6,1068.0 L2240.0,1069.6 L2241.4,1070.7 L2244.3,1070.7 L2245.5,1067.0 L2248.1,1064.3 L2251.6,1063.6 L2253.4,1061.5 L2256.9,1062.8 L2260.8,1063.0 L2264.2,1063.6 L2261.7,1067.0 L2260.2,1070.9 L2263.0,1073.3 L2265.5,1074.1 L2268.9,1077.2 L2272.8,1077.5 L2275.4,1072.2 L2276.6,1067.0 L2277.2,1063.8 L2279.5,1059.6 L2281.2,1063.0 L2281.6,1067.0 L2282.3,1069.6 L2285.5,1070.9 L2285.4,1074.9 L2286.3,1080.9 L2289.4,1082.5 L2292.3,1085.1 L2293.6,1089.8 L2295.9,1092.5 L2297.8,1095.4 L2300.3,1098.0 L2299.6,1102.5 L2299.6,1106.4 L2296.5,1111.6 L2294.0,1115.6 L2289.4,1120.3 L2286.6,1124.0 L2283.3,1128.2 L2282.2,1130.3 L2277.2,1131.1 L2274.1,1132.7 L2271.7,1134.2 L2270.3,1132.7 L2268.6,1131.9 L2265.0,1133.5 L2261.8,1132.1 L2259.0,1131.4 L2257.2,1128.7 L2257.9,1126.1 L2255.5,1125.0 L2256.2,1122.7 L2254.3,1124.0 L2254.1,1122.2 L2256.0,1119.5 L2256.2,1117.2 L2254.1,1119.8 L2251.5,1121.6 L2249.2,1123.2 L2248.1,1121.9 L2246.8,1118.7 L2245.6,1116.1 L2241.9,1115.6 L2238.4,1114.5 L2234.6,1114.5 L2229.0,1116.1 L2225.0,1116.9 L2220.9,1118.2 L2218.9,1120.6 L2215.2,1120.6 L2210.1,1120.6 L2206.6,1122.2 L2203.7,1123.7 L2200.5,1123.5 L2197.4,1121.6 L2197.7,1119.5 L2199.7,1118.7 L2200.5,1115.6 L2200.1,1111.6 L2200.1,1108.5 L2199.1,1104.6 L2197.7,1100.3 L2199.5,1097.2 L2199.0,1094.6 L2200.6,1090.9Z M2266.0,1138.5 L2270.1,1139.5 L2274.6,1138.7 L2273.3,1142.4 L2270.9,1145.0 L2268.0,1146.1 L2266.2,1145.0 L2265.6,1142.4Z M2342.8,1122.2 L2344.1,1124.0 L2345.7,1126.1 L2347.7,1127.4 L2347.5,1130.0 L2349.8,1131.1 L2353.6,1130.6 L2351.2,1133.5 L2348.6,1134.8 L2346.6,1137.4 L2342.3,1140.6 L2339.9,1140.3 L2342.1,1137.4 L2340.4,1135.3 L2340.2,1134.5 L2343.3,1132.1 L2344.9,1129.3 L2344.2,1126.6 L2342.8,1124.0Z M2335.9,1137.9 L2338.1,1139.0 L2338.3,1141.1 L2334.8,1144.0 L2331.7,1146.6 L2327.9,1147.6 L2324.8,1151.1 L2322.6,1152.9 L2318.2,1154.2 L2315.1,1153.2 L2313.4,1151.9 L2317.3,1149.2 L2320.8,1147.1 L2325.8,1144.8 L2330.2,1142.4 L2333.5,1139.2Z M2331.8,1084.6 L2335.2,1086.7 L2338.3,1090.1 L2336.6,1089.8 L2332.6,1086.7Z M2367.8,1077.5 L2371.1,1077.7 L2370.0,1079.3 L2367.5,1079.1Z M1502.0,978.4 L1504.4,979.5 L1502.4,981.6 L1501.7,980.0Z" fill="#e6e8bb"/>
<g clip-path="url(#landclip)"><g filter="url(#mb5)">
<ellipse cx="1691.7" cy="848.9" rx="103.1" ry="18.4" fill="#dedfd4" opacity="1.0"/>
<ellipse cx="1570.9" cy="851.5" rx="34.6" ry="9.2" fill="#dedfd4" opacity="1.0"/>
<ellipse cx="1734.6" cy="873.8" rx="18.3" ry="10.5" fill="#dedfd4" opacity="1.0"/>
<ellipse cx="1539.5" cy="868.6" rx="18.1" ry="10.5" fill="#dedfd4" opacity="0.7"/>
<ellipse cx="1672.9" cy="883.0" rx="79.4" ry="14.5" fill="#b9d1aa" opacity="1.0"/>
<ellipse cx="1597.0" cy="873.8" rx="36.7" ry="15.8" fill="#b9d1aa" opacity="1.0"/>
<ellipse cx="1733.3" cy="900.1" rx="24.1" ry="11.8" fill="#b9d1aa" opacity="1.0"/>
<ellipse cx="1613.0" cy="900.1" rx="12.0" ry="15.8" fill="#b9d1aa" opacity="1.0"/>
<ellipse cx="1697.6" cy="936.9" rx="17.6" ry="18.4" fill="#c6d9ac" opacity="0.9"/>
<ellipse cx="1686.7" cy="910.6" rx="19.5" ry="7.9" fill="#c6d9ac" opacity="0.9"/>
<ellipse cx="1660.7" cy="923.8" rx="17.4" ry="23.6" fill="#ebeab2" opacity="1.0"/>
<ellipse cx="1624.3" cy="929.0" rx="17.5" ry="23.6" fill="#eadfc6" opacity="1.0"/>
<ellipse cx="1639.2" cy="963.2" rx="12.9" ry="15.8" fill="#eadfc6" opacity="0.8"/>
<ellipse cx="1619.1" cy="960.5" rx="7.7" ry="13.1" fill="#eadfc6" opacity="0.8"/>
<ellipse cx="1746.4" cy="1043.3" rx="42.0" ry="26.3" fill="#b9d1aa" opacity="1.0"/>
<ellipse cx="1727.9" cy="1023.6" rx="18.4" ry="10.5" fill="#b9d1aa" opacity="1.0"/>
<ellipse cx="1759.4" cy="1036.8" rx="26.3" ry="15.8" fill="#b9d1aa" opacity="0.7"/>
<ellipse cx="1762.7" cy="1063.0" rx="20.9" ry="13.1" fill="#c6d9ac" opacity="0.8"/>
<ellipse cx="1740.7" cy="1141.9" rx="9.9" ry="26.3" fill="#eadfc6" opacity="1.0"/>
<ellipse cx="1737.1" cy="1102.5" rx="10.3" ry="15.8" fill="#eadfc6" opacity="0.8"/>
<ellipse cx="1801.7" cy="1055.2" rx="10.5" ry="13.1" fill="#eadfc6" opacity="0.7"/>
<ellipse cx="1927.1" cy="968.4" rx="69.6" ry="21.0" fill="#f2e4d2" opacity="1.0"/>
<ellipse cx="1885.8" cy="971.1" rx="25.8" ry="15.8" fill="#f2e4d2" opacity="1.0"/>
<ellipse cx="1976.0" cy="965.8" rx="23.2" ry="15.8" fill="#f2e4d2" opacity="1.0"/>
<ellipse cx="1964.3" cy="1034.1" rx="23.6" ry="15.8" fill="#b0ceab" opacity="1.0"/>
<ellipse cx="1938.0" cy="1028.9" rx="10.5" ry="10.5" fill="#b9d1aa" opacity="1.0"/>
<ellipse cx="1890.8" cy="1014.4" rx="21.0" ry="5.8" fill="#c6d9ac" opacity="1.0"/>
<ellipse cx="1958.1" cy="1094.6" rx="18.1" ry="15.8" fill="#eadfc6" opacity="1.0"/>
<ellipse cx="1945.4" cy="1086.7" rx="7.8" ry="18.4" fill="#f2e4d2" opacity="0.8"/>
<ellipse cx="2024.6" cy="1015.7" rx="13.1" ry="15.8" fill="#ead8bd" opacity="1.0"/>
<ellipse cx="2006.3" cy="1036.8" rx="7.9" ry="13.1" fill="#eadfc6" opacity="0.6"/>
<ellipse cx="1984.9" cy="1000.0" rx="36.6" ry="6.6" fill="#ebeab2" opacity="0.7"/>
<ellipse cx="1935.5" cy="902.7" rx="38.6" ry="15.8" fill="#d5e0ae" opacity="1.0"/>
<ellipse cx="1940.1" cy="863.3" rx="17.9" ry="15.8" fill="#c2d5ae" opacity="1.0"/>
<ellipse cx="1896.5" cy="926.4" rx="12.4" ry="7.9" fill="#e6e2b8" opacity="1.0"/>
<ellipse cx="2010.8" cy="879.1" rx="41.7" ry="15.8" fill="#b9d1aa" opacity="1.0"/>
<ellipse cx="2124.3" cy="873.8" rx="114.6" ry="17.1" fill="#b9d1aa" opacity="1.0"/>
<ellipse cx="2222.6" cy="884.3" rx="32.8" ry="18.4" fill="#b9d1aa" opacity="1.0"/>
<ellipse cx="2209.5" cy="905.4" rx="14.5" ry="13.1" fill="#c6d9ac" opacity="1.0"/>
<ellipse cx="2066.2" cy="846.2" rx="51.1" ry="11.8" fill="#dedfd4" opacity="1.0"/>
<ellipse cx="2138.7" cy="843.6" rx="71.8" ry="14.5" fill="#dedfd4" opacity="1.0"/>
<ellipse cx="2256.9" cy="855.4" rx="56.9" ry="15.8" fill="#dedfd4" opacity="1.0"/>
<ellipse cx="2015.2" cy="852.8" rx="26.1" ry="7.9" fill="#dedfd4" opacity="1.0"/>
<ellipse cx="2246.3" cy="868.6" rx="31.7" ry="10.5" fill="#dedfd4" opacity="0.85"/>
<ellipse cx="2289.4" cy="871.2" rx="18.2" ry="13.1" fill="#dedfd4" opacity="0.9"/>
<ellipse cx="2278.3" cy="887.0" rx="7.1" ry="13.1" fill="#dedfd4" opacity="0.6"/>
<ellipse cx="1960.2" cy="848.9" rx="21.5" ry="5.3" fill="#dedfd4" opacity="0.8"/>
<ellipse cx="2025.3" cy="971.1" rx="23.2" ry="21.0" fill="#f2e4d2" opacity="1.0"/>
<ellipse cx="2008.1" cy="947.4" rx="12.7" ry="9.2" fill="#ece2cc" opacity="1.0"/>
<ellipse cx="2053.9" cy="947.4" rx="22.9" ry="13.1" fill="#e8dccc" opacity="1.0"/>
<ellipse cx="2059.5" cy="918.5" rx="32.1" ry="11.8" fill="#ede6c8" opacity="1.0"/>
<ellipse cx="2144.1" cy="921.1" rx="44.5" ry="11.8" fill="#ecdfca" opacity="1.0"/>
<ellipse cx="2106.3" cy="929.0" rx="15.0" ry="6.6" fill="#ecdfca" opacity="1.0"/>
<ellipse cx="2129.6" cy="944.8" rx="30.4" ry="11.0" fill="#cfd3d5" opacity="1.0"/>
<ellipse cx="2134.4" cy="943.5" rx="20.3" ry="6.6" fill="#d6dadc" opacity="1.0"/>
<ellipse cx="2089.8" cy="934.3" rx="12.6" ry="7.9" fill="#d3d7d6" opacity="0.9"/>
<ellipse cx="2161.7" cy="952.7" rx="10.2" ry="10.5" fill="#d8dccf" opacity="0.8"/>
<ellipse cx="2171.7" cy="984.2" rx="15.6" ry="18.4" fill="#cbdcaa" opacity="1.0"/>
<ellipse cx="2203.3" cy="1031.5" rx="13.1" ry="10.5" fill="#c3d7a8" opacity="1.0"/>
<ellipse cx="2171.8" cy="1032.8" rx="10.5" ry="13.1" fill="#c3d7a8" opacity="1.0"/>
<ellipse cx="2268.7" cy="1044.6" rx="23.6" ry="7.9" fill="#c0d5a6" opacity="1.0"/>
<ellipse cx="2226.9" cy="1036.8" rx="7.9" ry="10.5" fill="#c7d9aa" opacity="1.0"/>
<ellipse cx="2231.2" cy="1005.2" rx="7.9" ry="18.4" fill="#cfdfae" opacity="0.8"/>
<ellipse cx="2253.0" cy="934.3" rx="10.0" ry="13.1" fill="#cfdfae" opacity="0.8"/>
<ellipse cx="2109.3" cy="984.2" rx="10.4" ry="21.0" fill="#e6e6b2" opacity="0.5"/>
<ellipse cx="2246.4" cy="1097.2" rx="33.5" ry="17.1" fill="#efd7bf" opacity="1.0"/>
<ellipse cx="2221.2" cy="1094.6" rx="15.5" ry="13.1" fill="#efd7bf" opacity="0.8"/>
<ellipse cx="2282.4" cy="1097.2" rx="6.4" ry="26.3" fill="#d9e2b0" opacity="0.7"/>
<ellipse cx="2253.7" cy="1068.3" rx="20.9" ry="6.6" fill="#dde4b2" opacity="0.7"/>
</g>
<g filter="url(#mb2)">
<polyline points="1707.1,1015.7 1702.1,1031.5 1701.0,1044.6" fill="none" stroke="#d5d6c8" stroke-width="5" stroke-linecap="round" stroke-linejoin="round" opacity="0.8"/>
<polyline points="1701.0,1044.6 1704.8,1055.2 1711.8,1065.7 1720.2,1073.5 1726.5,1081.4 1730.1,1091.9 1729.8,1105.1 1729.0,1118.2 1728.7,1131.4 1729.5,1147.1 1730.9,1162.9" fill="none" stroke="#d0d0cc" stroke-width="8" stroke-linecap="round" stroke-linejoin="round" opacity="1.0"/>
<polyline points="1722.7,1072.2 1729.9,1081.4 1732.9,1091.9 1732.0,1102.5" fill="none" stroke="#d0d0cc" stroke-width="12" stroke-linecap="round" stroke-linejoin="round" opacity="1.0"/>
<polyline points="1703.9,1052.5 1710.4,1063.0 1722.9,1074.9 1729.8,1089.3 1729.3,1107.7 1729.1,1123.5" fill="none" stroke="#e8e8e6" stroke-width="3.2" stroke-linecap="round" stroke-linejoin="round" opacity="0.95"/>
<polyline points="1568.8,866.0 1592.0,871.2 1605.3,887.0 1617.9,900.1 1625.7,910.6 1634.3,921.1 1638.6,931.6 1637.8,944.8" fill="none" stroke="#dcd9cf" stroke-width="7" stroke-linecap="round" stroke-linejoin="round" opacity="0.3"/>
<polyline points="1637.5,957.9 1642.6,973.7 1649.4,981.6" fill="none" stroke="#dcd9cf" stroke-width="5" stroke-linecap="round" stroke-linejoin="round" opacity="0.6"/>
<polyline points="2081.8,931.6 2098.0,938.2 2115.3,950.0 2131.7,956.6 2149.6,956.6 2160.6,960.5" fill="none" stroke="#c9cece" stroke-width="6" stroke-linecap="round" stroke-linejoin="round" opacity="0.9"/>
<polyline points="2092.1,921.1 2109.1,919.8 2122.2,913.2 2128.7,902.7" fill="none" stroke="#d5d6d0" stroke-width="4" stroke-linecap="round" stroke-linejoin="round" opacity="0.4"/>
<polyline points="2016.4,929.0 2032.4,936.9 2049.4,952.7 2065.6,960.5" fill="none" stroke="#dcd6cc" stroke-width="5" stroke-linecap="round" stroke-linejoin="round" opacity="0.6"/>
<polyline points="1921.2,913.2 1930.9,908.8 1940.6,908.0" fill="none" stroke="#dcdcd6" stroke-width="3" stroke-linecap="round" stroke-linejoin="round" opacity="0.7"/>
<polyline points="2000.8,1005.2 2006.2,1018.4 2001.1,1031.5 1998.4,1044.6" fill="none" stroke="#d2d9b8" stroke-width="4" stroke-linecap="round" stroke-linejoin="round" opacity="0.5"/>
</g>
<g filter="url(#mb3)">
<polygon points="2090.3,930.3 2100.3,936.9 2107.0,946.1 2115.7,952.7 2126.7,957.1 2142.2,958.4 2154.8,957.1 2164.5,954.0 2167.9,946.1 2164.8,938.2 2154.7,933.0 2141.5,930.3 2127.4,934.3 2112.5,934.8 2101.5,930.3" fill="#cdd2d4" opacity="0.95"/>
<polygon points="2108.8,942.2 2120.2,948.7 2135.9,951.4 2150.9,950.0 2157.2,943.5 2145.9,938.2 2128.5,939.5 2115.8,938.7" fill="#dde1e3" opacity="0.9"/>
</g></g>
<path d="M2028.2,908.0 L2033.1,908.3 L2035.8,909.8 L2035.8,912.7 L2032.2,913.2 L2030.5,914.6 L2032.9,917.2 L2035.6,919.0 L2037.3,922.2 L2039.4,924.3 L2038.0,926.4 L2040.0,928.2 L2041.6,933.0 L2039.6,934.5 L2035.9,935.1 L2031.9,933.5 L2029.3,932.7 L2028.7,930.1 L2029.4,927.7 L2031.4,925.6 L2028.8,923.2 L2026.0,921.1 L2023.9,918.5 L2022.8,915.9 L2021.3,914.0 L2022.6,911.4 L2026.0,909.3Z" fill="#7fb1d7"/>
<path d="M2154.5,895.9 L2158.1,894.9 L2162.3,890.7 L2164.0,885.1 L2162.1,886.2 L2160.6,892.2 L2156.2,895.9Z" fill="#7fb1d7"/>
<path d="M1682.4,908.8 L1689.5,905.4 L1693.8,903.3 L1698.0,905.4 L1700.0,908.5 L1695.6,909.3 L1692.3,908.3 L1687.3,908.8Z" fill="#7fb1d7"/>
<path d="M1689.0,921.9 L1692.9,921.1 L1697.6,913.8 L1699.3,911.1 L1695.1,911.1 L1690.2,917.2Z" fill="#7fb1d7"/>
<path d="M1700.1,910.9 L1706.3,910.4 L1710.4,913.2 L1705.4,918.5 L1701.0,916.7 L1702.5,912.7Z" fill="#7fb1d7"/>
<path d="M1700.0,922.4 L1705.8,922.2 L1711.5,919.0 L1707.7,919.3 L1701.1,921.1Z" fill="#7fb1d7"/>
<path d="M1710.1,917.7 L1716.7,917.7 L1718.9,915.9 L1714.7,915.9Z" fill="#7fb1d7"/>
<path d="M1639.5,858.1 L1645.5,856.0 L1645.2,859.4 L1638.8,860.7Z" fill="#7fb1d7"/>
<path d="M1639.9,871.2 L1648.7,867.8 L1658.5,866.5 L1652.0,869.9 L1644.1,871.7Z" fill="#7fb1d7"/>
<path d="M1668.9,898.8 L1677.0,890.1 L1675.8,897.5 L1672.3,899.3Z" fill="#7fb1d7"/>
<path d="M1990.0,1033.6 L1992.7,1031.0 L1995.8,1031.5 L1996.6,1034.7 L1994.5,1038.1 L1991.1,1038.3 L1989.8,1036.2Z" fill="#7fb1d7"/>
<path d="M1759.7,869.4 L1752.7,867.8 L1745.8,865.2 L1741.5,862.0 L1732.9,862.3 L1734.9,859.4 L1742.8,859.1 L1745.2,856.2 L1748.7,853.3 L1739.5,852.0 L1737.5,847.6 L1731.1,847.6 L1724.7,847.6 L1717.5,845.5 L1719.3,841.0 L1728.9,837.6 L1739.1,837.8 L1743.8,840.2 L1750.0,842.3 L1756.7,845.5 L1760.5,848.9 L1761.3,852.8 L1770.4,856.2 L1769.2,859.4 L1762.4,859.9 L1756.4,859.4 L1761.3,862.8 L1760.0,866.5Z" fill="#e3e3db"/>
<path d="M1655.6,848.3 L1662.7,843.6 L1658.7,841.0 L1669.7,839.1 L1675.7,839.4 L1681.7,839.7 L1686.9,841.0 L1689.4,847.6 L1681.1,850.2 L1673.2,850.7 L1662.2,851.0Z" fill="#e3e3db"/>
<path d="M1643.3,842.8 L1652.1,837.6 L1660.2,836.0 L1666.8,838.9 L1659.4,840.2 L1653.2,843.6 L1646.2,844.4Z" fill="#e3e3db"/>
<path d="M1743.8,832.3 L1736.5,832.6 L1728.7,832.8 L1720.9,833.1 L1722.2,830.2 L1728.9,830.6 L1735.7,831.0 L1745.2,831.8Z" fill="#e3e3db"/>
<path d="M1668.4,833.9 L1674.8,835.7 L1682.6,835.1 L1690.3,834.4 L1693.7,831.8 L1687.9,830.5 L1679.4,831.0 L1672.4,831.0Z" fill="#e3e3db"/>
<path d="M1706.2,841.8 L1711.1,842.3 L1719.1,838.4 L1716.9,837.0 L1709.7,837.6Z" fill="#e3e3db"/>
<path d="M1690.1,843.6 L1698.2,844.1 L1704.2,840.2 L1702.5,837.0 L1694.2,839.7Z" fill="#e3e3db"/>
<path d="M1713.6,859.9 L1720.5,859.4 L1726.2,863.8 L1719.3,866.7 L1714.3,865.4 L1711.9,863.3Z" fill="#e3e3db"/>
<path d="M1518.0,850.4 L1521.1,851.5 L1524.6,854.1 L1529.8,855.4 L1532.4,857.8 L1527.9,859.4 L1521.7,862.3 L1517.2,861.2 L1516.8,859.4 L1511.3,859.4 L1507.7,860.7 L1506.6,860.7Z" fill="#e3e3db"/>
<path d="M2185.0,833.6 L2190.9,831.8 L2200.3,832.8 L2211.7,833.9 L2204.9,834.9 L2198.7,834.9 L2192.6,834.9 L2194.4,838.4 L2203.3,838.9 L2197.7,837.6Z" fill="#e3e3db"/>
<path d="M1735.9,830.7 L1728.7,829.7 L1735.9,825.7 L1732.8,820.8 L1746.5,816.5 L1754.3,815.5 L1762.2,814.4 L1769.9,813.4 L1775.1,813.7 L1780.2,814.1 L1785.5,814.4 L1790.7,814.7 L1790.1,817.9 L1783.7,818.9 L1777.3,820.0 L1764.7,823.9 L1756.9,826.5 L1745.7,831.0Z" fill="#eef0f3"/>
<path d="M1719.0,826.0 L1726.8,826.0 L1738.0,823.4 L1736.2,819.2 L1728.9,818.1 L1722.7,821.3Z" fill="#eef0f3"/>
<path d="M1928.0,825.2 L1931.5,821.8 L1939.1,821.3 L1944.5,820.0 L1950.3,820.2 L1956.1,820.5 L1958.3,821.5 L1949.4,824.4 L1948.8,826.5 L1943.2,828.1 L1940.5,830.2 L1936.4,829.2 L1933.1,826.5Z" fill="#eef0f3"/>
<path d="M2014.9,842.8 L2020.1,845.5 L2028.3,845.7 L2026.3,842.3 L2022.0,839.7 L2023.6,836.3 L2027.8,832.3 L2035.1,831.0 L2043.8,829.4 L2038.2,829.4 L2029.1,831.0 L2022.1,833.1 L2019.3,835.7 L2019.6,838.9 L2016.3,841.0Z" fill="#eef0f3"/>
<path d="M2090.5,823.4 L2096.6,821.8 L2090.0,819.2 L2081.9,818.6 L2088.8,818.1 L2098.0,820.4 L2107.1,822.6 L2112.1,825.5 L2102.8,826.0 L2098.8,823.9Z" fill="#eef0f3"/>
<path d="M1993.9,820.0 L2001.1,819.2 L2006.6,818.9 L2012.1,818.6 L2018.7,817.3 L2023.8,819.2 L2017.2,820.8 L2011.5,820.8 L2005.8,820.8 L1996.5,821.3Z" fill="#eef0f3"/>
<path d="M1805.8,874.4 L1801.4,872.5 L1796.1,870.7 L1793.6,867.3 L1791.3,863.3 L1789.6,858.1 L1789.1,854.7 L1791.6,850.2 L1797.0,848.9 L1795.8,846.2 L1790.4,843.6 L1791.0,839.7 L1789.2,834.4 L1785.5,831.8 L1779.4,831.8 L1773.4,831.8 L1767.1,830.5 L1765.4,827.1 L1763.4,825.7 L1775.3,822.6 L1783.5,819.2 L1795.2,816.0 L1801.6,815.7 L1808.0,815.3 L1814.4,815.0 L1824.5,813.4 L1830.9,812.9 L1837.2,812.3 L1843.5,811.8 L1850.6,812.1 L1857.7,812.3 L1863.5,813.9 L1869.5,815.5 L1875.8,816.3 L1882.2,817.1 L1873.9,821.3 L1870.5,824.4 L1867.5,829.7 L1866.9,833.6 L1862.2,837.0 L1860.4,841.5 L1855.8,843.6 L1858.6,846.2 L1852.8,848.9 L1845.8,851.8 L1836.9,852.8 L1830.5,857.3 L1823.6,858.6 L1817.6,860.7 L1813.1,866.0 L1809.3,870.7Z" fill="#eceef3"/>
<clipPath id="grclip"><path d="M1805.8,874.4 L1801.4,872.5 L1796.1,870.7 L1793.6,867.3 L1791.3,863.3 L1789.6,858.1 L1789.1,854.7 L1791.6,850.2 L1797.0,848.9 L1795.8,846.2 L1790.4,843.6 L1791.0,839.7 L1789.2,834.4 L1785.5,831.8 L1779.4,831.8 L1773.4,831.8 L1767.1,830.5 L1765.4,827.1 L1763.4,825.7 L1775.3,822.6 L1783.5,819.2 L1795.2,816.0 L1801.6,815.7 L1808.0,815.3 L1814.4,815.0 L1824.5,813.4 L1830.9,812.9 L1837.2,812.3 L1843.5,811.8 L1850.6,812.1 L1857.7,812.3 L1863.5,813.9 L1869.5,815.5 L1875.8,816.3 L1882.2,817.1 L1873.9,821.3 L1870.5,824.4 L1867.5,829.7 L1866.9,833.6 L1862.2,837.0 L1860.4,841.5 L1855.8,843.6 L1858.6,846.2 L1852.8,848.9 L1845.8,851.8 L1836.9,852.8 L1830.5,857.3 L1823.6,858.6 L1817.6,860.7 L1813.1,866.0 L1809.3,870.7Z"/></clipPath>
<g clip-path="url(#grclip)"><g filter="url(#mb5)">
<ellipse cx="1818.2" cy="842.3" rx="18.9" ry="23.6" fill="#f6f7fa" opacity="0.9"/>
<ellipse cx="1805.8" cy="863.3" rx="8.9" ry="10.5" fill="#f6f7fa" opacity="0.8"/>
</g></g>
<path d="M1540,1237.4 L1557.8,1237.4 L1591.8,1234.8 L1605.4,1230.6 L1625,1227 L1642.9,1223.8 L1657,1225 L1670,1225.5 L1681,1222 L1692.2,1219.5 L1704,1220.4 L1712.6,1224.6 L1725,1224.5 L1738.1,1222.9 L1744.9,1216.1 L1755.1,1211 L1760.5,1203.5 L1763.5,1199.5 L1769,1197.6 L1774,1198.6 L1777.5,1203 L1778.5,1210 L1781.5,1219.5 L1782.3,1227.2 L1792.5,1231.4 L1811.2,1234.8 L1831.6,1234.8 L1850.3,1228 L1862.2,1222.9 L1882.7,1217.8 L1900,1216.1 L1905.5,1214.4 L1925,1215.5 L1948,1215.3 L1975.2,1211.9 L1999,1209.3 L2012,1206 L2024.6,1204.6 L2038,1205.5 L2050,1208.5 L2065.4,1213.6 L2075,1211 L2084,1208.5 L2100,1205.5 L2118,1203.4 L2135,1204.5 L2152,1205.1 L2175,1204.5 L2194.6,1204.6 L2210,1205.2 L2225.2,1206.8 L2238,1210 L2250.7,1214.4 L2264.3,1218.7 L2252,1223 L2240.5,1226.3 L2230.3,1233.1 L2262,1234.2 L2300,1240 L2300,1300 L1500,1300 L1500,1237.4Z" fill="#f3f4f8"/>
<path d="M1540,1237.4 L1557.8,1237.4 L1591.8,1234.8 L1600,1243 L1612,1252 L1630,1264 L1500,1290 Z" fill="#e7eef8"/>
<path d="M2230.3,1233.1 L2262,1234.2 L2300,1240 L2300,1300 L2180,1262 L2192,1251 L2206,1241 Z" fill="#e7eef8"/>
</g>
<polyline points="1733.5,1127.5 1740.4,1144.2 1747.6,1160.5 1757.3,1177.1 1770.3,1193.4" fill="none" stroke="#6622f8" stroke-width="4.7"/>
<circle cx="1733.5" cy="1127.5" r="5.6" fill="#000"/>
<circle cx="1740.4" cy="1144.2" r="5.6" fill="#000"/>
<circle cx="1747.6" cy="1160.5" r="5.6" fill="#000"/>
<circle cx="1757.3" cy="1177.1" r="5.6" fill="#000"/>
<circle cx="1770.3" cy="1193.4" r="5.6" fill="#000"/>
<path d="M1670.2,795.0 L2142.8,795.0 A236.5,236.5 0 0 1 2142.8,1268.0 L1670.2,1268.0 A236.5,236.5 0 0 1 1670.2,795.0Z" fill="none" stroke="#000" stroke-width="2.9"/>
<text transform="translate(1746.20,1134.40) scale(1.0388,1)" x="0.6 17.6 34.6 43.6 60.6 77.6 86.6 103.6 120.4 128.1 147.6" y="0" font-size="28.61" fill="#000" stroke="#000" stroke-width="0.3">18:10:29 UT</text>
<text transform="translate(1781.00,1200.60) scale(1.0388,1)" x="0.6 17.6 34.6 43.6 60.6 77.6 86.6 103.6 120.4 128.1 147.6" y="0" font-size="28.61" fill="#000" stroke="#000" stroke-width="0.3">18:16:58 UT</text>
</g>
<circle cx="1458.3" cy="1353.3" r="6.9" fill="#000"/>
<text transform="translate(1498.70,1360.20) scale(1.0094,1)" x="-0.3 15.7 28.5 34.0 45.9 53.1 59.2 73.8 81.6 95.5 104.6 117.2 130.9 136.4" y="0" font-size="23.56" fill="#000" stroke="#000" stroke-width="0.3">Axis intervals</text>
<text transform="translate(1452.30,1404.20) scale(1.0094,1)" x="-0.5 17.8 31.5 45.4 54.1 68.4 76.5 82.6 96.5 110.3 118.0 138.7 152.4 166.2 179.9 187.1 193.6 208.7" y="0" font-size="23.56" fill="#000" stroke="#000" stroke-width="0.3">Operating mode: AM</text>
<rect x="1745.00" y="1307.80" width="549.50" height="27.20" fill="url(#cmapH)" stroke="#000" stroke-width="2.22"/>
<line x1="1791.00" y1="1335.00" x2="1791.00" y2="1345.80" stroke="#000" stroke-width="2.22" stroke-linecap="butt"/>
<text x="1769.79" y="1371.80" font-size="22.67" fill="#000" stroke="#000" stroke-width="0.3" textLength="42.42" lengthAdjust="spacingAndGlyphs">400</text>
<line x1="1883.00" y1="1335.00" x2="1883.00" y2="1345.80" stroke="#000" stroke-width="2.22" stroke-linecap="butt"/>
<text x="1861.79" y="1371.80" font-size="22.67" fill="#000" stroke="#000" stroke-width="0.3" textLength="42.42" lengthAdjust="spacingAndGlyphs">600</text>
<line x1="1975.00" y1="1335.00" x2="1975.00" y2="1345.80" stroke="#000" stroke-width="2.22" stroke-linecap="butt"/>
<text x="1953.79" y="1371.80" font-size="22.67" fill="#000" stroke="#000" stroke-width="0.3" textLength="42.42" lengthAdjust="spacingAndGlyphs">800</text>
<line x1="2067.00" y1="1335.00" x2="2067.00" y2="1345.80" stroke="#000" stroke-width="2.22" stroke-linecap="butt"/>
<text x="2038.72" y="1371.80" font-size="22.67" fill="#000" stroke="#000" stroke-width="0.3" textLength="56.56" lengthAdjust="spacingAndGlyphs">1000</text>
<line x1="2159.00" y1="1335.00" x2="2159.00" y2="1345.80" stroke="#000" stroke-width="2.22" stroke-linecap="butt"/>
<text x="2130.72" y="1371.80" font-size="22.67" fill="#000" stroke="#000" stroke-width="0.3" textLength="56.56" lengthAdjust="spacingAndGlyphs">1200</text>
<line x1="2251.00" y1="1335.00" x2="2251.00" y2="1345.80" stroke="#000" stroke-width="2.22" stroke-linecap="butt"/>
<text x="2222.72" y="1371.80" font-size="22.67" fill="#000" stroke="#000" stroke-width="0.3" textLength="56.56" lengthAdjust="spacingAndGlyphs">1400</text>
<text transform="translate(2019.50,1407.00) scale(1.0094,1)" x="-72.5 -56.7 -50.0 -42.0 -35.2 -27.2 -13.3 0.5 14.1 21.2 29.9 43.1 64.0" y="0" font-size="23.56" fill="#000" stroke="#000" stroke-width="0.3">Altitude (km)</text>
<text transform="translate(1609.20,1451.60) scale(1.0094,1)" x="-22.6 -8.1 6.7" y="0" font-size="23.56" fill="#000" stroke="#000" stroke-width="0.3">VSA</text>
<text transform="translate(1738.90,1451.60) scale(1.0094,1)" x="-21.8 -7.3 6.6" y="0" font-size="23.56" fill="#000" stroke="#000" stroke-width="0.3">VES</text>
<text transform="translate(1869.20,1451.60) scale(1.0094,1)" x="-25.6 -10.2 9.1" y="0" font-size="23.56" fill="#000" stroke="#000" stroke-width="0.3">VD+</text>
<text transform="translate(2000.50,1451.60) scale(1.0094,1)" x="-20.3 -4.9 12.1" y="0" font-size="23.56" fill="#000" stroke="#000" stroke-width="0.3">VD-</text>
<text transform="translate(2131.00,1451.60) scale(1.0094,1)" x="-38.0 -22.9 -4.4 10.5 24.2" y="0" font-size="23.56" fill="#000" stroke="#000" stroke-width="0.3">VMCPF</text>
<text transform="translate(2262.00,1451.60) scale(1.0094,1)" x="-39.2 -24.7 -8.8 9.3 23.5" y="0" font-size="23.56" fill="#000" stroke="#000" stroke-width="0.3">VCMPB</text>
<text transform="translate(1451.90,1480.30) scale(1.0094,1)" x="-0.3 19.4 25.5 39.3 46.4 54.3 70.1" y="0" font-size="23.56" fill="#000" stroke="#000" stroke-width="0.3">Min (V)</text>
<text x="1583.98" y="1480.30" font-size="22.67" fill="#000" stroke="#000" stroke-width="0.3" textLength="50.44" lengthAdjust="spacingAndGlyphs">-315</text>
<text x="1714.16" y="1480.30" font-size="22.67" fill="#000" stroke="#000" stroke-width="0.3" textLength="49.48" lengthAdjust="spacingAndGlyphs">0.02</text>
<text x="1840.45" y="1480.30" font-size="22.67" fill="#000" stroke="#000" stroke-width="0.3" textLength="57.50" lengthAdjust="spacingAndGlyphs">-0.02</text>
<text x="1971.75" y="1480.30" font-size="22.67" fill="#000" stroke="#000" stroke-width="0.3" textLength="57.50" lengthAdjust="spacingAndGlyphs">-0.00</text>
<text x="2098.71" y="1480.30" font-size="22.67" fill="#000" stroke="#000" stroke-width="0.3" textLength="64.57" lengthAdjust="spacingAndGlyphs">-2284</text>
<text x="2236.78" y="1480.30" font-size="22.67" fill="#000" stroke="#000" stroke-width="0.3" textLength="50.44" lengthAdjust="spacingAndGlyphs">-199</text>
<text transform="translate(1451.90,1509.50) scale(1.0094,1)" x="-0.3 19.2 33.1 45.7 52.9 60.8 76.5" y="0" font-size="23.56" fill="#000" stroke="#000" stroke-width="0.3">Max (V)</text>
<text x="1591.05" y="1509.50" font-size="22.67" fill="#000" stroke="#000" stroke-width="0.3" textLength="36.30" lengthAdjust="spacingAndGlyphs">-21</text>
<text x="1714.16" y="1509.50" font-size="22.67" fill="#000" stroke="#000" stroke-width="0.3" textLength="49.48" lengthAdjust="spacingAndGlyphs">0.04</text>
<text x="1840.45" y="1509.50" font-size="22.67" fill="#000" stroke="#000" stroke-width="0.3" textLength="57.50" lengthAdjust="spacingAndGlyphs">-0.02</text>
<text x="1975.76" y="1509.50" font-size="22.67" fill="#000" stroke="#000" stroke-width="0.3" textLength="49.48" lengthAdjust="spacingAndGlyphs">0.01</text>
<text x="2098.71" y="1509.50" font-size="22.67" fill="#000" stroke="#000" stroke-width="0.3" textLength="64.57" lengthAdjust="spacingAndGlyphs">-2281</text>
<text x="2236.78" y="1509.50" font-size="22.67" fill="#000" stroke="#000" stroke-width="0.3" textLength="50.44" lengthAdjust="spacingAndGlyphs">-198</text>
<text transform="translate(1451.90,1538.70) scale(1.0094,1)" x="-0.3 15.0 27.0 40.6 47.7 55.6 71.4" y="0" font-size="23.56" fill="#000" stroke="#000" stroke-width="0.3">Ave (V)</text>
<text x="1583.98" y="1538.70" font-size="22.67" fill="#000" stroke="#000" stroke-width="0.3" textLength="50.44" lengthAdjust="spacingAndGlyphs">-180</text>
<text x="1714.16" y="1538.70" font-size="22.67" fill="#000" stroke="#000" stroke-width="0.3" textLength="49.48" lengthAdjust="spacingAndGlyphs">0.03</text>
<text x="1840.45" y="1538.70" font-size="22.67" fill="#000" stroke="#000" stroke-width="0.3" textLength="57.50" lengthAdjust="spacingAndGlyphs">-0.02</text>
<text x="1975.76" y="1538.70" font-size="22.67" fill="#000" stroke="#000" stroke-width="0.3" textLength="49.48" lengthAdjust="spacingAndGlyphs">0.00</text>
<text x="2098.71" y="1538.70" font-size="22.67" fill="#000" stroke="#000" stroke-width="0.3" textLength="64.57" lengthAdjust="spacingAndGlyphs">-2282</text>
<text x="2236.78" y="1538.70" font-size="22.67" fill="#000" stroke="#000" stroke-width="0.3" textLength="50.44" lengthAdjust="spacingAndGlyphs">-199</text>
<text transform="translate(1448.20,1579.50) scale(1.0094,1)" x="-1.5 17.1 27.4 44.2 61.7 78.8 94.0 111.2 128.4 137.4 155.1 170.9 179.9 187.7 199.2 223.3 238.2 253.3 271.3 298.1 324.0 341.4 352.7 368.5 377.8 393.6 411.0 421.3 436.4 443.7 460.9 478.1 487.1" y="0" font-size="29.44" fill="#000" stroke="#000" stroke-width="0.3">Produced by irm_summary version 5</text>
</svg></body></html>
